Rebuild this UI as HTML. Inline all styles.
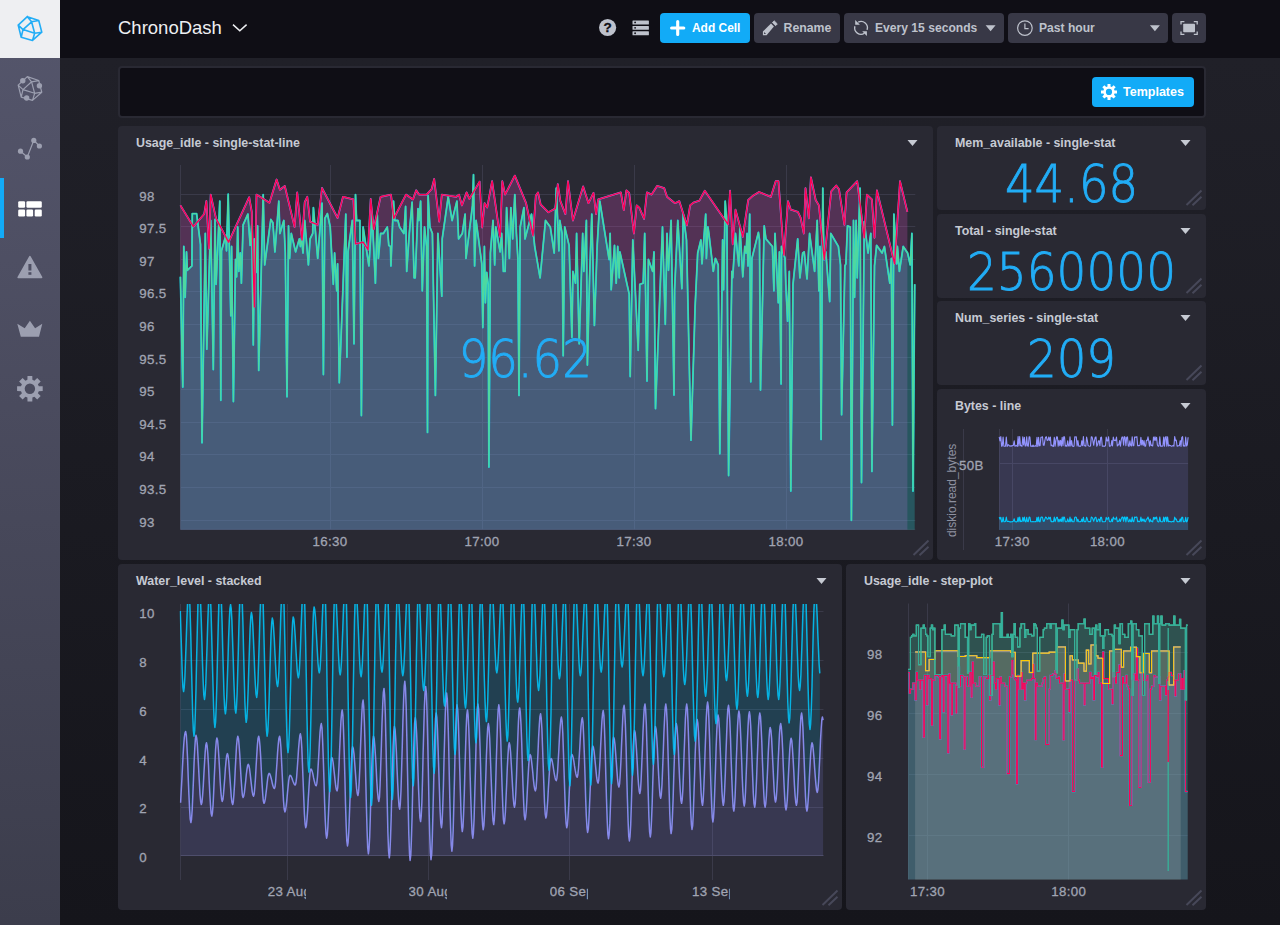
<!DOCTYPE html>
<html lang="en"><head><meta charset="utf-8"><title>ChronoDash</title>
<style>
*{box-sizing:border-box;margin:0;padding:0}
html,body{width:1280px;height:925px;overflow:hidden;background:#1c1c21;font-family:"Liberation Sans",Arial,sans-serif;}
body{position:relative}
.sidebar{position:absolute;left:0;top:0;width:60px;height:925px;background:linear-gradient(to bottom,#55566c 0,#3c3d4c 100%)}
.logo{position:absolute;left:0;top:0;width:60px;height:58px;background:#eeeff2}
.active{position:absolute;left:0;top:178px;width:4px;height:60px;background:#12abf7}
.header{position:absolute;left:60px;top:0;width:1220px;height:58px;background:#0f0e15}
.page{position:absolute;left:60px;top:58px;width:1220px;height:867px;background:linear-gradient(to bottom,#202028 0%,#15151b 100%)}
.title{position:absolute;left:118px;top:14px;height:28px;line-height:28px;font-size:18.5px;color:#eeeff2;white-space:nowrap}
.btn{position:absolute;top:13px;height:30px;border-radius:4px;background:#383846;color:#bec2cc;font-weight:bold;font-size:12.3px;line-height:30px;white-space:nowrap}
.btn.primary{background:#12abf7;color:#fff}
.btn span{position:absolute;top:0}
.tbar{position:absolute;left:118px;top:66px;width:1088px;height:52px;border:2px solid #292933;border-radius:4px;background:#0f0e15}
.cell{position:absolute;background:#292933;border-radius:4px}
.ct{position:absolute;font-weight:bold;font-size:12.4px;color:#c6cad3;white-space:nowrap;line-height:16px}
svg{position:absolute;left:0;top:0}
.big{font-size:52.5px;fill:#22adf6}
.ax{font-size:13.3px;letter-spacing:.35px;fill:#a0a4b2;stroke:#a0a4b2;stroke-width:.3px}
.xl{position:absolute;overflow:hidden;white-space:nowrap;font-size:13.3px;letter-spacing:.35px;color:#a0a4b2;-webkit-text-stroke:.3px #a0a4b2;height:18px;line-height:18px}
</style></head><body>
<div class="sidebar"></div><div class="logo"></div><div class="active"></div>
<div class="header"></div><div class="page"></div>

<div class="title">ChronoDash</div>
<div class="btn primary" style="left:660px;width:90px"><span style="left:32px;font-size:11.95px">Add Cell</span></div>
<div class="btn" style="left:754px;width:86px"><span style="left:29.5px">Rename</span></div>
<div class="btn" style="left:844px;width:160px"><span style="left:31px;font-size:12.12px">Every 15 seconds</span></div>
<div class="btn" style="left:1008px;width:160px"><span style="left:31px;font-size:12.1px">Past hour</span></div>
<div class="btn" style="left:1172px;width:34px"></div>
<div class="tbar"></div>
<div class="btn primary" style="left:1092px;top:77px;width:102px"><span style="left:31px;font-size:12.5px">Templates</span></div>
<div class="cell" style="left:118px;top:126px;width:815px;height:434px"></div>
<div class="ct" style="left:136px;top:135px">Usage_idle - single-stat-line</div>
<div class="cell" style="left:937px;top:126px;width:269px;height:84px"></div>
<div class="ct" style="left:955px;top:135px">Mem_available - single-stat</div>
<div class="cell" style="left:937px;top:214px;width:269px;height:84px"></div>
<div class="ct" style="left:955px;top:223px">Total - single-stat</div>
<div class="cell" style="left:937px;top:301px;width:269px;height:84px"></div>
<div class="ct" style="left:955px;top:310px">Num_series - single-stat</div>
<div class="cell" style="left:937px;top:389px;width:269px;height:171px"></div>
<div class="ct" style="left:955px;top:398px">Bytes - line</div>
<div class="cell" style="left:118px;top:564px;width:724px;height:346px"></div>
<div class="ct" style="left:136px;top:573px">Water_level - stacked</div>
<div class="cell" style="left:846px;top:564px;width:360px;height:346px"></div>
<div class="ct" style="left:864px;top:573px">Usage_idle - step-plot</div>
<svg width="1280" height="925" viewBox="0 0 1280 925" font-family='"Liberation Sans", Arial, sans-serif'>
<path d="M907.5 140.0 h10 l-5 6z" fill="#c6cad3"/>
<path d="M913.5 555.0 L928.5 540.5 M919.5 555.2 L928.5 546.7" stroke="#474859" stroke-width="2" fill="none"/>
<path d="M1180.5 140.0 h10 l-5 6z" fill="#c6cad3"/>
<path d="M1186.5 205.0 L1201.5 190.5 M1192.5 205.2 L1201.5 196.7" stroke="#474859" stroke-width="2" fill="none"/>
<path d="M1180.5 228.0 h10 l-5 6z" fill="#c6cad3"/>
<path d="M1186.5 293.0 L1201.5 278.5 M1192.5 293.2 L1201.5 284.7" stroke="#474859" stroke-width="2" fill="none"/>
<path d="M1180.5 315.0 h10 l-5 6z" fill="#c6cad3"/>
<path d="M1186.5 380.0 L1201.5 365.5 M1192.5 380.2 L1201.5 371.7" stroke="#474859" stroke-width="2" fill="none"/>
<path d="M1180.5 403.0 h10 l-5 6z" fill="#c6cad3"/>
<path d="M1186.5 555.0 L1201.5 540.5 M1192.5 555.2 L1201.5 546.7" stroke="#474859" stroke-width="2" fill="none"/>
<path d="M816.5 578.0 h10 l-5 6z" fill="#c6cad3"/>
<path d="M822.5 905.0 L837.5 890.5 M828.5 905.2 L837.5 896.7" stroke="#474859" stroke-width="2" fill="none"/>
<path d="M1180.5 578.0 h10 l-5 6z" fill="#c6cad3"/>
<path d="M1186.5 905.0 L1201.5 890.5 M1192.5 905.2 L1201.5 896.7" stroke="#474859" stroke-width="2" fill="none"/>
<path d="M27.30 16.65 L38.76 20.54 M38.76 20.54 L41.78 32.20 M41.78 32.20 L32.50 40.40 M32.50 40.40 L21.20 37.20 M21.20 37.20 L18.20 25.10 M18.20 25.10 L27.30 16.65 M27.30 16.65 L31.60 21.80 M31.60 21.80 L38.76 20.54 M31.60 21.80 L23.00 29.60 M18.20 25.10 L23.00 29.60 M23.00 29.60 L34.65 33.30 M31.60 21.80 L34.65 33.30 M34.65 33.30 L41.78 32.20 M34.65 33.30 L32.50 40.40 M23.00 29.60 L21.20 37.20" stroke="#22adf6" stroke-width="1.6" fill="none" stroke-linecap="round" stroke-linejoin="round"/>
<path d="M27.30 76.65 L38.76 80.54 M38.76 80.54 L41.78 92.20 M41.78 92.20 L32.50 100.40 M32.50 100.40 L21.20 97.20 M21.20 97.20 L18.20 85.10 M18.20 85.10 L27.30 76.65 M27.30 76.65 L31.60 81.80 M31.60 81.80 L38.76 80.54 M31.60 81.80 L23.00 89.60 M18.20 85.10 L23.00 89.60 M23.00 89.60 L34.65 93.30 M31.60 81.80 L34.65 93.30 M34.65 93.30 L41.78 92.20 M34.65 93.30 L32.50 100.40 M23.00 89.60 L21.20 97.20" stroke="#9c9fb0" stroke-width="1.2" fill="none" stroke-linecap="round" stroke-linejoin="round"/><circle cx="22.76" cy="80.76" r="2.7" fill="#9c9fb0"/><circle cx="39.40" cy="85.70" r="2.7" fill="#9c9fb0"/><circle cx="26.65" cy="98.05" r="2.7" fill="#9c9fb0"/>
<path d="M20.5 151.2 L27.3 157.0 L33.8 140.4 L39.4 146.0" stroke="#9c9fb0" stroke-width="1.2" fill="none"/>
<circle cx="20.5" cy="151.2" r="2.6" fill="#9c9fb0"/>
<circle cx="27.3" cy="157.0" r="2.6" fill="#9c9fb0"/>
<circle cx="33.8" cy="140.4" r="2.6" fill="#9c9fb0"/>
<circle cx="39.4" cy="146.0" r="2.6" fill="#9c9fb0"/>
<rect x="18.2" y="201.2" width="6.9" height="6.5" rx="1.2" fill="#fff"/>
<rect x="26.4" y="201.2" width="15.4" height="6.5" rx="1.2" fill="#fff"/>
<rect x="18.2" y="209.6" width="6.9" height="6.8" rx="1.2" fill="#fff"/>
<rect x="26.4" y="209.6" width="6.7" height="6.8" rx="1.2" fill="#fff"/>
<rect x="34.7" y="209.6" width="7.1" height="6.8" rx="1.2" fill="#fff"/>
<path d="M29.9 256.6 L41.6 277.4 L18.2 277.4 Z" fill="#9c9fb0" stroke="#9c9fb0" stroke-width="1.6" stroke-linejoin="round"/>
<rect x="28.4" y="264" width="3" height="6.5" fill="#4e4f63"/><rect x="28.4" y="272.2" width="3" height="2.6" fill="#4e4f63"/>
<path d="M17.3 323.8 L24.7 328.3 L29.9 320.8 L35.1 328.3 L42.3 323.8 L39 336.8 L20.8 336.8 Z" fill="#9c9fb0"/>
<path d="M27.4 379.8 L27.5 375.9 L32.3 375.9 L32.4 379.8 L34.4 380.7 L37.2 377.9 L40.7 381.4 L37.9 384.2 L38.8 386.2 L42.7 386.3 L42.7 391.1 L38.8 391.2 L37.9 393.2 L40.7 396.0 L37.2 399.5 L34.4 396.7 L32.4 397.6 L32.3 401.5 L27.5 401.5 L27.4 397.6 L25.4 396.7 L22.6 399.5 L19.1 396.0 L21.9 393.2 L21.0 391.2 L17.1 391.1 L17.1 386.3 L21.0 386.2 L21.9 384.2 L19.1 381.4 L22.6 377.9 L25.4 380.7 Z" fill="#9c9fb0"/><circle cx="29.9" cy="388.7" r="5.2" fill="#4b4c5f"/>
<path d="M233 24.6 L239.8 30.8 L246.6 24.6" stroke="#eeeff2" stroke-width="1.5" fill="none"/>
<circle cx="607.6" cy="27.5" r="8.6" fill="#bec2cc"/>
<text x="607.7" y="32.3" text-anchor="middle" font-size="13.5" font-weight="bold" fill="#0f0e15" stroke="#0f0e15" stroke-width=".3">?</text>
<rect x="632.5" y="20.5" width="16.4" height="3.9" rx=".5" fill="#bec2cc"/><circle cx="635.1" cy="22.45" r=".9" fill="#0f0e15"/>
<rect x="632.5" y="25.9" width="16.4" height="3.9" rx=".5" fill="#bec2cc"/><circle cx="635.1" cy="27.85" r=".9" fill="#0f0e15"/>
<rect x="632.5" y="31.3" width="16.4" height="3.9" rx=".5" fill="#bec2cc"/><circle cx="635.1" cy="33.25" r=".9" fill="#0f0e15"/>
<path d="M671.6 28 H683.8 M677.7 21.6 V34.4" stroke="#fff" stroke-width="3.1" stroke-linecap="round"/>
<path d="M762.9 35.2 V31.5 L771 23.6 L773.9 26.4 L766.6 35.2 Z" fill="#bec2cc"/><path d="M772.4 22.5 L774.2 20.8 L777.3 23.9 L775.6 25.7 Z" fill="#bec2cc" stroke="#bec2cc" stroke-width=".8" stroke-linejoin="round"/><path d="M764.1 32 V33.9 H766 Z" fill="#383846"/>
<g fill="none" stroke="#bec2cc" stroke-width="1.35"><path d="M858.2 22.2 A6.35 6.35 0 0 1 867.07 29.9"/><path d="M854.9 26.3 A6.35 6.35 0 0 0 864.5 33.27"/></g>
<path d="M855.2 19.9 V24.7 H859.9 Z M866.9 36 V31.3 H862.2 Z" fill="#bec2cc"/>
<path d="M985.6 25.2 h10 l-5 6z M1149.9 25.2 h10 l-5 6z" fill="#bec2cc"/>
<circle cx="1024.9" cy="28.1" r="7.3" fill="none" stroke="#bec2cc" stroke-width="1.2"/><path d="M1024.9 23.6 V28.6 H1028.6" fill="none" stroke="#bec2cc" stroke-width="1.2"/>
<rect x="1183.2" y="23.8" width="11.8" height="8.4" rx=".8" fill="#bec2cc"/>
<path d="M1181 24.6 V21.6 H1184.4 M1193.8 21.6 H1197.2 V24.6 M1197.2 31.4 V34.4 H1193.8 M1184.4 34.4 H1181 V31.4" fill="none" stroke="#bec2cc" stroke-width="1.3"/>
<path d="M1107.5 86.4 L1107.5 83.9 L1110.5 83.9 L1110.5 86.4 L1111.8 86.9 L1113.6 85.2 L1115.7 87.3 L1114.0 89.1 L1114.5 90.4 L1117.0 90.4 L1117.0 93.4 L1114.5 93.4 L1114.0 94.7 L1115.7 96.5 L1113.6 98.6 L1111.8 96.9 L1110.5 97.4 L1110.5 99.9 L1107.5 99.9 L1107.5 97.4 L1106.2 96.9 L1104.4 98.6 L1102.3 96.5 L1104.0 94.7 L1103.5 93.4 L1101.0 93.4 L1101.0 90.4 L1103.5 90.4 L1104.0 89.1 L1102.3 87.3 L1104.4 85.2 L1106.2 86.9 Z" fill="#fff"/><circle cx="1109.0" cy="91.9" r="3.1" fill="#12abf7"/>
<path d="M180.5 520.5 H915.3 M180.5 487.5 H915.3 M180.5 454.5 H915.3 M180.5 422.5 H915.3 M180.5 389.5 H915.3 M180.5 357.5 H915.3 M180.5 324.5 H915.3 M180.5 291.5 H915.3 M180.5 259.5 H915.3 M180.5 226.5 H915.3 M180.5 194.5 H915.3 M330.5 165.0 V529.8 M482.5 165.0 V529.8 M634.5 165.0 V529.8 M786.5 165.0 V529.8 M180.5 165.0 V529.8 M180.5 529.3 H915.3" stroke="#3a3a49" stroke-width="1" fill="none"/>
<path d="M180.4 205.4 L193.4 226.6 L204.2 214.0 L206.4 201.0 L209.0 248.6 L210.7 194.6 L216.0 218.4 L228.6 242.2 L249.2 197.2 L251.8 212.0 L254.4 307.0 L256.5 194.6 L269.5 202.8 L276.6 179.5 L279.9 189.8 L284.8 186.0 L294.6 227.0 L297.2 192.4 L302.0 240.0 L304.7 202.2 L307.3 196.8 L310.1 221.6 L317.7 224.9 L322.0 188.0 L337.6 218.0 L343.0 196.8 L353.4 199.4 L355.5 243.9 L363.1 242.2 L368.0 249.7 L370.7 199.0 L373.6 229.2 L380.6 196.8 L391.0 194.6 L393.8 218.4 L406.0 194.6 L413.0 199.4 L416.2 190.3 L419.0 194.6 L426.6 194.6 L431.6 189.2 L434.2 179.0 L439.2 221.6 L441.8 194.6 L456.2 196.8 L459.0 194.6 L461.9 205.4 L466.6 192.4 L469.4 198.9 L479.6 181.6 L482.2 227.5 L484.6 203.2 L487.2 207.6 L492.1 181.2 L500.1 236.8 L502.3 181.2 L505.1 194.6 L514.8 175.6 L526.1 203.2 L533.0 235.7 L535.8 195.7 L538.0 192.4 L540.6 204.3 L548.4 212.3 L555.3 208.6 L557.8 184.2 L560.4 201.1 L565.4 214.1 L568.0 181.2 L572.9 220.5 L583.1 186.4 L588.5 203.2 L593.5 192.9 L596.1 214.1 L598.2 199.4 L620.9 192.4 L623.8 210.2 L626.4 190.3 L629.2 192.9 L633.9 233.5 L636.7 205.4 L639.3 207.6 L644.1 218.8 L646.9 192.4 L651.6 194.6 L657.1 185.9 L664.2 188.1 L667.0 196.8 L675.0 203.2 L679.3 201.1 L686.9 225.3 L690.1 205.4 L693.4 202.6 L699.4 200.6 L704.8 190.7 L728.0 224.4 L730.1 190.7 L732.7 244.3 L735.5 209.7 L742.8 236.8 L748.2 200.0 L753.0 195.7 L759.0 192.0 L770.9 196.8 L775.7 181.2 L778.5 181.2 L783.9 255.1 L788.0 201.1 L790.8 209.7 L797.9 211.9 L800.5 217.3 L803.8 233.5 L805.5 188.1 L808.8 218.4 L810.9 177.3 L815.7 200.0 L818.9 205.4 L824.3 259.5 L831.2 191.4 L836.2 185.5 L839.0 189.2 L844.4 224.9 L846.6 192.4 L857.2 181.2 L864.3 237.8 L866.9 194.6 L871.9 199.4 L874.5 237.8 L876.9 190.3 L894.6 263.8 L900.0 181.2 L907.4 211.9 L907.4 529.8 L180.4 529.8 Z" fill="#ff0054" fill-opacity=".15"/>
<path d="M180.4 276.8 L182.8 387.0 L183.8 246.5 L185.2 297.3 L186.5 251.9 L187.3 270.3 L191.9 265.9 L192.3 213.6 L196.6 213.6 L200.5 244.3 L202.0 442.7 L205.3 233.5 L206.8 349.2 L210.7 220.5 L213.3 369.5 L215.0 219.5 L216.1 284.3 L219.8 201.1 L220.8 400.3 L221.5 250.8 L225.8 235.7 L226.5 250.8 L228.2 194.2 L230.8 315.7 L231.6 246.5 L233.4 401.6 L235.5 259.5 L236.6 276.8 L237.7 227.0 L238.8 271.4 L240.3 253.0 L241.4 283.2 L243.1 224.9 L247.9 214.1 L250.2 245.4 L251.8 224.9 L253.3 344.9 L254.4 238.9 L256.1 272.4 L257.6 225.9 L258.7 370.4 L263.2 194.6 L264.7 264.9 L270.8 219.5 L272.9 222.7 L274.9 251.9 L278.8 201.1 L279.9 233.5 L283.8 220.5 L285.3 253.0 L287.0 396.7 L288.5 225.9 L289.6 258.4 L291.3 233.5 L295.6 251.9 L299.3 238.9 L300.4 246.5 L301.5 237.8 L303.0 253.0 L304.7 220.5 L308.4 264.9 L310.1 238.9 L312.7 233.5 L313.4 207.6 L317.7 258.4 L322.0 203.2 L323.4 374.5 L324.8 218.4 L327.4 213.6 L330.2 227.0 L333.3 284.3 L334.6 253.0 L336.7 290.8 L337.6 263.8 L339.3 382.7 L345.8 214.1 L346.9 357.2 L348.0 251.9 L352.3 220.5 L354.0 343.8 L355.5 194.6 L356.6 220.5 L359.9 220.5 L361.4 415.6 L363.1 227.0 L368.9 265.9 L372.1 214.1 L375.4 283.2 L377.3 215.1 L378.4 258.4 L380.6 233.5 L383.4 233.5 L387.3 227.0 L388.8 245.4 L390.5 246.5 L390.9 265.9 L393.5 201.1 L394.8 220.5 L397.9 220.5 L399.6 227.0 L403.9 233.5 L405.6 206.5 L406.7 271.4 L409.3 233.5 L412.1 202.2 L414.1 277.8 L415.2 277.8 L418.0 208.6 L419.0 220.5 L420.6 201.1 L422.3 290.8 L424.5 227.0 L426.6 246.5 L427.5 432.4 L428.1 195.7 L429.9 227.0 L432.4 233.5 L435.4 395.4 L437.9 233.5 L441.8 296.2 L442.2 238.9 L448.2 196.8 L452.1 220.5 L456.9 201.1 L458.6 238.9 L462.3 233.5 L465.1 214.1 L466.0 258.4 L472.5 205.4 L473.5 174.7 L474.6 265.9 L476.1 220.5 L481.8 263.8 L482.8 327.6 L484.4 246.5 L485.4 302.7 L486.7 272.4 L488.2 284.3 L488.9 467.0 L490.4 253.0 L493.0 220.5 L494.7 264.9 L495.8 227.0 L500.1 251.9 L501.6 233.5 L503.4 271.4 L505.1 271.4 L506.6 207.6 L509.4 258.4 L510.9 207.6 L512.7 238.9 L514.8 194.6 L516.4 233.5 L517.9 258.4 L519.0 395.4 L520.2 227.0 L523.9 207.6 L525.0 238.9 L531.5 214.1 L534.7 246.5 L540.1 277.8 L545.5 220.5 L550.3 227.0 L554.2 253.0 L556.3 188.1 L558.9 250.8 L559.8 220.5 L562.1 233.5 L563.2 355.7 L564.7 227.0 L569.1 245.4 L571.9 337.3 L572.9 271.4 L575.5 283.2 L576.6 233.5 L579.2 343.8 L582.7 233.5 L583.8 271.4 L586.4 220.5 L587.4 365.0 L589.6 276.8 L591.8 214.1 L594.4 325.4 L597.2 245.4 L599.8 201.1 L609.1 259.5 L610.1 233.5 L611.2 289.7 L614.5 245.4 L616.2 283.2 L617.7 246.5 L619.2 277.8 L619.9 251.9 L629.2 294.1 L630.2 376.5 L632.8 240.0 L638.2 350.3 L639.8 284.3 L643.2 283.2 L644.7 233.5 L647.0 381.0 L648.4 259.5 L652.7 271.4 L654.0 251.9 L655.5 408.6 L662.5 227.0 L665.3 324.3 L667.0 233.5 L668.5 270.3 L671.1 220.5 L674.0 395.0 L674.6 289.7 L677.8 220.5 L681.9 288.6 L683.2 214.1 L686.5 240.0 L691.0 440.2 L695.1 307.0 L697.7 253.0 L700.9 240.0 L702.0 263.8 L705.7 214.1 L706.4 258.4 L707.9 227.0 L708.9 233.5 L713.3 271.4 L715.4 258.4 L718.2 264.9 L719.8 453.7 L722.6 240.0 L723.6 289.7 L725.2 201.1 L726.9 224.9 L728.6 475.5 L731.9 271.4 L732.7 277.8 L735.5 233.5 L738.8 265.9 L739.9 227.0 L742.8 276.8 L744.8 246.5 L746.1 253.0 L747.1 233.5 L748.0 265.9 L749.7 214.1 L750.8 381.8 L751.9 258.4 L758.4 232.4 L759.5 240.0 L760.5 390.0 L764.2 225.9 L765.9 238.9 L772.4 246.5 L773.9 290.8 L775.0 233.5 L778.3 302.7 L779.4 251.9 L781.1 383.9 L781.5 246.5 L785.0 258.4 L785.8 284.3 L787.6 321.1 L789.3 271.4 L790.8 491.0 L793.0 284.3 L797.7 238.9 L799.9 277.8 L802.7 253.0 L804.2 251.9 L807.0 278.9 L809.6 233.5 L814.6 271.4 L817.2 220.5 L818.9 290.8 L820.0 246.5 L821.1 439.4 L822.8 188.1 L823.9 259.5 L825.8 251.9 L829.7 301.6 L830.8 233.5 L838.4 246.5 L840.5 264.9 L841.6 414.7 L844.9 265.9 L845.9 263.8 L847.5 225.9 L850.3 227.0 L851.4 520.3 L853.5 220.5 L854.6 297.3 L856.1 220.5 L857.2 277.8 L860.0 188.1 L861.5 482.5 L864.3 221.6 L868.0 253.0 L870.8 233.5 L871.9 471.4 L874.5 265.9 L876.6 245.4 L882.1 253.0 L884.4 246.5 L889.8 283.2 L891.4 258.4 L892.4 425.0 L893.9 214.1 L896.8 263.8 L897.4 246.5 L899.4 271.4 L903.2 246.5 L907.6 253.0 L910.2 264.9 L911.9 233.5 L913.0 491.0 L914.7 284.3 L914.7 529.8 L180.4 529.8 Z" fill="#4ED8A0" fill-opacity=".15"/>
<path d="M180.4 205.4 L193.4 226.6 L204.2 214.0 L206.4 201.0 L209.0 248.6 L210.7 194.6 L216.0 218.4 L228.6 242.2 L249.2 197.2 L251.8 212.0 L254.4 307.0 L256.5 194.6 L269.5 202.8 L276.6 179.5 L279.9 189.8 L284.8 186.0 L294.6 227.0 L297.2 192.4 L302.0 240.0 L304.7 202.2 L307.3 196.8 L310.1 221.6 L317.7 224.9 L322.0 188.0 L337.6 218.0 L343.0 196.8 L353.4 199.4 L355.5 243.9 L363.1 242.2 L368.0 249.7 L370.7 199.0 L373.6 229.2 L380.6 196.8 L391.0 194.6 L393.8 218.4 L406.0 194.6 L413.0 199.4 L416.2 190.3 L419.0 194.6 L426.6 194.6 L431.6 189.2 L434.2 179.0 L439.2 221.6 L441.8 194.6 L456.2 196.8 L459.0 194.6 L461.9 205.4 L466.6 192.4 L469.4 198.9 L479.6 181.6 L482.2 227.5 L484.6 203.2 L487.2 207.6 L492.1 181.2 L500.1 236.8 L502.3 181.2 L505.1 194.6 L514.8 175.6 L526.1 203.2 L533.0 235.7 L535.8 195.7 L538.0 192.4 L540.6 204.3 L548.4 212.3 L555.3 208.6 L557.8 184.2 L560.4 201.1 L565.4 214.1 L568.0 181.2 L572.9 220.5 L583.1 186.4 L588.5 203.2 L593.5 192.9 L596.1 214.1 L598.2 199.4 L620.9 192.4 L623.8 210.2 L626.4 190.3 L629.2 192.9 L633.9 233.5 L636.7 205.4 L639.3 207.6 L644.1 218.8 L646.9 192.4 L651.6 194.6 L657.1 185.9 L664.2 188.1 L667.0 196.8 L675.0 203.2 L679.3 201.1 L686.9 225.3 L690.1 205.4 L693.4 202.6 L699.4 200.6 L704.8 190.7 L728.0 224.4 L730.1 190.7 L732.7 244.3 L735.5 209.7 L742.8 236.8 L748.2 200.0 L753.0 195.7 L759.0 192.0 L770.9 196.8 L775.7 181.2 L778.5 181.2 L783.9 255.1 L788.0 201.1 L790.8 209.7 L797.9 211.9 L800.5 217.3 L803.8 233.5 L805.5 188.1 L808.8 218.4 L810.9 177.3 L815.7 200.0 L818.9 205.4 L824.3 259.5 L831.2 191.4 L836.2 185.5 L839.0 189.2 L844.4 224.9 L846.6 192.4 L857.2 181.2 L864.3 237.8 L866.9 194.6 L871.9 199.4 L874.5 237.8 L876.9 190.3 L894.6 263.8 L900.0 181.2 L907.4 211.9 L907.4 529.8 L180.4 529.8 Z" fill="#9394FF" fill-opacity=".15"/>
<path d="M180.4 276.8 L182.8 387.0 L183.8 246.5 L185.2 297.3 L186.5 251.9 L187.3 270.3 L191.9 265.9 L192.3 213.6 L196.6 213.6 L200.5 244.3 L202.0 442.7 L205.3 233.5 L206.8 349.2 L210.7 220.5 L213.3 369.5 L215.0 219.5 L216.1 284.3 L219.8 201.1 L220.8 400.3 L221.5 250.8 L225.8 235.7 L226.5 250.8 L228.2 194.2 L230.8 315.7 L231.6 246.5 L233.4 401.6 L235.5 259.5 L236.6 276.8 L237.7 227.0 L238.8 271.4 L240.3 253.0 L241.4 283.2 L243.1 224.9 L247.9 214.1 L250.2 245.4 L251.8 224.9 L253.3 344.9 L254.4 238.9 L256.1 272.4 L257.6 225.9 L258.7 370.4 L263.2 194.6 L264.7 264.9 L270.8 219.5 L272.9 222.7 L274.9 251.9 L278.8 201.1 L279.9 233.5 L283.8 220.5 L285.3 253.0 L287.0 396.7 L288.5 225.9 L289.6 258.4 L291.3 233.5 L295.6 251.9 L299.3 238.9 L300.4 246.5 L301.5 237.8 L303.0 253.0 L304.7 220.5 L308.4 264.9 L310.1 238.9 L312.7 233.5 L313.4 207.6 L317.7 258.4 L322.0 203.2 L323.4 374.5 L324.8 218.4 L327.4 213.6 L330.2 227.0 L333.3 284.3 L334.6 253.0 L336.7 290.8 L337.6 263.8 L339.3 382.7 L345.8 214.1 L346.9 357.2 L348.0 251.9 L352.3 220.5 L354.0 343.8 L355.5 194.6 L356.6 220.5 L359.9 220.5 L361.4 415.6 L363.1 227.0 L368.9 265.9 L372.1 214.1 L375.4 283.2 L377.3 215.1 L378.4 258.4 L380.6 233.5 L383.4 233.5 L387.3 227.0 L388.8 245.4 L390.5 246.5 L390.9 265.9 L393.5 201.1 L394.8 220.5 L397.9 220.5 L399.6 227.0 L403.9 233.5 L405.6 206.5 L406.7 271.4 L409.3 233.5 L412.1 202.2 L414.1 277.8 L415.2 277.8 L418.0 208.6 L419.0 220.5 L420.6 201.1 L422.3 290.8 L424.5 227.0 L426.6 246.5 L427.5 432.4 L428.1 195.7 L429.9 227.0 L432.4 233.5 L435.4 395.4 L437.9 233.5 L441.8 296.2 L442.2 238.9 L448.2 196.8 L452.1 220.5 L456.9 201.1 L458.6 238.9 L462.3 233.5 L465.1 214.1 L466.0 258.4 L472.5 205.4 L473.5 174.7 L474.6 265.9 L476.1 220.5 L481.8 263.8 L482.8 327.6 L484.4 246.5 L485.4 302.7 L486.7 272.4 L488.2 284.3 L488.9 467.0 L490.4 253.0 L493.0 220.5 L494.7 264.9 L495.8 227.0 L500.1 251.9 L501.6 233.5 L503.4 271.4 L505.1 271.4 L506.6 207.6 L509.4 258.4 L510.9 207.6 L512.7 238.9 L514.8 194.6 L516.4 233.5 L517.9 258.4 L519.0 395.4 L520.2 227.0 L523.9 207.6 L525.0 238.9 L531.5 214.1 L534.7 246.5 L540.1 277.8 L545.5 220.5 L550.3 227.0 L554.2 253.0 L556.3 188.1 L558.9 250.8 L559.8 220.5 L562.1 233.5 L563.2 355.7 L564.7 227.0 L569.1 245.4 L571.9 337.3 L572.9 271.4 L575.5 283.2 L576.6 233.5 L579.2 343.8 L582.7 233.5 L583.8 271.4 L586.4 220.5 L587.4 365.0 L589.6 276.8 L591.8 214.1 L594.4 325.4 L597.2 245.4 L599.8 201.1 L609.1 259.5 L610.1 233.5 L611.2 289.7 L614.5 245.4 L616.2 283.2 L617.7 246.5 L619.2 277.8 L619.9 251.9 L629.2 294.1 L630.2 376.5 L632.8 240.0 L638.2 350.3 L639.8 284.3 L643.2 283.2 L644.7 233.5 L647.0 381.0 L648.4 259.5 L652.7 271.4 L654.0 251.9 L655.5 408.6 L662.5 227.0 L665.3 324.3 L667.0 233.5 L668.5 270.3 L671.1 220.5 L674.0 395.0 L674.6 289.7 L677.8 220.5 L681.9 288.6 L683.2 214.1 L686.5 240.0 L691.0 440.2 L695.1 307.0 L697.7 253.0 L700.9 240.0 L702.0 263.8 L705.7 214.1 L706.4 258.4 L707.9 227.0 L708.9 233.5 L713.3 271.4 L715.4 258.4 L718.2 264.9 L719.8 453.7 L722.6 240.0 L723.6 289.7 L725.2 201.1 L726.9 224.9 L728.6 475.5 L731.9 271.4 L732.7 277.8 L735.5 233.5 L738.8 265.9 L739.9 227.0 L742.8 276.8 L744.8 246.5 L746.1 253.0 L747.1 233.5 L748.0 265.9 L749.7 214.1 L750.8 381.8 L751.9 258.4 L758.4 232.4 L759.5 240.0 L760.5 390.0 L764.2 225.9 L765.9 238.9 L772.4 246.5 L773.9 290.8 L775.0 233.5 L778.3 302.7 L779.4 251.9 L781.1 383.9 L781.5 246.5 L785.0 258.4 L785.8 284.3 L787.6 321.1 L789.3 271.4 L790.8 491.0 L793.0 284.3 L797.7 238.9 L799.9 277.8 L802.7 253.0 L804.2 251.9 L807.0 278.9 L809.6 233.5 L814.6 271.4 L817.2 220.5 L818.9 290.8 L820.0 246.5 L821.1 439.4 L822.8 188.1 L823.9 259.5 L825.8 251.9 L829.7 301.6 L830.8 233.5 L838.4 246.5 L840.5 264.9 L841.6 414.7 L844.9 265.9 L845.9 263.8 L847.5 225.9 L850.3 227.0 L851.4 520.3 L853.5 220.5 L854.6 297.3 L856.1 220.5 L857.2 277.8 L860.0 188.1 L861.5 482.5 L864.3 221.6 L868.0 253.0 L870.8 233.5 L871.9 471.4 L874.5 265.9 L876.6 245.4 L882.1 253.0 L884.4 246.5 L889.8 283.2 L891.4 258.4 L892.4 425.0 L893.9 214.1 L896.8 263.8 L897.4 246.5 L899.4 271.4 L903.2 246.5 L907.6 253.0 L910.2 264.9 L911.9 233.5 L913.0 491.0 L914.7 284.3 L914.7 529.8 L180.4 529.8 Z" fill="#00C9FF" fill-opacity=".15"/>
<g fill="none" stroke-linejoin="round" stroke-width="1.4">
<path d="M180.4 276.8 L182.8 387.0 L183.8 246.5 L185.2 297.3 L186.5 251.9 L187.3 270.3 L191.9 265.9 L192.3 213.6 L196.6 213.6 L200.5 244.3 L202.0 442.7 L205.3 233.5 L206.8 349.2 L210.7 220.5 L213.3 369.5 L215.0 219.5 L216.1 284.3 L219.8 201.1 L220.8 400.3 L221.5 250.8 L225.8 235.7 L226.5 250.8 L228.2 194.2 L230.8 315.7 L231.6 246.5 L233.4 401.6 L235.5 259.5 L236.6 276.8 L237.7 227.0 L238.8 271.4 L240.3 253.0 L241.4 283.2 L243.1 224.9 L247.9 214.1 L250.2 245.4 L251.8 224.9 L253.3 344.9 L254.4 238.9 L256.1 272.4 L257.6 225.9 L258.7 370.4 L263.2 194.6 L264.7 264.9 L270.8 219.5 L272.9 222.7 L274.9 251.9 L278.8 201.1 L279.9 233.5 L283.8 220.5 L285.3 253.0 L287.0 396.7 L288.5 225.9 L289.6 258.4 L291.3 233.5 L295.6 251.9 L299.3 238.9 L300.4 246.5 L301.5 237.8 L303.0 253.0 L304.7 220.5 L308.4 264.9 L310.1 238.9 L312.7 233.5 L313.4 207.6 L317.7 258.4 L322.0 203.2 L323.4 374.5 L324.8 218.4 L327.4 213.6 L330.2 227.0 L333.3 284.3 L334.6 253.0 L336.7 290.8 L337.6 263.8 L339.3 382.7 L345.8 214.1 L346.9 357.2 L348.0 251.9 L352.3 220.5 L354.0 343.8 L355.5 194.6 L356.6 220.5 L359.9 220.5 L361.4 415.6 L363.1 227.0 L368.9 265.9 L372.1 214.1 L375.4 283.2 L377.3 215.1 L378.4 258.4 L380.6 233.5 L383.4 233.5 L387.3 227.0 L388.8 245.4 L390.5 246.5 L390.9 265.9 L393.5 201.1 L394.8 220.5 L397.9 220.5 L399.6 227.0 L403.9 233.5 L405.6 206.5 L406.7 271.4 L409.3 233.5 L412.1 202.2 L414.1 277.8 L415.2 277.8 L418.0 208.6 L419.0 220.5 L420.6 201.1 L422.3 290.8 L424.5 227.0 L426.6 246.5 L427.5 432.4 L428.1 195.7 L429.9 227.0 L432.4 233.5 L435.4 395.4 L437.9 233.5 L441.8 296.2 L442.2 238.9 L448.2 196.8 L452.1 220.5 L456.9 201.1 L458.6 238.9 L462.3 233.5 L465.1 214.1 L466.0 258.4 L472.5 205.4 L473.5 174.7 L474.6 265.9 L476.1 220.5 L481.8 263.8 L482.8 327.6 L484.4 246.5 L485.4 302.7 L486.7 272.4 L488.2 284.3 L488.9 467.0 L490.4 253.0 L493.0 220.5 L494.7 264.9 L495.8 227.0 L500.1 251.9 L501.6 233.5 L503.4 271.4 L505.1 271.4 L506.6 207.6 L509.4 258.4 L510.9 207.6 L512.7 238.9 L514.8 194.6 L516.4 233.5 L517.9 258.4 L519.0 395.4 L520.2 227.0 L523.9 207.6 L525.0 238.9 L531.5 214.1 L534.7 246.5 L540.1 277.8 L545.5 220.5 L550.3 227.0 L554.2 253.0 L556.3 188.1 L558.9 250.8 L559.8 220.5 L562.1 233.5 L563.2 355.7 L564.7 227.0 L569.1 245.4 L571.9 337.3 L572.9 271.4 L575.5 283.2 L576.6 233.5 L579.2 343.8 L582.7 233.5 L583.8 271.4 L586.4 220.5 L587.4 365.0 L589.6 276.8 L591.8 214.1 L594.4 325.4 L597.2 245.4 L599.8 201.1 L609.1 259.5 L610.1 233.5 L611.2 289.7 L614.5 245.4 L616.2 283.2 L617.7 246.5 L619.2 277.8 L619.9 251.9 L629.2 294.1 L630.2 376.5 L632.8 240.0 L638.2 350.3 L639.8 284.3 L643.2 283.2 L644.7 233.5 L647.0 381.0 L648.4 259.5 L652.7 271.4 L654.0 251.9 L655.5 408.6 L662.5 227.0 L665.3 324.3 L667.0 233.5 L668.5 270.3 L671.1 220.5 L674.0 395.0 L674.6 289.7 L677.8 220.5 L681.9 288.6 L683.2 214.1 L686.5 240.0 L691.0 440.2 L695.1 307.0 L697.7 253.0 L700.9 240.0 L702.0 263.8 L705.7 214.1 L706.4 258.4 L707.9 227.0 L708.9 233.5 L713.3 271.4 L715.4 258.4 L718.2 264.9 L719.8 453.7 L722.6 240.0 L723.6 289.7 L725.2 201.1 L726.9 224.9 L728.6 475.5 L731.9 271.4 L732.7 277.8 L735.5 233.5 L738.8 265.9 L739.9 227.0 L742.8 276.8 L744.8 246.5 L746.1 253.0 L747.1 233.5 L748.0 265.9 L749.7 214.1 L750.8 381.8 L751.9 258.4 L758.4 232.4 L759.5 240.0 L760.5 390.0 L764.2 225.9 L765.9 238.9 L772.4 246.5 L773.9 290.8 L775.0 233.5 L778.3 302.7 L779.4 251.9 L781.1 383.9 L781.5 246.5 L785.0 258.4 L785.8 284.3 L787.6 321.1 L789.3 271.4 L790.8 491.0 L793.0 284.3 L797.7 238.9 L799.9 277.8 L802.7 253.0 L804.2 251.9 L807.0 278.9 L809.6 233.5 L814.6 271.4 L817.2 220.5 L818.9 290.8 L820.0 246.5 L821.1 439.4 L822.8 188.1 L823.9 259.5 L825.8 251.9 L829.7 301.6 L830.8 233.5 L838.4 246.5 L840.5 264.9 L841.6 414.7 L844.9 265.9 L845.9 263.8 L847.5 225.9 L850.3 227.0 L851.4 520.3 L853.5 220.5 L854.6 297.3 L856.1 220.5 L857.2 277.8 L860.0 188.1 L861.5 482.5 L864.3 221.6 L868.0 253.0 L870.8 233.5 L871.9 471.4 L874.5 265.9 L876.6 245.4 L882.1 253.0 L884.4 246.5 L889.8 283.2 L891.4 258.4 L892.4 425.0 L893.9 214.1 L896.8 263.8 L897.4 246.5 L899.4 271.4 L903.2 246.5 L907.6 253.0 L910.2 264.9 L911.9 233.5 L913.0 491.0 L914.7 284.3" stroke="#00C9FF" stroke-width="1.8"/>
<path d="M180.4 205.4 L193.4 226.6 L204.2 214.0 L206.4 201.0 L209.0 248.6 L210.7 194.6 L216.0 218.4 L228.6 242.2 L249.2 197.2 L251.8 212.0 L254.4 307.0 L256.5 194.6 L269.5 202.8 L276.6 179.5 L279.9 189.8 L284.8 186.0 L294.6 227.0 L297.2 192.4 L302.0 240.0 L304.7 202.2 L307.3 196.8 L310.1 221.6 L317.7 224.9 L322.0 188.0 L337.6 218.0 L343.0 196.8 L353.4 199.4 L355.5 243.9 L363.1 242.2 L368.0 249.7 L370.7 199.0 L373.6 229.2 L380.6 196.8 L391.0 194.6 L393.8 218.4 L406.0 194.6 L413.0 199.4 L416.2 190.3 L419.0 194.6 L426.6 194.6 L431.6 189.2 L434.2 179.0 L439.2 221.6 L441.8 194.6 L456.2 196.8 L459.0 194.6 L461.9 205.4 L466.6 192.4 L469.4 198.9 L479.6 181.6 L482.2 227.5 L484.6 203.2 L487.2 207.6 L492.1 181.2 L500.1 236.8 L502.3 181.2 L505.1 194.6 L514.8 175.6 L526.1 203.2 L533.0 235.7 L535.8 195.7 L538.0 192.4 L540.6 204.3 L548.4 212.3 L555.3 208.6 L557.8 184.2 L560.4 201.1 L565.4 214.1 L568.0 181.2 L572.9 220.5 L583.1 186.4 L588.5 203.2 L593.5 192.9 L596.1 214.1 L598.2 199.4 L620.9 192.4 L623.8 210.2 L626.4 190.3 L629.2 192.9 L633.9 233.5 L636.7 205.4 L639.3 207.6 L644.1 218.8 L646.9 192.4 L651.6 194.6 L657.1 185.9 L664.2 188.1 L667.0 196.8 L675.0 203.2 L679.3 201.1 L686.9 225.3 L690.1 205.4 L693.4 202.6 L699.4 200.6 L704.8 190.7 L728.0 224.4 L730.1 190.7 L732.7 244.3 L735.5 209.7 L742.8 236.8 L748.2 200.0 L753.0 195.7 L759.0 192.0 L770.9 196.8 L775.7 181.2 L778.5 181.2 L783.9 255.1 L788.0 201.1 L790.8 209.7 L797.9 211.9 L800.5 217.3 L803.8 233.5 L805.5 188.1 L808.8 218.4 L810.9 177.3 L815.7 200.0 L818.9 205.4 L824.3 259.5 L831.2 191.4 L836.2 185.5 L839.0 189.2 L844.4 224.9 L846.6 192.4 L857.2 181.2 L864.3 237.8 L866.9 194.6 L871.9 199.4 L874.5 237.8 L876.9 190.3 L894.6 263.8 L900.0 181.2 L907.4 211.9" stroke="#9394FF" stroke-width="1.8"/>
<path d="M180.4 276.8 L182.8 387.0 L183.8 246.5 L185.2 297.3 L186.5 251.9 L187.3 270.3 L191.9 265.9 L192.3 213.6 L196.6 213.6 L200.5 244.3 L202.0 442.7 L205.3 233.5 L206.8 349.2 L210.7 220.5 L213.3 369.5 L215.0 219.5 L216.1 284.3 L219.8 201.1 L220.8 400.3 L221.5 250.8 L225.8 235.7 L226.5 250.8 L228.2 194.2 L230.8 315.7 L231.6 246.5 L233.4 401.6 L235.5 259.5 L236.6 276.8 L237.7 227.0 L238.8 271.4 L240.3 253.0 L241.4 283.2 L243.1 224.9 L247.9 214.1 L250.2 245.4 L251.8 224.9 L253.3 344.9 L254.4 238.9 L256.1 272.4 L257.6 225.9 L258.7 370.4 L263.2 194.6 L264.7 264.9 L270.8 219.5 L272.9 222.7 L274.9 251.9 L278.8 201.1 L279.9 233.5 L283.8 220.5 L285.3 253.0 L287.0 396.7 L288.5 225.9 L289.6 258.4 L291.3 233.5 L295.6 251.9 L299.3 238.9 L300.4 246.5 L301.5 237.8 L303.0 253.0 L304.7 220.5 L308.4 264.9 L310.1 238.9 L312.7 233.5 L313.4 207.6 L317.7 258.4 L322.0 203.2 L323.4 374.5 L324.8 218.4 L327.4 213.6 L330.2 227.0 L333.3 284.3 L334.6 253.0 L336.7 290.8 L337.6 263.8 L339.3 382.7 L345.8 214.1 L346.9 357.2 L348.0 251.9 L352.3 220.5 L354.0 343.8 L355.5 194.6 L356.6 220.5 L359.9 220.5 L361.4 415.6 L363.1 227.0 L368.9 265.9 L372.1 214.1 L375.4 283.2 L377.3 215.1 L378.4 258.4 L380.6 233.5 L383.4 233.5 L387.3 227.0 L388.8 245.4 L390.5 246.5 L390.9 265.9 L393.5 201.1 L394.8 220.5 L397.9 220.5 L399.6 227.0 L403.9 233.5 L405.6 206.5 L406.7 271.4 L409.3 233.5 L412.1 202.2 L414.1 277.8 L415.2 277.8 L418.0 208.6 L419.0 220.5 L420.6 201.1 L422.3 290.8 L424.5 227.0 L426.6 246.5 L427.5 432.4 L428.1 195.7 L429.9 227.0 L432.4 233.5 L435.4 395.4 L437.9 233.5 L441.8 296.2 L442.2 238.9 L448.2 196.8 L452.1 220.5 L456.9 201.1 L458.6 238.9 L462.3 233.5 L465.1 214.1 L466.0 258.4 L472.5 205.4 L473.5 174.7 L474.6 265.9 L476.1 220.5 L481.8 263.8 L482.8 327.6 L484.4 246.5 L485.4 302.7 L486.7 272.4 L488.2 284.3 L488.9 467.0 L490.4 253.0 L493.0 220.5 L494.7 264.9 L495.8 227.0 L500.1 251.9 L501.6 233.5 L503.4 271.4 L505.1 271.4 L506.6 207.6 L509.4 258.4 L510.9 207.6 L512.7 238.9 L514.8 194.6 L516.4 233.5 L517.9 258.4 L519.0 395.4 L520.2 227.0 L523.9 207.6 L525.0 238.9 L531.5 214.1 L534.7 246.5 L540.1 277.8 L545.5 220.5 L550.3 227.0 L554.2 253.0 L556.3 188.1 L558.9 250.8 L559.8 220.5 L562.1 233.5 L563.2 355.7 L564.7 227.0 L569.1 245.4 L571.9 337.3 L572.9 271.4 L575.5 283.2 L576.6 233.5 L579.2 343.8 L582.7 233.5 L583.8 271.4 L586.4 220.5 L587.4 365.0 L589.6 276.8 L591.8 214.1 L594.4 325.4 L597.2 245.4 L599.8 201.1 L609.1 259.5 L610.1 233.5 L611.2 289.7 L614.5 245.4 L616.2 283.2 L617.7 246.5 L619.2 277.8 L619.9 251.9 L629.2 294.1 L630.2 376.5 L632.8 240.0 L638.2 350.3 L639.8 284.3 L643.2 283.2 L644.7 233.5 L647.0 381.0 L648.4 259.5 L652.7 271.4 L654.0 251.9 L655.5 408.6 L662.5 227.0 L665.3 324.3 L667.0 233.5 L668.5 270.3 L671.1 220.5 L674.0 395.0 L674.6 289.7 L677.8 220.5 L681.9 288.6 L683.2 214.1 L686.5 240.0 L691.0 440.2 L695.1 307.0 L697.7 253.0 L700.9 240.0 L702.0 263.8 L705.7 214.1 L706.4 258.4 L707.9 227.0 L708.9 233.5 L713.3 271.4 L715.4 258.4 L718.2 264.9 L719.8 453.7 L722.6 240.0 L723.6 289.7 L725.2 201.1 L726.9 224.9 L728.6 475.5 L731.9 271.4 L732.7 277.8 L735.5 233.5 L738.8 265.9 L739.9 227.0 L742.8 276.8 L744.8 246.5 L746.1 253.0 L747.1 233.5 L748.0 265.9 L749.7 214.1 L750.8 381.8 L751.9 258.4 L758.4 232.4 L759.5 240.0 L760.5 390.0 L764.2 225.9 L765.9 238.9 L772.4 246.5 L773.9 290.8 L775.0 233.5 L778.3 302.7 L779.4 251.9 L781.1 383.9 L781.5 246.5 L785.0 258.4 L785.8 284.3 L787.6 321.1 L789.3 271.4 L790.8 491.0 L793.0 284.3 L797.7 238.9 L799.9 277.8 L802.7 253.0 L804.2 251.9 L807.0 278.9 L809.6 233.5 L814.6 271.4 L817.2 220.5 L818.9 290.8 L820.0 246.5 L821.1 439.4 L822.8 188.1 L823.9 259.5 L825.8 251.9 L829.7 301.6 L830.8 233.5 L838.4 246.5 L840.5 264.9 L841.6 414.7 L844.9 265.9 L845.9 263.8 L847.5 225.9 L850.3 227.0 L851.4 520.3 L853.5 220.5 L854.6 297.3 L856.1 220.5 L857.2 277.8 L860.0 188.1 L861.5 482.5 L864.3 221.6 L868.0 253.0 L870.8 233.5 L871.9 471.4 L874.5 265.9 L876.6 245.4 L882.1 253.0 L884.4 246.5 L889.8 283.2 L891.4 258.4 L892.4 425.0 L893.9 214.1 L896.8 263.8 L897.4 246.5 L899.4 271.4 L903.2 246.5 L907.6 253.0 L910.2 264.9 L911.9 233.5 L913.0 491.0 L914.7 284.3" stroke="#4ED8A0"/>
<path d="M180.4 205.4 L193.4 226.6 L204.2 214.0 L206.4 201.0 L209.0 248.6 L210.7 194.6 L216.0 218.4 L228.6 242.2 L249.2 197.2 L251.8 212.0 L254.4 307.0 L256.5 194.6 L269.5 202.8 L276.6 179.5 L279.9 189.8 L284.8 186.0 L294.6 227.0 L297.2 192.4 L302.0 240.0 L304.7 202.2 L307.3 196.8 L310.1 221.6 L317.7 224.9 L322.0 188.0 L337.6 218.0 L343.0 196.8 L353.4 199.4 L355.5 243.9 L363.1 242.2 L368.0 249.7 L370.7 199.0 L373.6 229.2 L380.6 196.8 L391.0 194.6 L393.8 218.4 L406.0 194.6 L413.0 199.4 L416.2 190.3 L419.0 194.6 L426.6 194.6 L431.6 189.2 L434.2 179.0 L439.2 221.6 L441.8 194.6 L456.2 196.8 L459.0 194.6 L461.9 205.4 L466.6 192.4 L469.4 198.9 L479.6 181.6 L482.2 227.5 L484.6 203.2 L487.2 207.6 L492.1 181.2 L500.1 236.8 L502.3 181.2 L505.1 194.6 L514.8 175.6 L526.1 203.2 L533.0 235.7 L535.8 195.7 L538.0 192.4 L540.6 204.3 L548.4 212.3 L555.3 208.6 L557.8 184.2 L560.4 201.1 L565.4 214.1 L568.0 181.2 L572.9 220.5 L583.1 186.4 L588.5 203.2 L593.5 192.9 L596.1 214.1 L598.2 199.4 L620.9 192.4 L623.8 210.2 L626.4 190.3 L629.2 192.9 L633.9 233.5 L636.7 205.4 L639.3 207.6 L644.1 218.8 L646.9 192.4 L651.6 194.6 L657.1 185.9 L664.2 188.1 L667.0 196.8 L675.0 203.2 L679.3 201.1 L686.9 225.3 L690.1 205.4 L693.4 202.6 L699.4 200.6 L704.8 190.7 L728.0 224.4 L730.1 190.7 L732.7 244.3 L735.5 209.7 L742.8 236.8 L748.2 200.0 L753.0 195.7 L759.0 192.0 L770.9 196.8 L775.7 181.2 L778.5 181.2 L783.9 255.1 L788.0 201.1 L790.8 209.7 L797.9 211.9 L800.5 217.3 L803.8 233.5 L805.5 188.1 L808.8 218.4 L810.9 177.3 L815.7 200.0 L818.9 205.4 L824.3 259.5 L831.2 191.4 L836.2 185.5 L839.0 189.2 L844.4 224.9 L846.6 192.4 L857.2 181.2 L864.3 237.8 L866.9 194.6 L871.9 199.4 L874.5 237.8 L876.9 190.3 L894.6 263.8 L900.0 181.2 L907.4 211.9" stroke="#ff0054"/>
</g>
<text class="ax" x="139.3" y="527.0">93</text>
<text class="ax" x="139.3" y="494.0">93.5</text>
<text class="ax" x="139.3" y="461.0">94</text>
<text class="ax" x="139.3" y="429.0">94.5</text>
<text class="ax" x="139.3" y="396.0">95</text>
<text class="ax" x="139.3" y="364.0">95.5</text>
<text class="ax" x="139.3" y="331.0">96</text>
<text class="ax" x="139.3" y="298.0">96.5</text>
<text class="ax" x="139.3" y="266.0">97</text>
<text class="ax" x="139.3" y="233.0">97.5</text>
<text class="ax" x="139.3" y="201.0">98</text>
<text class="ax" x="330.0" y="546.3" text-anchor="middle">16:30</text>
<text class="ax" x="482.0" y="546.3" text-anchor="middle">17:00</text>
<text class="ax" x="634.0" y="546.3" text-anchor="middle">17:30</text>
<text class="ax" x="786.0" y="546.3" text-anchor="middle">18:00</text>
<text x="525.2" y="376.5" text-anchor="middle" font-family="DejaVu Sans, Liberation Sans, sans-serif" font-weight="200" font-size="51.4" textLength="133.0" lengthAdjust="spacingAndGlyphs" fill="#22adf6" stroke="#22adf6" stroke-width=".9">96.62</text>
<text x="1071.5" y="202.0" text-anchor="middle" font-family="DejaVu Sans, Liberation Sans, sans-serif" font-weight="200" font-size="51.4" textLength="133.0" lengthAdjust="spacingAndGlyphs" fill="#22adf6" stroke="#22adf6" stroke-width=".9">44.68</text>
<text x="1071.5" y="290.0" text-anchor="middle" font-family="DejaVu Sans, Liberation Sans, sans-serif" font-weight="200" font-size="51.4" textLength="209.0" lengthAdjust="spacingAndGlyphs" fill="#22adf6" stroke="#22adf6" stroke-width=".9">2560000</text>
<text x="1071.5" y="377.0" text-anchor="middle" font-family="DejaVu Sans, Liberation Sans, sans-serif" font-weight="200" font-size="51.4" textLength="89.0" lengthAdjust="spacingAndGlyphs" fill="#22adf6" stroke="#22adf6" stroke-width=".9">209</text>
<path d="M999.2 463.5 H1188.1 M1012.5 429.0 V529.9 M1107.5 429.0 V529.9 M999.5 429.0 V529.9" stroke="#3a3a49" stroke-width="1" fill="none"/>
<path d="M963.5 429 V550" stroke="#3a3a49" stroke-width="1"/>
<path d="M999.2 517.1 L1000.0 519.1 L1000.8 517.2 L1001.6 521.9 L1002.3 521.8 L1003.1 517.2 L1003.9 521.7 L1004.7 521.8 L1005.5 521.5 L1006.3 517.1 L1007.1 521.5 L1007.9 521.4 L1008.6 521.2 L1009.4 521.8 L1010.2 521.9 L1011.0 521.9 L1011.8 521.7 L1012.6 521.6 L1013.4 521.1 L1014.2 518.8 L1014.9 521.7 L1015.7 521.7 L1016.5 521.9 L1017.3 521.6 L1018.1 517.3 L1018.9 521.8 L1019.7 517.1 L1020.5 521.6 L1021.2 521.2 L1022.0 521.6 L1022.8 517.3 L1023.6 521.2 L1024.4 517.0 L1025.2 521.6 L1026.0 521.9 L1026.7 517.3 L1027.5 521.5 L1028.3 521.6 L1029.1 517.0 L1029.9 517.2 L1030.7 521.6 L1031.5 521.7 L1032.3 521.8 L1033.0 521.4 L1033.8 521.7 L1034.6 521.8 L1035.4 521.6 L1036.2 521.6 L1037.0 517.2 L1037.8 521.7 L1038.6 517.1 L1039.3 521.7 L1040.1 521.8 L1040.9 517.3 L1041.7 517.1 L1042.5 517.3 L1043.3 521.1 L1044.1 521.3 L1044.9 518.9 L1045.6 517.1 L1046.4 517.4 L1047.2 519.2 L1048.0 519.1 L1048.8 517.1 L1049.6 518.9 L1050.4 517.3 L1051.1 521.6 L1051.9 521.4 L1052.7 521.8 L1053.5 521.7 L1054.3 517.1 L1055.1 521.7 L1055.9 519.1 L1056.7 517.3 L1057.4 517.4 L1058.2 521.8 L1059.0 519.2 L1059.8 521.7 L1060.6 519.1 L1061.4 521.5 L1062.2 517.1 L1063.0 521.9 L1063.7 517.0 L1064.5 517.3 L1065.3 521.6 L1066.1 521.7 L1066.9 521.8 L1067.7 518.9 L1068.5 521.6 L1069.3 521.6 L1070.0 517.1 L1070.8 521.8 L1071.6 519.0 L1072.4 521.7 L1073.2 521.7 L1074.0 521.8 L1074.8 517.2 L1075.5 517.1 L1076.3 517.2 L1077.1 521.7 L1077.9 519.2 L1078.7 521.6 L1079.5 521.7 L1080.3 521.6 L1081.1 521.5 L1081.8 519.0 L1082.6 521.6 L1083.4 517.2 L1084.2 521.7 L1085.0 521.6 L1085.8 521.6 L1086.6 517.2 L1087.4 519.2 L1088.1 521.6 L1088.9 521.6 L1089.7 521.5 L1090.5 521.8 L1091.3 517.0 L1092.1 517.4 L1092.9 518.8 L1093.7 521.3 L1094.4 519.1 L1095.2 517.3 L1096.0 517.3 L1096.8 521.7 L1097.6 521.4 L1098.4 519.0 L1099.2 519.2 L1099.9 521.8 L1100.7 517.2 L1101.5 517.3 L1102.3 521.6 L1103.1 521.8 L1103.9 521.7 L1104.7 521.8 L1105.5 521.5 L1106.2 517.4 L1107.0 519.2 L1107.8 518.9 L1108.6 517.3 L1109.4 521.5 L1110.2 521.8 L1111.0 521.7 L1111.8 519.0 L1112.5 521.6 L1113.3 517.1 L1114.1 518.8 L1114.9 519.0 L1115.7 519.2 L1116.5 517.1 L1117.3 521.6 L1118.0 521.4 L1118.8 521.2 L1119.6 518.9 L1120.4 521.5 L1121.2 519.1 L1122.0 517.1 L1122.8 517.1 L1123.6 521.3 L1124.3 517.1 L1125.1 517.1 L1125.9 521.9 L1126.7 517.1 L1127.5 517.3 L1128.3 521.7 L1129.1 521.7 L1129.9 519.1 L1130.6 521.4 L1131.4 521.7 L1132.2 517.1 L1133.0 521.5 L1133.8 521.7 L1134.6 517.1 L1135.4 517.4 L1136.2 517.1 L1136.9 517.1 L1137.7 521.8 L1138.5 521.1 L1139.3 521.8 L1140.1 521.1 L1140.9 517.1 L1141.7 521.4 L1142.4 519.0 L1143.2 521.1 L1144.0 519.0 L1144.8 521.6 L1145.6 521.7 L1146.4 519.0 L1147.2 518.9 L1148.0 517.0 L1148.7 519.1 L1149.5 521.9 L1150.3 519.1 L1151.1 521.5 L1151.9 521.1 L1152.7 521.9 L1153.5 517.4 L1154.3 519.2 L1155.0 517.2 L1155.8 518.8 L1156.6 517.0 L1157.4 521.2 L1158.2 521.9 L1159.0 521.7 L1159.8 517.1 L1160.6 521.5 L1161.3 521.8 L1162.1 521.7 L1162.9 521.7 L1163.7 517.1 L1164.5 521.6 L1165.3 517.4 L1166.1 517.1 L1166.8 521.6 L1167.6 517.1 L1168.4 521.8 L1169.2 521.3 L1170.0 521.7 L1170.8 521.6 L1171.6 521.9 L1172.4 521.6 L1173.1 521.1 L1173.9 521.8 L1174.7 517.1 L1175.5 519.2 L1176.3 519.0 L1177.1 521.7 L1177.9 521.6 L1178.7 521.8 L1179.4 521.7 L1180.2 518.8 L1181.0 521.8 L1181.8 517.4 L1182.6 517.2 L1183.4 521.6 L1184.2 521.7 L1185.0 521.5 L1185.7 517.3 L1186.5 521.9 L1187.3 521.2 L1188.1 517.2 L1188.1 529.9 L999.2 529.9 Z" fill="#00C9FF" fill-opacity=".15"/>
<path d="M999.2 436.8 L1000.0 441.0 L1000.8 436.6 L1001.6 446.1 L1002.3 445.9 L1003.1 437.0 L1003.9 446.2 L1004.7 446.3 L1005.5 446.2 L1006.3 437.1 L1007.1 446.4 L1007.9 444.9 L1008.6 444.8 L1009.4 446.0 L1010.2 445.7 L1011.0 446.4 L1011.8 445.6 L1012.6 445.8 L1013.4 445.2 L1014.2 440.8 L1014.9 446.3 L1015.7 445.7 L1016.5 445.6 L1017.3 446.4 L1018.1 436.6 L1018.9 445.9 L1019.7 436.6 L1020.5 445.7 L1021.2 445.5 L1022.0 446.3 L1022.8 436.7 L1023.6 445.0 L1024.4 437.4 L1025.2 446.0 L1026.0 445.9 L1026.7 436.7 L1027.5 445.7 L1028.3 446.2 L1029.1 436.7 L1029.9 437.0 L1030.7 446.2 L1031.5 446.0 L1032.3 446.4 L1033.0 445.1 L1033.8 446.4 L1034.6 446.1 L1035.4 445.7 L1036.2 446.3 L1037.0 437.3 L1037.8 446.4 L1038.6 437.2 L1039.3 445.8 L1040.1 445.7 L1040.9 437.4 L1041.7 437.3 L1042.5 436.8 L1043.3 445.1 L1044.1 445.3 L1044.9 440.2 L1045.6 437.2 L1046.4 436.8 L1047.2 440.4 L1048.0 440.3 L1048.8 437.0 L1049.6 440.4 L1050.4 437.1 L1051.1 445.8 L1051.9 445.0 L1052.7 446.3 L1053.5 446.4 L1054.3 437.4 L1055.1 446.3 L1055.9 440.3 L1056.7 436.7 L1057.4 437.0 L1058.2 446.1 L1059.0 440.4 L1059.8 445.7 L1060.6 440.3 L1061.4 446.1 L1062.2 437.4 L1063.0 445.7 L1063.7 436.8 L1064.5 436.9 L1065.3 446.1 L1066.1 445.6 L1066.9 446.3 L1067.7 440.9 L1068.5 446.0 L1069.3 446.0 L1070.0 436.8 L1070.8 445.9 L1071.6 440.6 L1072.4 446.1 L1073.2 446.4 L1074.0 446.3 L1074.8 436.7 L1075.5 437.0 L1076.3 436.9 L1077.1 446.0 L1077.9 440.5 L1078.7 446.1 L1079.5 446.0 L1080.3 446.4 L1081.1 445.7 L1081.8 440.7 L1082.6 445.6 L1083.4 436.6 L1084.2 445.8 L1085.0 445.8 L1085.8 446.2 L1086.6 437.1 L1087.4 440.9 L1088.1 445.6 L1088.9 446.0 L1089.7 446.2 L1090.5 445.9 L1091.3 436.7 L1092.1 437.0 L1092.9 440.6 L1093.7 445.3 L1094.4 440.8 L1095.2 437.3 L1096.0 436.9 L1096.8 446.3 L1097.6 444.8 L1098.4 440.8 L1099.2 440.8 L1099.9 445.7 L1100.7 437.4 L1101.5 437.1 L1102.3 446.2 L1103.1 446.2 L1103.9 445.9 L1104.7 446.4 L1105.5 445.7 L1106.2 437.1 L1107.0 440.9 L1107.8 440.9 L1108.6 436.7 L1109.4 446.1 L1110.2 446.1 L1111.0 445.6 L1111.8 440.5 L1112.5 445.9 L1113.3 437.0 L1114.1 440.5 L1114.9 440.4 L1115.7 440.6 L1116.5 437.0 L1117.3 446.0 L1118.0 444.9 L1118.8 444.9 L1119.6 440.5 L1120.4 446.1 L1121.2 440.2 L1122.0 437.1 L1122.8 437.0 L1123.6 445.1 L1124.3 436.6 L1125.1 437.1 L1125.9 445.7 L1126.7 437.3 L1127.5 436.9 L1128.3 445.9 L1129.1 446.2 L1129.9 440.9 L1130.6 445.2 L1131.4 446.0 L1132.2 436.8 L1133.0 445.7 L1133.8 445.8 L1134.6 437.1 L1135.4 437.0 L1136.2 437.3 L1136.9 436.7 L1137.7 445.7 L1138.5 445.4 L1139.3 445.7 L1140.1 444.9 L1140.9 437.3 L1141.7 445.0 L1142.4 440.2 L1143.2 445.5 L1144.0 440.5 L1144.8 446.2 L1145.6 446.2 L1146.4 440.3 L1147.2 440.5 L1148.0 436.9 L1148.7 440.6 L1149.5 446.1 L1150.3 440.7 L1151.1 445.6 L1151.9 445.2 L1152.7 446.0 L1153.5 437.1 L1154.3 440.3 L1155.0 436.7 L1155.8 440.4 L1156.6 437.2 L1157.4 445.0 L1158.2 446.3 L1159.0 445.7 L1159.8 436.8 L1160.6 446.2 L1161.3 446.1 L1162.1 446.1 L1162.9 446.0 L1163.7 437.0 L1164.5 446.3 L1165.3 437.3 L1166.1 436.7 L1166.8 446.2 L1167.6 436.9 L1168.4 446.0 L1169.2 445.0 L1170.0 445.8 L1170.8 445.6 L1171.6 446.3 L1172.4 445.9 L1173.1 445.3 L1173.9 446.1 L1174.7 436.6 L1175.5 440.7 L1176.3 440.2 L1177.1 446.2 L1177.9 445.9 L1178.7 445.8 L1179.4 445.6 L1180.2 440.6 L1181.0 446.4 L1181.8 437.3 L1182.6 436.6 L1183.4 445.9 L1184.2 445.7 L1185.0 446.2 L1185.7 437.1 L1186.5 446.0 L1187.3 445.0 L1188.1 437.3 L1188.1 529.9 L999.2 529.9 Z" fill="#9394FF" fill-opacity=".15"/>
<path d="M999.2 436.8 L1000.0 441.0 L1000.8 436.6 L1001.6 446.1 L1002.3 445.9 L1003.1 437.0 L1003.9 446.2 L1004.7 446.3 L1005.5 446.2 L1006.3 437.1 L1007.1 446.4 L1007.9 444.9 L1008.6 444.8 L1009.4 446.0 L1010.2 445.7 L1011.0 446.4 L1011.8 445.6 L1012.6 445.8 L1013.4 445.2 L1014.2 440.8 L1014.9 446.3 L1015.7 445.7 L1016.5 445.6 L1017.3 446.4 L1018.1 436.6 L1018.9 445.9 L1019.7 436.6 L1020.5 445.7 L1021.2 445.5 L1022.0 446.3 L1022.8 436.7 L1023.6 445.0 L1024.4 437.4 L1025.2 446.0 L1026.0 445.9 L1026.7 436.7 L1027.5 445.7 L1028.3 446.2 L1029.1 436.7 L1029.9 437.0 L1030.7 446.2 L1031.5 446.0 L1032.3 446.4 L1033.0 445.1 L1033.8 446.4 L1034.6 446.1 L1035.4 445.7 L1036.2 446.3 L1037.0 437.3 L1037.8 446.4 L1038.6 437.2 L1039.3 445.8 L1040.1 445.7 L1040.9 437.4 L1041.7 437.3 L1042.5 436.8 L1043.3 445.1 L1044.1 445.3 L1044.9 440.2 L1045.6 437.2 L1046.4 436.8 L1047.2 440.4 L1048.0 440.3 L1048.8 437.0 L1049.6 440.4 L1050.4 437.1 L1051.1 445.8 L1051.9 445.0 L1052.7 446.3 L1053.5 446.4 L1054.3 437.4 L1055.1 446.3 L1055.9 440.3 L1056.7 436.7 L1057.4 437.0 L1058.2 446.1 L1059.0 440.4 L1059.8 445.7 L1060.6 440.3 L1061.4 446.1 L1062.2 437.4 L1063.0 445.7 L1063.7 436.8 L1064.5 436.9 L1065.3 446.1 L1066.1 445.6 L1066.9 446.3 L1067.7 440.9 L1068.5 446.0 L1069.3 446.0 L1070.0 436.8 L1070.8 445.9 L1071.6 440.6 L1072.4 446.1 L1073.2 446.4 L1074.0 446.3 L1074.8 436.7 L1075.5 437.0 L1076.3 436.9 L1077.1 446.0 L1077.9 440.5 L1078.7 446.1 L1079.5 446.0 L1080.3 446.4 L1081.1 445.7 L1081.8 440.7 L1082.6 445.6 L1083.4 436.6 L1084.2 445.8 L1085.0 445.8 L1085.8 446.2 L1086.6 437.1 L1087.4 440.9 L1088.1 445.6 L1088.9 446.0 L1089.7 446.2 L1090.5 445.9 L1091.3 436.7 L1092.1 437.0 L1092.9 440.6 L1093.7 445.3 L1094.4 440.8 L1095.2 437.3 L1096.0 436.9 L1096.8 446.3 L1097.6 444.8 L1098.4 440.8 L1099.2 440.8 L1099.9 445.7 L1100.7 437.4 L1101.5 437.1 L1102.3 446.2 L1103.1 446.2 L1103.9 445.9 L1104.7 446.4 L1105.5 445.7 L1106.2 437.1 L1107.0 440.9 L1107.8 440.9 L1108.6 436.7 L1109.4 446.1 L1110.2 446.1 L1111.0 445.6 L1111.8 440.5 L1112.5 445.9 L1113.3 437.0 L1114.1 440.5 L1114.9 440.4 L1115.7 440.6 L1116.5 437.0 L1117.3 446.0 L1118.0 444.9 L1118.8 444.9 L1119.6 440.5 L1120.4 446.1 L1121.2 440.2 L1122.0 437.1 L1122.8 437.0 L1123.6 445.1 L1124.3 436.6 L1125.1 437.1 L1125.9 445.7 L1126.7 437.3 L1127.5 436.9 L1128.3 445.9 L1129.1 446.2 L1129.9 440.9 L1130.6 445.2 L1131.4 446.0 L1132.2 436.8 L1133.0 445.7 L1133.8 445.8 L1134.6 437.1 L1135.4 437.0 L1136.2 437.3 L1136.9 436.7 L1137.7 445.7 L1138.5 445.4 L1139.3 445.7 L1140.1 444.9 L1140.9 437.3 L1141.7 445.0 L1142.4 440.2 L1143.2 445.5 L1144.0 440.5 L1144.8 446.2 L1145.6 446.2 L1146.4 440.3 L1147.2 440.5 L1148.0 436.9 L1148.7 440.6 L1149.5 446.1 L1150.3 440.7 L1151.1 445.6 L1151.9 445.2 L1152.7 446.0 L1153.5 437.1 L1154.3 440.3 L1155.0 436.7 L1155.8 440.4 L1156.6 437.2 L1157.4 445.0 L1158.2 446.3 L1159.0 445.7 L1159.8 436.8 L1160.6 446.2 L1161.3 446.1 L1162.1 446.1 L1162.9 446.0 L1163.7 437.0 L1164.5 446.3 L1165.3 437.3 L1166.1 436.7 L1166.8 446.2 L1167.6 436.9 L1168.4 446.0 L1169.2 445.0 L1170.0 445.8 L1170.8 445.6 L1171.6 446.3 L1172.4 445.9 L1173.1 445.3 L1173.9 446.1 L1174.7 436.6 L1175.5 440.7 L1176.3 440.2 L1177.1 446.2 L1177.9 445.9 L1178.7 445.8 L1179.4 445.6 L1180.2 440.6 L1181.0 446.4 L1181.8 437.3 L1182.6 436.6 L1183.4 445.9 L1184.2 445.7 L1185.0 446.2 L1185.7 437.1 L1186.5 446.0 L1187.3 445.0 L1188.1 437.3" fill="none" stroke="#9394FF" stroke-width="1.1" stroke-linejoin="round"/>
<path d="M999.2 517.1 L1000.0 519.1 L1000.8 517.2 L1001.6 521.9 L1002.3 521.8 L1003.1 517.2 L1003.9 521.7 L1004.7 521.8 L1005.5 521.5 L1006.3 517.1 L1007.1 521.5 L1007.9 521.4 L1008.6 521.2 L1009.4 521.8 L1010.2 521.9 L1011.0 521.9 L1011.8 521.7 L1012.6 521.6 L1013.4 521.1 L1014.2 518.8 L1014.9 521.7 L1015.7 521.7 L1016.5 521.9 L1017.3 521.6 L1018.1 517.3 L1018.9 521.8 L1019.7 517.1 L1020.5 521.6 L1021.2 521.2 L1022.0 521.6 L1022.8 517.3 L1023.6 521.2 L1024.4 517.0 L1025.2 521.6 L1026.0 521.9 L1026.7 517.3 L1027.5 521.5 L1028.3 521.6 L1029.1 517.0 L1029.9 517.2 L1030.7 521.6 L1031.5 521.7 L1032.3 521.8 L1033.0 521.4 L1033.8 521.7 L1034.6 521.8 L1035.4 521.6 L1036.2 521.6 L1037.0 517.2 L1037.8 521.7 L1038.6 517.1 L1039.3 521.7 L1040.1 521.8 L1040.9 517.3 L1041.7 517.1 L1042.5 517.3 L1043.3 521.1 L1044.1 521.3 L1044.9 518.9 L1045.6 517.1 L1046.4 517.4 L1047.2 519.2 L1048.0 519.1 L1048.8 517.1 L1049.6 518.9 L1050.4 517.3 L1051.1 521.6 L1051.9 521.4 L1052.7 521.8 L1053.5 521.7 L1054.3 517.1 L1055.1 521.7 L1055.9 519.1 L1056.7 517.3 L1057.4 517.4 L1058.2 521.8 L1059.0 519.2 L1059.8 521.7 L1060.6 519.1 L1061.4 521.5 L1062.2 517.1 L1063.0 521.9 L1063.7 517.0 L1064.5 517.3 L1065.3 521.6 L1066.1 521.7 L1066.9 521.8 L1067.7 518.9 L1068.5 521.6 L1069.3 521.6 L1070.0 517.1 L1070.8 521.8 L1071.6 519.0 L1072.4 521.7 L1073.2 521.7 L1074.0 521.8 L1074.8 517.2 L1075.5 517.1 L1076.3 517.2 L1077.1 521.7 L1077.9 519.2 L1078.7 521.6 L1079.5 521.7 L1080.3 521.6 L1081.1 521.5 L1081.8 519.0 L1082.6 521.6 L1083.4 517.2 L1084.2 521.7 L1085.0 521.6 L1085.8 521.6 L1086.6 517.2 L1087.4 519.2 L1088.1 521.6 L1088.9 521.6 L1089.7 521.5 L1090.5 521.8 L1091.3 517.0 L1092.1 517.4 L1092.9 518.8 L1093.7 521.3 L1094.4 519.1 L1095.2 517.3 L1096.0 517.3 L1096.8 521.7 L1097.6 521.4 L1098.4 519.0 L1099.2 519.2 L1099.9 521.8 L1100.7 517.2 L1101.5 517.3 L1102.3 521.6 L1103.1 521.8 L1103.9 521.7 L1104.7 521.8 L1105.5 521.5 L1106.2 517.4 L1107.0 519.2 L1107.8 518.9 L1108.6 517.3 L1109.4 521.5 L1110.2 521.8 L1111.0 521.7 L1111.8 519.0 L1112.5 521.6 L1113.3 517.1 L1114.1 518.8 L1114.9 519.0 L1115.7 519.2 L1116.5 517.1 L1117.3 521.6 L1118.0 521.4 L1118.8 521.2 L1119.6 518.9 L1120.4 521.5 L1121.2 519.1 L1122.0 517.1 L1122.8 517.1 L1123.6 521.3 L1124.3 517.1 L1125.1 517.1 L1125.9 521.9 L1126.7 517.1 L1127.5 517.3 L1128.3 521.7 L1129.1 521.7 L1129.9 519.1 L1130.6 521.4 L1131.4 521.7 L1132.2 517.1 L1133.0 521.5 L1133.8 521.7 L1134.6 517.1 L1135.4 517.4 L1136.2 517.1 L1136.9 517.1 L1137.7 521.8 L1138.5 521.1 L1139.3 521.8 L1140.1 521.1 L1140.9 517.1 L1141.7 521.4 L1142.4 519.0 L1143.2 521.1 L1144.0 519.0 L1144.8 521.6 L1145.6 521.7 L1146.4 519.0 L1147.2 518.9 L1148.0 517.0 L1148.7 519.1 L1149.5 521.9 L1150.3 519.1 L1151.1 521.5 L1151.9 521.1 L1152.7 521.9 L1153.5 517.4 L1154.3 519.2 L1155.0 517.2 L1155.8 518.8 L1156.6 517.0 L1157.4 521.2 L1158.2 521.9 L1159.0 521.7 L1159.8 517.1 L1160.6 521.5 L1161.3 521.8 L1162.1 521.7 L1162.9 521.7 L1163.7 517.1 L1164.5 521.6 L1165.3 517.4 L1166.1 517.1 L1166.8 521.6 L1167.6 517.1 L1168.4 521.8 L1169.2 521.3 L1170.0 521.7 L1170.8 521.6 L1171.6 521.9 L1172.4 521.6 L1173.1 521.1 L1173.9 521.8 L1174.7 517.1 L1175.5 519.2 L1176.3 519.0 L1177.1 521.7 L1177.9 521.6 L1178.7 521.8 L1179.4 521.7 L1180.2 518.8 L1181.0 521.8 L1181.8 517.4 L1182.6 517.2 L1183.4 521.6 L1184.2 521.7 L1185.0 521.5 L1185.7 517.3 L1186.5 521.9 L1187.3 521.2 L1188.1 517.2" fill="none" stroke="#00C9FF" stroke-width="1.1" stroke-linejoin="round"/>
<text class="ax" x="958.9" y="469.8">50B</text>
<text class="ax" x="1012.2" y="546.3" text-anchor="middle">17:30</text><text class="ax" x="1107.4" y="546.3" text-anchor="middle">18:00</text>
<text x="0" y="0" transform="translate(956.3 490.4) rotate(-90)" text-anchor="middle" font-size="12" fill="#8e91a1">diskio.read_bytes</text>
<path d="M180.5 855.5 H823.5 M180.5 807.5 H823.5 M180.5 758.5 H823.5 M180.5 709.5 H823.5 M180.5 660.5 H823.5 M180.5 611.5 H823.5 M287.5 604.0 V880.0 M428.5 604.0 V880.0 M569.5 604.0 V880.0 M712.5 604.0 V880.0 M180.5 604.0 V880.0" stroke="#3a3a49" stroke-width="1" fill="none"/>
<path d="M180.5 855.5 H823.5" stroke="#46465a" stroke-width="1"/>
<clipPath id="wc"><rect x="179.5" y="604.0" width="645.0" height="276.0"/></clipPath>
<g clip-path="url(#wc)">
<path d="M180.3 611.1 L181.0 633.4 L181.7 655.7 L182.3 674.5 L182.9 687.2 L183.6 691.6 L184.2 687.7 L184.9 676.7 L185.5 660.2 L186.2 640.7 L186.8 621.2 L187.5 604.7 L188.1 593.7 L188.8 589.8 L189.5 595.4 L190.1 611.3 L190.8 635.0 L191.4 663.0 L192.1 691.1 L192.7 714.8 L193.4 730.7 L194.0 736.2 L194.7 730.4 L195.3 713.7 L196.0 688.8 L196.6 659.4 L197.3 630.0 L197.9 605.0 L198.6 588.4 L199.2 582.5 L199.9 587.0 L200.5 599.6 L201.2 618.6 L201.9 641.0 L202.5 663.3 L203.2 682.3 L203.8 694.9 L204.5 699.4 L205.1 695.2 L205.8 683.4 L206.4 665.6 L207.1 644.6 L207.7 623.7 L208.4 605.9 L209.0 594.0 L209.7 589.8 L210.3 595.1 L211.0 610.0 L211.6 632.3 L212.3 658.6 L213.0 685.0 L213.6 707.3 L214.3 722.2 L214.9 727.5 L215.6 721.9 L216.2 706.2 L216.9 682.7 L217.5 655.0 L218.2 627.3 L218.8 603.7 L219.5 588.0 L220.1 582.5 L220.8 587.5 L221.4 601.7 L222.1 623.0 L222.7 648.2 L223.4 673.3 L224.0 694.6 L224.7 708.8 L225.4 713.8 L226.0 709.6 L226.7 697.8 L227.3 680.1 L228.0 659.1 L228.6 638.2 L229.3 620.5 L229.9 608.6 L230.6 604.5 L231.2 608.6 L231.9 620.4 L232.5 638.0 L233.2 658.8 L233.8 679.5 L234.5 697.2 L235.1 708.9 L235.8 713.1 L236.4 708.1 L237.1 693.9 L237.7 672.8 L238.4 647.8 L239.0 622.8 L239.7 601.6 L240.3 587.5 L241.0 582.5 L241.7 587.8 L242.3 603.0 L243.0 625.7 L243.6 652.4 L244.3 679.2 L244.9 701.9 L245.6 717.0 L246.2 722.3 L246.9 718.2 L247.5 706.3 L248.2 688.4 L248.8 667.4 L249.5 646.4 L250.1 628.6 L250.8 616.7 L251.4 612.5 L252.1 615.8 L252.8 625.0 L253.4 638.7 L254.1 655.0 L254.7 671.2 L255.4 685.0 L256.0 694.2 L256.7 697.4 L257.3 693.1 L258.0 680.6 L258.6 662.0 L259.3 640.0 L259.9 618.0 L260.6 599.4 L261.2 586.9 L261.9 582.5 L262.5 588.4 L263.2 605.0 L263.8 630.0 L264.5 659.4 L265.2 688.8 L265.8 713.7 L266.5 730.4 L267.1 736.2 L267.8 731.7 L268.4 718.9 L269.1 699.8 L269.7 677.2 L270.4 654.6 L271.0 635.4 L271.7 622.6 L272.3 618.1 L273.0 620.7 L273.6 628.1 L274.3 639.2 L274.9 652.3 L275.6 665.4 L276.2 676.5 L276.9 683.9 L277.6 686.5 L278.2 682.5 L278.9 671.2 L279.5 654.4 L280.2 634.5 L280.8 614.6 L281.5 597.7 L282.1 586.5 L282.8 582.5 L283.4 589.0 L284.1 607.4 L284.7 635.0 L285.4 667.6 L286.0 700.1 L286.7 727.7 L287.3 746.1 L288.0 752.6 L288.6 747.4 L289.3 732.7 L289.9 710.7 L290.6 684.8 L291.2 658.8 L291.9 636.8 L292.6 622.1 L293.2 616.9 L293.9 619.2 L294.5 625.8 L295.2 635.7 L295.8 647.3 L296.5 658.9 L297.1 668.8 L297.8 675.4 L298.4 677.7 L299.1 674.1 L299.7 663.7 L300.4 648.3 L301.0 630.1 L301.7 611.9 L302.3 596.5 L303.0 586.1 L303.6 582.5 L304.3 589.7 L304.9 610.3 L305.6 641.0 L306.3 677.3 L306.9 713.6 L307.6 744.3 L308.2 764.9 L308.9 772.1 L309.5 765.8 L310.2 747.9 L310.8 721.1 L311.5 689.5 L312.1 657.9 L312.8 631.1 L313.4 613.2 L314.1 606.9 L314.7 609.4 L315.4 616.6 L316.0 627.3 L316.7 639.9 L317.4 652.5 L318.0 663.2 L318.7 670.3 L319.3 672.8 L320.0 669.4 L320.6 659.6 L321.3 644.9 L321.9 627.7 L322.6 610.4 L323.2 595.7 L323.9 586.0 L324.5 582.5 L325.2 590.5 L325.8 613.1 L326.5 647.1 L327.1 687.1 L327.8 727.1 L328.4 761.0 L329.1 783.7 L329.8 791.6 L330.4 783.9 L331.1 762.1 L331.7 729.3 L332.4 690.7 L333.0 652.1 L333.7 619.4 L334.3 597.5 L335.0 589.8 L335.6 593.1 L336.3 602.3 L336.9 616.0 L337.6 632.3 L338.2 648.5 L338.9 662.3 L339.5 671.5 L340.2 674.8 L340.8 671.2 L341.5 661.2 L342.1 646.3 L342.8 628.6 L343.4 611.0 L344.1 596.0 L344.8 586.0 L345.4 582.5 L346.1 590.7 L346.7 614.0 L347.4 648.9 L348.0 690.0 L348.7 731.1 L349.3 766.0 L350.0 789.3 L350.6 797.5 L351.3 789.6 L351.9 767.1 L352.6 733.4 L353.2 693.7 L353.9 653.9 L354.5 620.2 L355.2 597.7 L355.8 589.8 L356.5 593.1 L357.1 602.6 L357.8 616.7 L358.5 633.3 L359.1 649.9 L359.8 664.0 L360.4 673.4 L361.1 676.7 L361.7 673.1 L362.4 662.9 L363.0 647.6 L363.7 629.6 L364.3 611.6 L365.0 596.3 L365.6 586.1 L366.3 582.5 L366.9 591.0 L367.6 615.1 L368.2 651.3 L368.9 693.9 L369.6 736.5 L370.2 772.7 L370.9 796.8 L371.5 805.3 L372.2 797.1 L372.8 773.7 L373.5 738.8 L374.1 697.6 L374.8 656.3 L375.4 621.4 L376.1 598.0 L376.7 589.8 L377.4 593.0 L378.0 601.9 L378.7 615.2 L379.3 631.0 L380.0 646.7 L380.6 660.0 L381.3 668.9 L382.0 672.1 L382.6 668.7 L383.3 659.0 L383.9 644.4 L384.6 627.3 L385.2 610.2 L385.9 595.6 L386.5 585.9 L387.2 582.5 L387.8 590.8 L388.5 614.3 L389.1 649.5 L389.8 691.0 L390.4 732.5 L391.1 767.7 L391.7 791.2 L392.4 799.4 L393.0 791.5 L393.7 768.7 L394.3 734.7 L395.0 694.6 L395.6 654.5 L396.3 620.5 L396.9 597.8 L397.6 589.8 L398.3 593.1 L398.9 602.4 L399.6 616.4 L400.2 632.8 L400.9 649.2 L401.5 663.1 L402.2 672.5 L402.8 675.7 L403.5 672.2 L404.1 662.1 L404.8 647.0 L405.4 629.1 L406.1 611.3 L406.7 596.2 L407.4 586.1 L408.0 582.5 L408.7 590.3 L409.3 612.3 L410.0 645.3 L410.7 684.1 L411.3 723.0 L412.0 756.0 L412.6 778.0 L413.3 785.8 L413.9 778.3 L414.6 757.1 L415.2 725.3 L415.9 687.8 L416.5 650.3 L417.2 618.5 L417.8 597.3 L418.5 589.8 L419.1 593.7 L419.8 604.6 L420.4 620.9 L421.1 640.1 L421.8 659.3 L422.4 675.6 L423.1 686.5 L423.7 690.4 L424.4 686.3 L425.0 674.6 L425.7 657.1 L426.3 636.4 L427.0 615.8 L427.6 598.3 L428.3 586.6 L428.9 582.5 L429.6 589.8 L430.2 610.5 L430.9 641.4 L431.5 677.9 L432.2 714.4 L432.8 745.4 L433.5 766.1 L434.2 773.3 L434.8 766.3 L435.5 746.5 L436.1 716.7 L436.8 681.6 L437.4 646.5 L438.1 616.7 L438.7 596.8 L439.4 589.8 L440.0 594.3 L440.7 606.8 L441.3 625.7 L442.0 647.9 L442.6 670.1 L443.3 689.0 L443.9 701.6 L444.6 706.0 L445.2 701.3 L445.9 687.9 L446.6 667.9 L447.2 644.3 L447.9 620.6 L448.5 600.6 L449.2 587.2 L449.8 582.5 L450.5 589.1 L451.1 607.7 L451.8 635.6 L452.4 668.5 L453.1 701.4 L453.7 729.3 L454.4 748.0 L455.0 754.5 L455.7 748.3 L456.3 730.4 L457.0 703.7 L457.6 672.2 L458.3 640.7 L458.9 614.0 L459.6 596.1 L460.2 589.8 L460.9 594.3 L461.5 607.1 L462.2 626.3 L462.9 648.9 L463.5 671.5 L464.2 690.6 L464.8 703.4 L465.5 707.9 L466.1 703.2 L466.8 689.6 L467.4 669.2 L468.1 645.2 L468.7 621.2 L469.4 600.9 L470.0 587.3 L470.7 582.5 L471.3 588.6 L472.0 606.0 L472.6 632.0 L473.3 662.7 L474.0 693.3 L474.6 719.4 L475.3 736.7 L475.9 742.8 L476.6 737.0 L477.2 720.4 L477.9 695.6 L478.5 666.3 L479.2 637.1 L479.8 612.2 L480.5 595.7 L481.1 589.8 L481.8 594.9 L482.4 609.1 L483.1 630.5 L483.7 655.7 L484.4 680.9 L485.1 702.3 L485.7 716.6 L486.4 721.6 L487.0 716.3 L487.7 701.2 L488.3 678.7 L489.0 652.1 L489.6 625.4 L490.3 602.9 L490.9 587.8 L491.6 582.5 L492.2 586.0 L492.9 595.7 L493.5 610.4 L494.2 627.7 L494.8 644.9 L495.5 659.6 L496.1 669.4 L496.8 672.8 L497.4 669.6 L498.1 660.7 L498.7 647.2 L499.4 631.3 L500.0 615.4 L500.7 602.0 L501.3 593.0 L502.0 589.8 L502.7 595.6 L503.3 612.0 L504.0 636.5 L504.6 665.5 L505.3 694.4 L505.9 719.0 L506.6 735.4 L507.2 741.1 L507.9 735.1 L508.5 717.9 L509.2 692.2 L509.8 661.8 L510.5 631.5 L511.1 605.7 L511.8 588.6 L512.4 582.5 L513.1 587.1 L513.8 600.0 L514.4 619.4 L515.1 642.3 L515.7 665.2 L516.4 684.6 L517.0 697.5 L517.7 702.1 L518.3 697.8 L519.0 685.6 L519.6 667.4 L520.3 646.0 L520.9 624.5 L521.6 606.3 L522.2 594.1 L522.9 589.8 L523.5 596.3 L524.2 614.8 L524.8 642.5 L525.5 675.1 L526.2 707.8 L526.8 735.4 L527.5 753.9 L528.1 760.4 L528.8 753.6 L529.4 734.3 L530.1 705.5 L530.7 671.5 L531.4 637.4 L532.0 608.6 L532.7 589.3 L533.3 582.5 L534.0 586.6 L534.6 598.3 L535.3 615.8 L535.9 636.4 L536.6 657.1 L537.2 674.6 L537.9 686.3 L538.6 690.4 L539.2 686.5 L539.9 675.6 L540.5 659.3 L541.2 640.1 L541.8 620.9 L542.5 604.6 L543.1 593.7 L543.8 589.8 L544.4 596.7 L545.1 616.2 L545.7 645.5 L546.4 680.0 L547.0 714.5 L547.7 743.7 L548.3 763.3 L549.0 770.2 L549.6 763.0 L550.3 742.7 L551.0 712.2 L551.6 676.3 L552.2 640.4 L552.9 610.0 L553.6 589.7 L554.2 582.5 L554.9 586.2 L555.5 596.6 L556.2 612.2 L556.8 630.6 L557.5 649.0 L558.1 664.6 L558.8 675.0 L559.4 678.7 L560.1 675.3 L560.7 665.6 L561.4 651.2 L562.0 634.2 L562.7 617.3 L563.3 602.8 L564.0 593.2 L564.6 589.8 L565.3 597.3 L566.0 618.5 L566.6 650.3 L567.3 687.8 L567.9 725.3 L568.6 757.1 L569.2 778.3 L569.9 785.8 L570.5 778.0 L571.2 756.0 L571.8 723.0 L572.5 684.1 L573.1 645.3 L573.8 612.3 L574.4 590.3 L575.1 582.5 L575.7 586.1 L576.4 596.2 L577.0 611.3 L577.7 629.1 L578.4 647.0 L579.0 662.1 L579.7 672.2 L580.3 675.7 L581.0 672.5 L581.6 663.1 L582.3 649.2 L582.9 632.8 L583.6 616.4 L584.2 602.4 L584.9 593.1 L585.5 589.8 L586.2 597.3 L586.8 618.4 L587.5 650.1 L588.1 687.4 L588.8 724.8 L589.5 756.5 L590.1 777.6 L590.8 785.0 L591.4 777.3 L592.1 755.4 L592.7 722.5 L593.4 683.8 L594.0 645.0 L594.7 612.2 L595.3 590.2 L596.0 582.5 L596.6 585.9 L597.3 595.6 L597.9 610.2 L598.6 627.3 L599.2 644.4 L599.9 659.0 L600.5 668.7 L601.2 672.1 L601.8 668.9 L602.5 660.0 L603.1 646.7 L603.8 631.0 L604.4 615.2 L605.1 601.9 L605.8 593.0 L606.4 589.8 L607.1 597.2 L607.7 618.2 L608.4 649.7 L609.0 686.8 L609.7 723.9 L610.3 755.4 L611.0 776.4 L611.6 783.8 L612.3 776.2 L612.9 754.3 L613.6 721.7 L614.2 683.2 L614.9 644.7 L615.5 612.0 L616.2 590.2 L616.8 582.5 L617.5 585.7 L618.1 594.9 L618.8 608.6 L619.5 624.7 L620.1 640.9 L620.8 654.6 L621.4 663.7 L622.1 666.9 L622.7 664.0 L623.4 655.7 L624.0 643.1 L624.7 628.4 L625.3 613.6 L626.0 601.1 L626.6 592.8 L627.3 589.8 L627.9 596.9 L628.6 617.0 L629.2 647.1 L629.9 682.6 L630.6 718.0 L631.2 748.1 L631.9 768.2 L632.5 775.3 L633.2 767.9 L633.8 747.1 L634.5 715.8 L635.1 678.9 L635.8 642.0 L636.4 610.7 L637.1 589.9 L637.7 582.5 L638.4 586.1 L639.0 596.2 L639.7 611.3 L640.3 629.1 L641.0 647.0 L641.6 662.1 L642.3 672.2 L643.0 675.7 L643.6 672.5 L644.3 663.1 L644.9 649.2 L645.6 632.8 L646.2 616.4 L646.9 602.4 L647.5 593.1 L648.2 589.8 L648.8 596.5 L649.5 615.4 L650.1 643.7 L650.8 677.1 L651.4 710.5 L652.1 738.8 L652.7 757.7 L653.4 764.3 L654.0 757.4 L654.7 737.7 L655.4 708.2 L656.0 673.4 L656.6 638.6 L657.3 609.1 L658.0 589.4 L658.6 582.5 L659.3 586.1 L659.9 596.3 L660.6 611.6 L661.2 629.6 L661.9 647.6 L662.5 662.9 L663.2 673.1 L663.8 676.7 L664.5 673.4 L665.1 664.0 L665.8 649.9 L666.4 633.3 L667.1 616.7 L667.7 602.6 L668.4 593.1 L669.0 589.8 L669.7 596.1 L670.3 614.0 L671.0 640.7 L671.7 672.2 L672.3 703.7 L673.0 730.4 L673.6 748.3 L674.3 754.5 L674.9 748.0 L675.6 729.3 L676.2 701.4 L676.9 668.5 L677.5 635.6 L678.2 607.7 L678.8 589.1 L679.5 582.5 L680.1 586.4 L680.8 597.5 L681.4 614.0 L682.1 633.5 L682.8 653.0 L683.4 669.6 L684.1 680.6 L684.7 684.5 L685.4 680.9 L686.0 670.6 L686.7 655.3 L687.3 637.2 L688.0 619.1 L688.6 603.7 L689.3 593.4 L689.9 589.8 L690.6 595.6 L691.2 612.0 L691.9 636.5 L692.5 665.5 L693.2 694.4 L693.9 719.0 L694.5 735.4 L695.2 741.1 L695.8 735.1 L696.5 717.9 L697.1 692.2 L697.8 661.8 L698.4 631.5 L699.1 605.7 L699.7 588.6 L700.4 582.5 L701.0 586.8 L701.7 599.2 L702.3 617.6 L703.0 639.4 L703.6 661.1 L704.3 679.6 L704.9 691.9 L705.6 696.2 L706.2 692.2 L706.9 680.6 L707.6 663.4 L708.2 643.0 L708.9 622.7 L709.5 605.4 L710.2 593.9 L710.8 589.8 L711.5 594.9 L712.1 609.4 L712.8 631.1 L713.4 656.7 L714.1 682.3 L714.7 704.0 L715.4 718.5 L716.0 723.6 L716.7 718.2 L717.3 702.9 L718.0 680.0 L718.6 653.0 L719.3 626.1 L719.9 603.2 L720.6 587.9 L721.2 582.5 L721.9 586.3 L722.5 596.9 L723.2 612.8 L723.9 631.6 L724.5 650.3 L725.2 666.2 L725.8 676.9 L726.5 680.6 L727.1 677.2 L727.8 667.3 L728.4 652.6 L729.1 635.2 L729.7 617.9 L730.4 603.1 L731.0 593.3 L731.7 589.8 L732.3 594.4 L733.0 607.3 L733.6 626.7 L734.3 649.5 L735.0 672.3 L735.6 691.7 L736.3 704.6 L736.9 709.2 L737.6 704.3 L738.2 690.6 L738.9 670.1 L739.5 645.8 L740.2 621.6 L740.8 601.1 L741.5 587.3 L742.1 582.5 L742.8 586.8 L743.4 599.2 L744.1 617.6 L744.7 639.4 L745.4 661.1 L746.0 679.6 L746.7 691.9 L747.4 696.2 L748.0 692.2 L748.7 680.6 L749.3 663.4 L750.0 643.0 L750.6 622.7 L751.3 605.4 L751.9 593.9 L752.6 589.8 L753.2 593.9 L753.9 605.6 L754.5 623.1 L755.2 643.6 L755.8 664.2 L756.5 681.7 L757.1 693.3 L757.8 697.4 L758.4 693.1 L759.1 680.6 L759.8 662.0 L760.4 640.0 L761.0 618.0 L761.7 599.4 L762.4 586.9 L763.0 582.5 L763.7 587.0 L764.3 599.6 L765.0 618.6 L765.6 641.0 L766.3 663.3 L766.9 682.3 L767.6 694.9 L768.2 699.4 L768.9 695.2 L769.5 683.4 L770.2 665.6 L770.8 644.6 L771.5 623.7 L772.1 605.9 L772.8 594.0 L773.4 589.8 L774.1 594.0 L774.8 605.9 L775.4 623.7 L776.1 644.6 L776.7 665.6 L777.4 683.4 L778.0 695.2 L778.7 699.4 L779.3 694.9 L780.0 682.3 L780.6 663.3 L781.3 641.0 L781.9 618.6 L782.6 599.6 L783.2 587.0 L783.9 582.5 L784.5 587.9 L785.2 603.1 L785.8 625.8 L786.5 652.7 L787.2 679.5 L787.8 702.3 L788.5 717.5 L789.1 722.8 L789.8 717.8 L790.4 703.3 L791.1 681.8 L791.7 656.3 L792.4 630.9 L793.0 609.3 L793.7 594.9 L794.3 589.8 L795.0 593.7 L795.6 604.6 L796.3 620.9 L796.9 640.1 L797.6 659.3 L798.2 675.6 L798.9 686.5 L799.6 690.4 L800.2 686.3 L800.9 674.6 L801.5 657.1 L802.2 636.4 L802.8 615.8 L803.5 598.3 L804.1 586.6 L804.8 582.5 L805.4 588.1 L806.1 604.0 L806.7 627.9 L807.4 656.0 L808.0 684.1 L808.7 707.9 L809.3 723.8 L810.0 729.4 L810.6 724.1 L811.3 709.0 L812.0 686.3 L812.6 659.6 L813.2 632.9 L813.9 610.3 L814.6 595.2 L815.2 589.8 L815.9 593.1 L816.5 602.6 L817.2 616.7 L817.8 633.3 L818.5 649.9 L819.1 664.0 L819.8 673.4 L819.9 754.7 L819.2 769.1 L818.6 781.3 L817.9 789.5 L817.3 792.4 L816.6 790.5 L816.0 785.1 L815.3 777.1 L814.6 767.6 L814.0 758.1 L813.3 750.1 L812.7 744.7 L812.0 742.8 L811.4 745.4 L810.7 752.8 L810.1 763.9 L809.4 777.0 L808.8 790.1 L808.1 801.1 L807.5 808.5 L806.9 811.1 L806.2 807.4 L805.5 796.8 L804.9 780.9 L804.2 762.1 L803.5 743.3 L802.9 727.4 L802.2 716.8 L801.6 713.1 L800.9 716.6 L800.3 726.6 L799.6 741.5 L799.0 759.2 L798.3 776.8 L797.7 791.8 L797.1 801.8 L796.4 805.3 L795.8 802.7 L795.1 795.5 L794.4 784.6 L793.8 771.7 L793.1 758.9 L792.4 748.0 L791.8 740.7 L791.1 738.2 L790.5 740.9 L789.8 748.7 L789.2 760.3 L788.5 774.1 L787.9 787.8 L787.3 799.4 L786.6 807.2 L786.0 809.9 L785.3 806.6 L784.7 797.3 L784.0 783.3 L783.3 766.7 L782.7 750.2 L782.0 736.2 L781.3 726.8 L780.7 723.6 L780.0 726.5 L779.4 735.1 L778.8 747.8 L778.1 762.8 L777.5 777.9 L776.8 790.6 L776.2 799.1 L775.5 802.1 L774.9 799.3 L774.2 791.2 L773.6 779.1 L772.9 764.8 L772.2 750.5 L771.6 738.4 L770.9 730.3 L770.2 727.5 L769.6 730.5 L769.0 739.1 L768.3 752.1 L767.7 767.3 L767.0 782.6 L766.4 795.6 L765.7 804.2 L765.1 807.2 L764.4 803.7 L763.8 793.5 L763.1 778.2 L762.4 760.2 L761.8 742.1 L761.1 726.9 L760.5 716.6 L759.8 713.1 L759.2 716.6 L758.5 726.9 L757.9 742.1 L757.2 760.2 L756.6 778.2 L755.9 793.5 L755.3 803.7 L754.7 807.2 L754.0 803.6 L753.3 793.3 L752.7 777.8 L752.0 759.5 L751.3 741.3 L750.7 725.8 L750.0 715.5 L749.4 711.8 L748.7 715.4 L748.1 725.6 L747.4 740.9 L746.8 758.9 L746.1 777.0 L745.5 792.2 L744.9 802.4 L744.2 806.0 L743.6 802.4 L742.9 792.1 L742.2 776.7 L741.6 758.6 L740.9 740.4 L740.2 725.0 L739.6 714.7 L738.9 711.1 L738.3 714.9 L737.6 725.8 L737.0 742.0 L736.3 761.1 L735.7 780.3 L735.1 796.5 L734.4 807.3 L733.8 811.1 L733.1 807.1 L732.5 795.6 L731.8 778.5 L731.1 758.2 L730.5 737.9 L729.8 720.8 L729.1 709.3 L728.5 705.3 L727.8 709.1 L727.2 719.9 L726.6 736.1 L725.9 755.3 L725.3 774.4 L724.6 790.6 L724.0 801.5 L723.3 805.3 L722.7 801.9 L722.0 792.1 L721.4 777.4 L720.7 760.2 L720.0 742.9 L719.4 728.2 L718.7 718.4 L718.0 715.0 L717.4 719.1 L716.8 730.7 L716.1 748.0 L715.5 768.4 L714.8 788.9 L714.2 806.2 L713.5 817.8 L712.9 821.9 L712.2 817.3 L711.6 804.3 L710.9 784.9 L710.2 762.0 L709.6 739.1 L708.9 719.6 L708.3 706.6 L707.6 702.1 L707.0 706.0 L706.3 717.2 L705.7 733.9 L705.0 753.7 L704.4 773.4 L703.7 790.2 L703.1 801.4 L702.5 805.3 L701.8 802.0 L701.1 792.7 L700.5 778.9 L699.8 762.5 L699.1 746.1 L698.5 732.2 L697.8 722.9 L697.2 719.6 L696.5 723.8 L695.9 735.7 L695.2 753.5 L694.6 774.5 L693.9 795.6 L693.3 813.4 L692.7 825.3 L692.0 829.4 L691.4 824.7 L690.7 811.1 L690.0 790.7 L689.4 766.7 L688.7 742.7 L688.0 722.4 L687.4 708.8 L686.7 704.0 L686.1 707.8 L685.4 718.6 L684.8 734.7 L684.1 753.7 L683.5 772.7 L682.9 788.8 L682.2 799.6 L681.6 803.3 L680.9 800.3 L680.3 791.7 L679.6 778.7 L678.9 763.4 L678.3 748.2 L677.6 735.2 L676.9 726.6 L676.3 723.6 L675.6 727.7 L675.0 739.7 L674.4 757.5 L673.7 778.6 L673.1 799.6 L672.4 817.5 L671.8 829.4 L671.1 833.6 L670.5 828.7 L669.8 814.6 L669.2 793.6 L668.5 768.8 L667.8 744.0 L667.2 723.0 L666.5 709.0 L665.8 704.0 L665.2 707.6 L664.6 717.8 L663.9 733.1 L663.3 751.1 L662.6 769.1 L662.0 784.4 L661.3 794.6 L660.7 798.2 L660.0 795.5 L659.4 787.7 L658.7 776.1 L658.0 762.3 L657.4 748.6 L656.7 737.0 L656.1 729.2 L655.4 726.5 L654.8 730.7 L654.1 742.7 L653.5 760.6 L652.8 781.7 L652.2 802.9 L651.5 820.8 L650.9 832.8 L650.3 837.0 L649.6 832.0 L648.9 817.5 L648.3 796.0 L647.6 770.5 L646.9 745.1 L646.3 723.5 L645.6 709.1 L645.0 704.0 L644.3 707.4 L643.7 717.1 L643.0 731.7 L642.4 748.8 L641.7 765.9 L641.1 780.5 L640.5 790.2 L639.8 793.6 L639.2 791.2 L638.5 784.3 L637.8 774.1 L637.2 762.0 L636.5 749.9 L635.8 739.6 L635.2 732.8 L634.5 730.4 L633.9 734.6 L633.2 746.6 L632.6 764.5 L631.9 785.6 L631.3 806.8 L630.7 824.7 L630.0 836.7 L629.4 840.9 L628.7 835.8 L628.1 821.0 L627.4 799.0 L626.7 773.1 L626.1 747.1 L625.4 725.1 L624.7 710.4 L624.1 705.3 L623.4 708.4 L622.8 717.2 L622.2 730.5 L621.5 746.1 L620.9 761.8 L620.2 775.0 L619.6 783.9 L618.9 787.0 L618.3 785.1 L617.6 779.7 L617.0 771.6 L616.3 762.1 L615.6 752.6 L615.0 744.5 L614.3 739.1 L613.6 737.2 L613.0 741.1 L612.4 752.1 L611.7 768.5 L611.1 788.0 L610.4 807.4 L609.8 823.9 L609.1 834.9 L608.5 838.7 L607.8 833.8 L607.2 820.0 L606.5 799.2 L605.8 774.7 L605.2 750.2 L604.5 729.4 L603.9 715.5 L603.2 710.6 L602.6 713.4 L601.9 721.2 L601.3 733.0 L600.6 746.9 L600.0 760.7 L599.3 772.5 L598.7 780.3 L598.1 783.1 L597.4 781.7 L596.7 777.7 L596.1 771.6 L595.4 764.5 L594.7 757.4 L594.1 751.4 L593.4 747.4 L592.8 746.0 L592.1 749.3 L591.5 758.6 L590.8 772.7 L590.2 789.2 L589.5 805.7 L588.9 819.7 L588.3 829.1 L587.6 832.4 L587.0 828.0 L586.3 815.6 L585.6 797.0 L585.0 775.0 L584.3 753.1 L583.6 734.5 L583.0 722.1 L582.3 717.7 L581.7 720.0 L581.0 726.4 L580.4 736.1 L579.8 747.5 L579.1 758.9 L578.5 768.5 L577.8 775.0 L577.2 777.2 L576.5 776.4 L575.9 773.9 L575.2 770.2 L574.5 765.9 L573.9 761.5 L573.2 757.9 L572.5 755.4 L571.9 754.5 L571.2 757.3 L570.6 765.3 L570.0 777.1 L569.3 791.1 L568.7 805.1 L568.0 817.0 L567.4 825.0 L566.7 827.7 L566.1 823.5 L565.4 811.5 L564.8 793.5 L564.1 772.4 L563.4 751.2 L562.8 733.2 L562.1 721.2 L561.4 717.0 L560.8 719.4 L560.2 726.3 L559.5 736.6 L558.9 748.8 L558.2 761.0 L557.6 771.3 L556.9 778.2 L556.3 780.6 L555.6 779.8 L555.0 777.4 L554.3 773.8 L553.6 769.5 L553.0 765.3 L552.3 761.7 L551.7 759.3 L551.0 758.4 L550.4 760.7 L549.7 767.2 L549.1 776.8 L548.4 788.2 L547.8 799.6 L547.1 809.3 L546.5 815.7 L545.9 818.0 L545.2 814.0 L544.5 802.7 L543.9 785.8 L543.2 765.9 L542.5 746.0 L541.9 729.0 L541.2 717.8 L540.6 713.8 L539.9 716.7 L539.3 725.1 L538.6 737.6 L538.0 752.3 L537.3 767.1 L536.7 779.6 L536.1 788.0 L535.4 790.9 L534.8 789.5 L534.1 785.6 L533.4 779.7 L532.8 772.7 L532.1 765.8 L531.4 759.9 L530.8 755.9 L530.1 754.5 L529.5 757.0 L528.8 764.1 L528.2 774.6 L527.5 787.1 L526.9 799.6 L526.3 810.1 L525.6 817.2 L525.0 819.7 L524.3 815.4 L523.7 803.3 L523.0 785.2 L522.3 763.8 L521.7 742.4 L521.0 724.3 L520.3 712.2 L519.7 707.9 L519.0 711.7 L518.4 722.5 L517.8 738.6 L517.1 757.6 L516.5 776.6 L515.8 792.7 L515.2 803.5 L514.5 807.2 L513.9 804.8 L513.2 797.8 L512.6 787.4 L511.9 775.0 L511.2 762.7 L510.6 752.3 L509.9 745.3 L509.2 742.8 L508.6 745.9 L508.0 754.7 L507.3 767.8 L506.7 783.3 L506.0 798.8 L505.4 812.0 L504.7 820.8 L504.1 823.8 L503.4 819.3 L502.8 806.4 L502.1 787.1 L501.4 764.3 L500.8 741.5 L500.1 722.2 L499.5 709.3 L498.8 704.8 L498.2 709.3 L497.5 722.3 L496.9 741.7 L496.2 764.7 L495.6 787.6 L494.9 807.0 L494.3 820.0 L493.7 824.6 L493.0 820.7 L492.3 809.8 L491.7 793.4 L491.0 774.1 L490.3 754.7 L489.7 738.3 L489.0 727.4 L488.4 723.6 L487.7 727.6 L487.1 739.1 L486.4 756.3 L485.8 776.6 L485.1 796.9 L484.5 814.1 L483.9 825.7 L483.2 829.7 L482.6 824.9 L481.9 811.3 L481.2 790.9 L480.6 766.9 L479.9 742.8 L479.2 722.4 L478.6 708.8 L477.9 704.0 L477.3 709.1 L476.6 723.7 L476.0 745.5 L475.4 771.1 L474.7 796.8 L474.1 818.6 L473.4 833.1 L472.8 838.2 L472.1 833.3 L471.5 819.4 L470.8 798.6 L470.1 774.1 L469.5 749.5 L468.8 728.7 L468.1 714.8 L467.5 709.9 L466.8 714.5 L466.2 727.7 L465.6 747.5 L464.9 770.8 L464.3 794.1 L463.6 813.8 L463.0 827.0 L462.3 831.6 L461.7 826.8 L461.0 813.1 L460.4 792.5 L459.7 768.2 L459.0 743.9 L458.4 723.3 L457.7 709.6 L457.0 704.8 L456.4 710.3 L455.8 726.2 L455.1 750.0 L454.5 778.0 L453.8 806.0 L453.2 829.7 L452.5 845.6 L451.9 851.2 L451.2 845.1 L450.6 828.0 L449.9 802.4 L449.2 772.1 L448.6 741.9 L447.9 716.2 L447.3 699.1 L446.6 693.1 L446.0 698.2 L445.3 712.8 L444.7 734.6 L444.0 760.4 L443.4 786.2 L442.7 808.0 L442.1 822.6 L441.5 827.7 L440.8 823.4 L440.1 810.9 L439.5 792.3 L438.8 770.4 L438.1 748.5 L437.5 729.9 L436.8 717.4 L436.2 713.1 L435.5 718.6 L434.9 734.5 L434.2 758.3 L433.6 786.4 L432.9 814.4 L432.3 838.2 L431.7 854.1 L431.0 859.7 L430.4 853.1 L429.7 834.3 L429.0 806.2 L428.4 773.1 L427.7 739.9 L427.0 711.8 L426.4 693.1 L425.7 686.5 L425.1 691.6 L424.4 706.3 L423.8 728.2 L423.1 754.1 L422.5 779.9 L421.9 801.8 L421.2 816.5 L420.6 821.6 L419.9 817.7 L419.3 806.4 L418.6 789.6 L417.9 769.7 L417.3 749.8 L416.6 732.9 L415.9 721.7 L415.3 717.7 L414.6 723.1 L414.0 738.6 L413.4 761.8 L412.7 789.1 L412.1 816.4 L411.4 839.5 L410.8 855.0 L410.1 860.4 L409.5 853.6 L408.8 834.2 L408.2 805.2 L407.5 770.9 L406.8 736.6 L406.2 707.6 L405.5 688.2 L404.8 681.3 L404.2 686.2 L403.6 700.1 L402.9 720.8 L402.3 745.3 L401.6 769.7 L401.0 790.5 L400.3 804.3 L399.7 809.2 L399.0 806.0 L398.4 797.1 L397.7 783.7 L397.0 767.8 L396.4 752.0 L395.7 738.6 L395.1 729.6 L394.4 726.5 L393.8 731.5 L393.1 745.7 L392.5 767.0 L391.8 792.1 L391.2 817.2 L390.5 838.5 L389.9 852.8 L389.3 857.8 L388.6 851.3 L387.9 833.0 L387.3 805.5 L386.6 773.1 L385.9 740.7 L385.3 713.2 L384.6 694.9 L384.0 688.4 L383.3 692.7 L382.7 705.0 L382.0 723.3 L381.4 744.9 L380.7 766.5 L380.1 784.8 L379.5 797.1 L378.8 801.4 L378.2 798.9 L377.5 791.8 L376.8 781.3 L376.2 768.8 L375.5 756.3 L374.8 745.8 L374.2 738.7 L373.5 736.2 L372.9 740.7 L372.2 753.5 L371.6 772.5 L370.9 795.0 L370.3 817.5 L369.7 836.6 L369.0 849.4 L368.4 853.8 L367.7 848.0 L367.1 831.3 L366.4 806.4 L365.7 777.0 L365.1 747.6 L364.4 722.6 L363.7 706.0 L363.1 700.1 L362.4 703.8 L361.8 714.1 L361.2 729.6 L360.5 747.8 L359.9 766.1 L359.2 781.6 L358.6 791.9 L357.9 795.5 L357.3 793.7 L356.6 788.4 L356.0 780.5 L355.3 771.1 L354.6 761.8 L354.0 753.9 L353.3 748.6 L352.6 746.7 L352.0 750.5 L351.4 761.3 L350.7 777.4 L350.1 796.4 L349.4 815.4 L348.8 831.5 L348.1 842.3 L347.5 846.0 L346.8 840.9 L346.2 826.1 L345.5 804.0 L344.9 778.0 L344.2 751.9 L343.5 729.8 L342.9 715.1 L342.2 709.9 L341.6 713.0 L340.9 721.8 L340.3 734.9 L339.6 750.4 L339.0 765.9 L338.3 779.0 L337.7 787.8 L337.1 790.9 L336.4 789.6 L335.7 786.0 L335.1 780.6 L334.4 774.2 L333.7 767.8 L333.1 762.4 L332.4 758.7 L331.8 757.5 L331.1 760.5 L330.5 769.3 L329.8 782.4 L329.2 797.8 L328.5 813.3 L327.9 826.4 L327.3 835.2 L326.6 838.2 L326.0 833.9 L325.3 821.4 L324.6 802.8 L324.0 780.9 L323.3 758.9 L322.6 740.3 L322.0 727.9 L321.3 723.6 L320.7 725.9 L320.0 732.7 L319.4 742.8 L318.8 754.7 L318.1 766.6 L317.5 776.7 L316.8 783.4 L316.2 785.8 L315.5 785.1 L314.9 783.3 L314.2 780.6 L313.5 777.4 L312.9 774.1 L312.2 771.4 L311.5 769.6 L310.9 768.9 L310.2 771.2 L309.6 777.5 L309.0 787.1 L308.3 798.3 L307.7 809.6 L307.0 819.1 L306.4 825.5 L305.7 827.7 L305.1 824.2 L304.4 814.0 L303.8 798.7 L303.1 780.8 L302.4 762.8 L301.8 747.6 L301.1 737.4 L300.4 733.8 L299.8 735.8 L299.2 741.3 L298.5 749.6 L297.9 759.4 L297.2 769.2 L296.6 777.5 L295.9 783.1 L295.3 785.0 L294.6 784.7 L294.0 783.6 L293.3 782.0 L292.6 780.2 L292.0 778.3 L291.3 776.7 L290.7 775.7 L290.0 775.3 L289.4 776.7 L288.7 780.6 L288.1 786.6 L287.4 793.6 L286.8 800.6 L286.1 806.5 L285.5 810.5 L284.9 811.9 L284.2 809.0 L283.5 800.8 L282.9 788.5 L282.2 774.1 L281.5 759.6 L280.9 747.3 L280.2 739.1 L279.6 736.2 L278.9 738.2 L278.3 743.9 L277.6 752.4 L277.0 762.3 L276.3 772.3 L275.7 780.8 L275.1 786.5 L274.4 788.5 L273.8 787.9 L273.1 786.2 L272.4 783.8 L271.8 780.9 L271.1 778.0 L270.4 775.5 L269.8 773.9 L269.1 773.3 L268.5 774.5 L267.8 777.7 L267.2 782.6 L266.6 788.3 L265.9 794.1 L265.3 798.9 L264.6 802.2 L264.0 803.3 L263.3 800.8 L262.7 793.5 L262.0 782.6 L261.3 769.8 L260.7 757.0 L260.0 746.1 L259.3 738.8 L258.7 736.2 L258.0 738.5 L257.4 745.0 L256.8 754.8 L256.1 766.3 L255.5 777.7 L254.8 787.5 L254.2 794.0 L253.5 796.3 L252.9 795.0 L252.2 791.6 L251.6 786.4 L250.9 780.3 L250.2 774.2 L249.6 769.0 L248.9 765.5 L248.2 764.3 L247.6 765.6 L247.0 769.2 L246.3 774.5 L245.7 780.9 L245.0 787.2 L244.4 792.6 L243.7 796.2 L243.1 797.5 L242.4 795.2 L241.8 788.5 L241.1 778.6 L240.4 766.9 L239.8 755.1 L239.1 745.2 L238.5 738.6 L237.8 736.2 L237.2 738.8 L236.5 746.2 L235.9 757.3 L235.2 770.4 L234.6 783.5 L233.9 794.6 L233.3 802.0 L232.7 804.6 L232.0 802.6 L231.3 797.1 L230.7 788.8 L230.0 779.1 L229.3 769.3 L228.7 761.0 L228.0 755.5 L227.4 753.6 L226.7 755.4 L226.1 760.6 L225.4 768.3 L224.8 777.5 L224.1 786.6 L223.5 794.4 L222.9 799.6 L222.2 801.4 L221.6 799.0 L220.9 792.1 L220.2 781.8 L219.6 769.7 L218.9 757.5 L218.2 747.2 L217.6 740.4 L216.9 737.9 L216.3 740.9 L215.6 749.4 L215.0 762.0 L214.3 777.0 L213.7 791.9 L213.1 804.6 L212.4 813.1 L211.8 816.0 L211.1 813.2 L210.5 805.3 L209.8 793.4 L209.1 779.4 L208.5 765.4 L207.8 753.5 L207.1 745.6 L206.5 742.8 L205.8 745.2 L205.2 751.9 L204.6 761.9 L203.9 773.7 L203.3 785.5 L202.6 795.5 L202.0 802.2 L201.3 804.6 L200.7 801.9 L200.0 794.4 L199.4 783.2 L198.7 769.9 L198.0 756.7 L197.4 745.4 L196.7 737.9 L196.0 735.3 L195.4 738.6 L194.8 748.1 L194.1 762.2 L193.5 778.9 L192.8 795.7 L192.2 809.8 L191.5 819.3 L190.9 822.6 L190.2 819.1 L189.6 809.3 L188.9 794.4 L188.2 777.0 L187.6 759.5 L186.9 744.7 L186.3 734.8 L185.6 731.4 L185.0 733.0 L184.3 737.7 L183.7 745.3 L183.1 755.1 L182.5 766.6 L181.9 778.9 L181.2 791.3 L180.6 802.7 Z" fill="#00C9FF" fill-opacity=".15"/>
<path d="M180.6 802.7 L181.2 791.3 L181.9 778.9 L182.5 766.6 L183.1 755.1 L183.7 745.3 L184.3 737.7 L185.0 733.0 L185.6 731.4 L186.3 734.8 L186.9 744.7 L187.6 759.5 L188.2 777.0 L188.9 794.4 L189.6 809.3 L190.2 819.1 L190.9 822.6 L191.5 819.3 L192.2 809.8 L192.8 795.7 L193.5 778.9 L194.1 762.2 L194.8 748.1 L195.4 738.6 L196.0 735.3 L196.7 737.9 L197.4 745.4 L198.0 756.7 L198.7 769.9 L199.4 783.2 L200.0 794.4 L200.7 801.9 L201.3 804.6 L202.0 802.2 L202.6 795.5 L203.3 785.5 L203.9 773.7 L204.6 761.9 L205.2 751.9 L205.8 745.2 L206.5 742.8 L207.1 745.6 L207.8 753.5 L208.5 765.4 L209.1 779.4 L209.8 793.4 L210.5 805.3 L211.1 813.2 L211.8 816.0 L212.4 813.1 L213.1 804.6 L213.7 791.9 L214.3 777.0 L215.0 762.0 L215.6 749.4 L216.3 740.9 L216.9 737.9 L217.6 740.4 L218.2 747.2 L218.9 757.5 L219.6 769.7 L220.2 781.8 L220.9 792.1 L221.6 799.0 L222.2 801.4 L222.9 799.6 L223.5 794.4 L224.1 786.6 L224.8 777.5 L225.4 768.3 L226.1 760.6 L226.7 755.4 L227.4 753.6 L228.0 755.5 L228.7 761.0 L229.3 769.3 L230.0 779.1 L230.7 788.8 L231.3 797.1 L232.0 802.6 L232.7 804.6 L233.3 802.0 L233.9 794.6 L234.6 783.5 L235.2 770.4 L235.9 757.3 L236.5 746.2 L237.2 738.8 L237.8 736.2 L238.5 738.6 L239.1 745.2 L239.8 755.1 L240.4 766.9 L241.1 778.6 L241.8 788.5 L242.4 795.2 L243.1 797.5 L243.7 796.2 L244.4 792.6 L245.0 787.2 L245.7 780.9 L246.3 774.5 L247.0 769.2 L247.6 765.6 L248.2 764.3 L248.9 765.5 L249.6 769.0 L250.2 774.2 L250.9 780.3 L251.6 786.4 L252.2 791.6 L252.9 795.0 L253.5 796.3 L254.2 794.0 L254.8 787.5 L255.5 777.7 L256.1 766.3 L256.8 754.8 L257.4 745.0 L258.0 738.5 L258.7 736.2 L259.3 738.8 L260.0 746.1 L260.7 757.0 L261.3 769.8 L262.0 782.6 L262.7 793.5 L263.3 800.8 L264.0 803.3 L264.6 802.2 L265.3 798.9 L265.9 794.1 L266.6 788.3 L267.2 782.6 L267.8 777.7 L268.5 774.5 L269.1 773.3 L269.8 773.9 L270.4 775.5 L271.1 778.0 L271.8 780.9 L272.4 783.8 L273.1 786.2 L273.8 787.9 L274.4 788.5 L275.1 786.5 L275.7 780.8 L276.3 772.3 L277.0 762.3 L277.6 752.4 L278.3 743.9 L278.9 738.2 L279.6 736.2 L280.2 739.1 L280.9 747.3 L281.5 759.6 L282.2 774.1 L282.9 788.5 L283.5 800.8 L284.2 809.0 L284.9 811.9 L285.5 810.5 L286.1 806.5 L286.8 800.6 L287.4 793.6 L288.1 786.6 L288.7 780.6 L289.4 776.7 L290.0 775.3 L290.7 775.7 L291.3 776.7 L292.0 778.3 L292.6 780.2 L293.3 782.0 L294.0 783.6 L294.6 784.7 L295.3 785.0 L295.9 783.1 L296.6 777.5 L297.2 769.2 L297.9 759.4 L298.5 749.6 L299.2 741.3 L299.8 735.8 L300.4 733.8 L301.1 737.4 L301.8 747.6 L302.4 762.8 L303.1 780.8 L303.8 798.7 L304.4 814.0 L305.1 824.2 L305.7 827.7 L306.4 825.5 L307.0 819.1 L307.7 809.6 L308.3 798.3 L309.0 787.1 L309.6 777.5 L310.2 771.2 L310.9 768.9 L311.5 769.6 L312.2 771.4 L312.9 774.1 L313.5 777.4 L314.2 780.6 L314.9 783.3 L315.5 785.1 L316.2 785.8 L316.8 783.4 L317.5 776.7 L318.1 766.6 L318.8 754.7 L319.4 742.8 L320.0 732.7 L320.7 725.9 L321.3 723.6 L322.0 727.9 L322.6 740.3 L323.3 758.9 L324.0 780.9 L324.6 802.8 L325.3 821.4 L326.0 833.9 L326.6 838.2 L327.3 835.2 L327.9 826.4 L328.5 813.3 L329.2 797.8 L329.8 782.4 L330.5 769.3 L331.1 760.5 L331.8 757.5 L332.4 758.7 L333.1 762.4 L333.7 767.8 L334.4 774.2 L335.1 780.6 L335.7 786.0 L336.4 789.6 L337.1 790.9 L337.7 787.8 L338.3 779.0 L339.0 765.9 L339.6 750.4 L340.3 734.9 L340.9 721.8 L341.6 713.0 L342.2 709.9 L342.9 715.1 L343.5 729.8 L344.2 751.9 L344.9 778.0 L345.5 804.0 L346.2 826.1 L346.8 840.9 L347.5 846.0 L348.1 842.3 L348.8 831.5 L349.4 815.4 L350.1 796.4 L350.7 777.4 L351.4 761.3 L352.0 750.5 L352.6 746.7 L353.3 748.6 L354.0 753.9 L354.6 761.8 L355.3 771.1 L356.0 780.5 L356.6 788.4 L357.3 793.7 L357.9 795.5 L358.6 791.9 L359.2 781.6 L359.9 766.1 L360.5 747.8 L361.2 729.6 L361.8 714.1 L362.4 703.8 L363.1 700.1 L363.7 706.0 L364.4 722.6 L365.1 747.6 L365.7 777.0 L366.4 806.4 L367.1 831.3 L367.7 848.0 L368.4 853.8 L369.0 849.4 L369.7 836.6 L370.3 817.5 L370.9 795.0 L371.6 772.5 L372.2 753.5 L372.9 740.7 L373.5 736.2 L374.2 738.7 L374.8 745.8 L375.5 756.3 L376.2 768.8 L376.8 781.3 L377.5 791.8 L378.2 798.9 L378.8 801.4 L379.5 797.1 L380.1 784.8 L380.7 766.5 L381.4 744.9 L382.0 723.3 L382.7 705.0 L383.3 692.7 L384.0 688.4 L384.6 694.9 L385.3 713.2 L385.9 740.7 L386.6 773.1 L387.3 805.5 L387.9 833.0 L388.6 851.3 L389.3 857.8 L389.9 852.8 L390.5 838.5 L391.2 817.2 L391.8 792.1 L392.5 767.0 L393.1 745.7 L393.8 731.5 L394.4 726.5 L395.1 729.6 L395.7 738.6 L396.4 752.0 L397.0 767.8 L397.7 783.7 L398.4 797.1 L399.0 806.0 L399.7 809.2 L400.3 804.3 L401.0 790.5 L401.6 769.7 L402.3 745.3 L402.9 720.8 L403.6 700.1 L404.2 686.2 L404.8 681.3 L405.5 688.2 L406.2 707.6 L406.8 736.6 L407.5 770.9 L408.2 805.2 L408.8 834.2 L409.5 853.6 L410.1 860.4 L410.8 855.0 L411.4 839.5 L412.1 816.4 L412.7 789.1 L413.4 761.8 L414.0 738.6 L414.6 723.1 L415.3 717.7 L415.9 721.7 L416.6 732.9 L417.3 749.8 L417.9 769.7 L418.6 789.6 L419.3 806.4 L419.9 817.7 L420.6 821.6 L421.2 816.5 L421.9 801.8 L422.5 779.9 L423.1 754.1 L423.8 728.2 L424.4 706.3 L425.1 691.6 L425.7 686.5 L426.4 693.1 L427.0 711.8 L427.7 739.9 L428.4 773.1 L429.0 806.2 L429.7 834.3 L430.4 853.1 L431.0 859.7 L431.7 854.1 L432.3 838.2 L432.9 814.4 L433.6 786.4 L434.2 758.3 L434.9 734.5 L435.5 718.6 L436.2 713.1 L436.8 717.4 L437.5 729.9 L438.1 748.5 L438.8 770.4 L439.5 792.3 L440.1 810.9 L440.8 823.4 L441.5 827.7 L442.1 822.6 L442.7 808.0 L443.4 786.2 L444.0 760.4 L444.7 734.6 L445.3 712.8 L446.0 698.2 L446.6 693.1 L447.3 699.1 L447.9 716.2 L448.6 741.9 L449.2 772.1 L449.9 802.4 L450.6 828.0 L451.2 845.1 L451.9 851.2 L452.5 845.6 L453.2 829.7 L453.8 806.0 L454.5 778.0 L455.1 750.0 L455.8 726.2 L456.4 710.3 L457.0 704.8 L457.7 709.6 L458.4 723.3 L459.0 743.9 L459.7 768.2 L460.4 792.5 L461.0 813.1 L461.7 826.8 L462.3 831.6 L463.0 827.0 L463.6 813.8 L464.3 794.1 L464.9 770.8 L465.6 747.5 L466.2 727.7 L466.8 714.5 L467.5 709.9 L468.1 714.8 L468.8 728.7 L469.5 749.5 L470.1 774.1 L470.8 798.6 L471.5 819.4 L472.1 833.3 L472.8 838.2 L473.4 833.1 L474.1 818.6 L474.7 796.8 L475.4 771.1 L476.0 745.5 L476.6 723.7 L477.3 709.1 L477.9 704.0 L478.6 708.8 L479.2 722.4 L479.9 742.8 L480.6 766.9 L481.2 790.9 L481.9 811.3 L482.6 824.9 L483.2 829.7 L483.9 825.7 L484.5 814.1 L485.1 796.9 L485.8 776.6 L486.4 756.3 L487.1 739.1 L487.7 727.6 L488.4 723.6 L489.0 727.4 L489.7 738.3 L490.3 754.7 L491.0 774.1 L491.7 793.4 L492.3 809.8 L493.0 820.7 L493.7 824.6 L494.3 820.0 L494.9 807.0 L495.6 787.6 L496.2 764.7 L496.9 741.7 L497.5 722.3 L498.2 709.3 L498.8 704.8 L499.5 709.3 L500.1 722.2 L500.8 741.5 L501.4 764.3 L502.1 787.1 L502.8 806.4 L503.4 819.3 L504.1 823.8 L504.7 820.8 L505.4 812.0 L506.0 798.8 L506.7 783.3 L507.3 767.8 L508.0 754.7 L508.6 745.9 L509.2 742.8 L509.9 745.3 L510.6 752.3 L511.2 762.7 L511.9 775.0 L512.6 787.4 L513.2 797.8 L513.9 804.8 L514.5 807.2 L515.2 803.5 L515.8 792.7 L516.5 776.6 L517.1 757.6 L517.8 738.6 L518.4 722.5 L519.0 711.7 L519.7 707.9 L520.3 712.2 L521.0 724.3 L521.7 742.4 L522.3 763.8 L523.0 785.2 L523.7 803.3 L524.3 815.4 L525.0 819.7 L525.6 817.2 L526.3 810.1 L526.9 799.6 L527.5 787.1 L528.2 774.6 L528.8 764.1 L529.5 757.0 L530.1 754.5 L530.8 755.9 L531.4 759.9 L532.1 765.8 L532.8 772.7 L533.4 779.7 L534.1 785.6 L534.8 789.5 L535.4 790.9 L536.1 788.0 L536.7 779.6 L537.3 767.1 L538.0 752.3 L538.6 737.6 L539.3 725.1 L539.9 716.7 L540.6 713.8 L541.2 717.8 L541.9 729.0 L542.5 746.0 L543.2 765.9 L543.9 785.8 L544.5 802.7 L545.2 814.0 L545.9 818.0 L546.5 815.7 L547.1 809.3 L547.8 799.6 L548.4 788.2 L549.1 776.8 L549.7 767.2 L550.4 760.7 L551.0 758.4 L551.7 759.3 L552.3 761.7 L553.0 765.3 L553.6 769.5 L554.3 773.8 L555.0 777.4 L555.6 779.8 L556.3 780.6 L556.9 778.2 L557.6 771.3 L558.2 761.0 L558.9 748.8 L559.5 736.6 L560.2 726.3 L560.8 719.4 L561.4 717.0 L562.1 721.2 L562.8 733.2 L563.4 751.2 L564.1 772.4 L564.8 793.5 L565.4 811.5 L566.1 823.5 L566.7 827.7 L567.4 825.0 L568.0 817.0 L568.7 805.1 L569.3 791.1 L570.0 777.1 L570.6 765.3 L571.2 757.3 L571.9 754.5 L572.5 755.4 L573.2 757.9 L573.9 761.5 L574.5 765.9 L575.2 770.2 L575.9 773.9 L576.5 776.4 L577.2 777.2 L577.8 775.0 L578.5 768.5 L579.1 758.9 L579.8 747.5 L580.4 736.1 L581.0 726.4 L581.7 720.0 L582.3 717.7 L583.0 722.1 L583.6 734.5 L584.3 753.1 L585.0 775.0 L585.6 797.0 L586.3 815.6 L587.0 828.0 L587.6 832.4 L588.3 829.1 L588.9 819.7 L589.5 805.7 L590.2 789.2 L590.8 772.7 L591.5 758.6 L592.1 749.3 L592.8 746.0 L593.4 747.4 L594.1 751.4 L594.7 757.4 L595.4 764.5 L596.1 771.6 L596.7 777.7 L597.4 781.7 L598.1 783.1 L598.7 780.3 L599.3 772.5 L600.0 760.7 L600.6 746.9 L601.3 733.0 L601.9 721.2 L602.6 713.4 L603.2 710.6 L603.9 715.5 L604.5 729.4 L605.2 750.2 L605.8 774.7 L606.5 799.2 L607.2 820.0 L607.8 833.8 L608.5 838.7 L609.1 834.9 L609.8 823.9 L610.4 807.4 L611.1 788.0 L611.7 768.5 L612.4 752.1 L613.0 741.1 L613.6 737.2 L614.3 739.1 L615.0 744.5 L615.6 752.6 L616.3 762.1 L617.0 771.6 L617.6 779.7 L618.3 785.1 L618.9 787.0 L619.6 783.9 L620.2 775.0 L620.9 761.8 L621.5 746.1 L622.2 730.5 L622.8 717.2 L623.4 708.4 L624.1 705.3 L624.7 710.4 L625.4 725.1 L626.1 747.1 L626.7 773.1 L627.4 799.0 L628.1 821.0 L628.7 835.8 L629.4 840.9 L630.0 836.7 L630.7 824.7 L631.3 806.8 L631.9 785.6 L632.6 764.5 L633.2 746.6 L633.9 734.6 L634.5 730.4 L635.2 732.8 L635.8 739.6 L636.5 749.9 L637.2 762.0 L637.8 774.1 L638.5 784.3 L639.2 791.2 L639.8 793.6 L640.5 790.2 L641.1 780.5 L641.7 765.9 L642.4 748.8 L643.0 731.7 L643.7 717.1 L644.3 707.4 L645.0 704.0 L645.6 709.1 L646.3 723.5 L646.9 745.1 L647.6 770.5 L648.3 796.0 L648.9 817.5 L649.6 832.0 L650.3 837.0 L650.9 832.8 L651.5 820.8 L652.2 802.9 L652.8 781.7 L653.5 760.6 L654.1 742.7 L654.8 730.7 L655.4 726.5 L656.1 729.2 L656.7 737.0 L657.4 748.6 L658.0 762.3 L658.7 776.1 L659.4 787.7 L660.0 795.5 L660.7 798.2 L661.3 794.6 L662.0 784.4 L662.6 769.1 L663.3 751.1 L663.9 733.1 L664.6 717.8 L665.2 707.6 L665.8 704.0 L666.5 709.0 L667.2 723.0 L667.8 744.0 L668.5 768.8 L669.2 793.6 L669.8 814.6 L670.5 828.7 L671.1 833.6 L671.8 829.4 L672.4 817.5 L673.1 799.6 L673.7 778.6 L674.4 757.5 L675.0 739.7 L675.6 727.7 L676.3 723.6 L676.9 726.6 L677.6 735.2 L678.3 748.2 L678.9 763.4 L679.6 778.7 L680.3 791.7 L680.9 800.3 L681.6 803.3 L682.2 799.6 L682.9 788.8 L683.5 772.7 L684.1 753.7 L684.8 734.7 L685.4 718.6 L686.1 707.8 L686.7 704.0 L687.4 708.8 L688.0 722.4 L688.7 742.7 L689.4 766.7 L690.0 790.7 L690.7 811.1 L691.4 824.7 L692.0 829.4 L692.7 825.3 L693.3 813.4 L693.9 795.6 L694.6 774.5 L695.2 753.5 L695.9 735.7 L696.5 723.8 L697.2 719.6 L697.8 722.9 L698.5 732.2 L699.1 746.1 L699.8 762.5 L700.5 778.9 L701.1 792.7 L701.8 802.0 L702.5 805.3 L703.1 801.4 L703.7 790.2 L704.4 773.4 L705.0 753.7 L705.7 733.9 L706.3 717.2 L707.0 706.0 L707.6 702.1 L708.3 706.6 L708.9 719.6 L709.6 739.1 L710.2 762.0 L710.9 784.9 L711.6 804.3 L712.2 817.3 L712.9 821.9 L713.5 817.8 L714.2 806.2 L714.8 788.9 L715.5 768.4 L716.1 748.0 L716.8 730.7 L717.4 719.1 L718.0 715.0 L718.7 718.4 L719.4 728.2 L720.0 742.9 L720.7 760.2 L721.4 777.4 L722.0 792.1 L722.7 801.9 L723.3 805.3 L724.0 801.5 L724.6 790.6 L725.3 774.4 L725.9 755.3 L726.6 736.1 L727.2 719.9 L727.8 709.1 L728.5 705.3 L729.1 709.3 L729.8 720.8 L730.5 737.9 L731.1 758.2 L731.8 778.5 L732.5 795.6 L733.1 807.1 L733.8 811.1 L734.4 807.3 L735.1 796.5 L735.7 780.3 L736.3 761.1 L737.0 742.0 L737.6 725.8 L738.3 714.9 L738.9 711.1 L739.6 714.7 L740.2 725.0 L740.9 740.4 L741.6 758.6 L742.2 776.7 L742.9 792.1 L743.6 802.4 L744.2 806.0 L744.9 802.4 L745.5 792.2 L746.1 777.0 L746.8 758.9 L747.4 740.9 L748.1 725.6 L748.7 715.4 L749.4 711.8 L750.0 715.5 L750.7 725.8 L751.3 741.3 L752.0 759.5 L752.7 777.8 L753.3 793.3 L754.0 803.6 L754.7 807.2 L755.3 803.7 L755.9 793.5 L756.6 778.2 L757.2 760.2 L757.9 742.1 L758.5 726.9 L759.2 716.6 L759.8 713.1 L760.5 716.6 L761.1 726.9 L761.8 742.1 L762.4 760.2 L763.1 778.2 L763.8 793.5 L764.4 803.7 L765.1 807.2 L765.7 804.2 L766.4 795.6 L767.0 782.6 L767.7 767.3 L768.3 752.1 L769.0 739.1 L769.6 730.5 L770.2 727.5 L770.9 730.3 L771.6 738.4 L772.2 750.5 L772.9 764.8 L773.6 779.1 L774.2 791.2 L774.9 799.3 L775.5 802.1 L776.2 799.1 L776.8 790.6 L777.5 777.9 L778.1 762.8 L778.8 747.8 L779.4 735.1 L780.0 726.5 L780.7 723.6 L781.3 726.8 L782.0 736.2 L782.7 750.2 L783.3 766.7 L784.0 783.3 L784.7 797.3 L785.3 806.6 L786.0 809.9 L786.6 807.2 L787.3 799.4 L787.9 787.8 L788.5 774.1 L789.2 760.3 L789.8 748.7 L790.5 740.9 L791.1 738.2 L791.8 740.7 L792.4 748.0 L793.1 758.9 L793.8 771.7 L794.4 784.6 L795.1 795.5 L795.8 802.7 L796.4 805.3 L797.1 801.8 L797.7 791.8 L798.3 776.8 L799.0 759.2 L799.6 741.5 L800.3 726.6 L800.9 716.6 L801.6 713.1 L802.2 716.8 L802.9 727.4 L803.5 743.3 L804.2 762.1 L804.9 780.9 L805.5 796.8 L806.2 807.4 L806.9 811.1 L807.5 808.5 L808.1 801.1 L808.8 790.1 L809.4 777.0 L810.1 763.9 L810.7 752.8 L811.4 745.4 L812.0 742.8 L812.7 744.7 L813.3 750.1 L814.0 758.1 L814.6 767.6 L815.3 777.1 L816.0 785.1 L816.6 790.5 L817.3 792.4 L817.9 789.5 L818.6 781.3 L819.2 769.1 L819.9 754.7 L820.5 740.2 L821.2 728.0 L821.8 719.8 L822.4 717.0 L823.1 720.2 L823.1 855.8 L180.6 855.8 Z" fill="#9394FF" fill-opacity=".15"/>
<path d="M180.6 802.7 L181.2 791.3 L181.9 778.9 L182.5 766.6 L183.1 755.1 L183.7 745.3 L184.3 737.7 L185.0 733.0 L185.6 731.4 L186.3 734.8 L186.9 744.7 L187.6 759.5 L188.2 777.0 L188.9 794.4 L189.6 809.3 L190.2 819.1 L190.9 822.6 L191.5 819.3 L192.2 809.8 L192.8 795.7 L193.5 778.9 L194.1 762.2 L194.8 748.1 L195.4 738.6 L196.0 735.3 L196.7 737.9 L197.4 745.4 L198.0 756.7 L198.7 769.9 L199.4 783.2 L200.0 794.4 L200.7 801.9 L201.3 804.6 L202.0 802.2 L202.6 795.5 L203.3 785.5 L203.9 773.7 L204.6 761.9 L205.2 751.9 L205.8 745.2 L206.5 742.8 L207.1 745.6 L207.8 753.5 L208.5 765.4 L209.1 779.4 L209.8 793.4 L210.5 805.3 L211.1 813.2 L211.8 816.0 L212.4 813.1 L213.1 804.6 L213.7 791.9 L214.3 777.0 L215.0 762.0 L215.6 749.4 L216.3 740.9 L216.9 737.9 L217.6 740.4 L218.2 747.2 L218.9 757.5 L219.6 769.7 L220.2 781.8 L220.9 792.1 L221.6 799.0 L222.2 801.4 L222.9 799.6 L223.5 794.4 L224.1 786.6 L224.8 777.5 L225.4 768.3 L226.1 760.6 L226.7 755.4 L227.4 753.6 L228.0 755.5 L228.7 761.0 L229.3 769.3 L230.0 779.1 L230.7 788.8 L231.3 797.1 L232.0 802.6 L232.7 804.6 L233.3 802.0 L233.9 794.6 L234.6 783.5 L235.2 770.4 L235.9 757.3 L236.5 746.2 L237.2 738.8 L237.8 736.2 L238.5 738.6 L239.1 745.2 L239.8 755.1 L240.4 766.9 L241.1 778.6 L241.8 788.5 L242.4 795.2 L243.1 797.5 L243.7 796.2 L244.4 792.6 L245.0 787.2 L245.7 780.9 L246.3 774.5 L247.0 769.2 L247.6 765.6 L248.2 764.3 L248.9 765.5 L249.6 769.0 L250.2 774.2 L250.9 780.3 L251.6 786.4 L252.2 791.6 L252.9 795.0 L253.5 796.3 L254.2 794.0 L254.8 787.5 L255.5 777.7 L256.1 766.3 L256.8 754.8 L257.4 745.0 L258.0 738.5 L258.7 736.2 L259.3 738.8 L260.0 746.1 L260.7 757.0 L261.3 769.8 L262.0 782.6 L262.7 793.5 L263.3 800.8 L264.0 803.3 L264.6 802.2 L265.3 798.9 L265.9 794.1 L266.6 788.3 L267.2 782.6 L267.8 777.7 L268.5 774.5 L269.1 773.3 L269.8 773.9 L270.4 775.5 L271.1 778.0 L271.8 780.9 L272.4 783.8 L273.1 786.2 L273.8 787.9 L274.4 788.5 L275.1 786.5 L275.7 780.8 L276.3 772.3 L277.0 762.3 L277.6 752.4 L278.3 743.9 L278.9 738.2 L279.6 736.2 L280.2 739.1 L280.9 747.3 L281.5 759.6 L282.2 774.1 L282.9 788.5 L283.5 800.8 L284.2 809.0 L284.9 811.9 L285.5 810.5 L286.1 806.5 L286.8 800.6 L287.4 793.6 L288.1 786.6 L288.7 780.6 L289.4 776.7 L290.0 775.3 L290.7 775.7 L291.3 776.7 L292.0 778.3 L292.6 780.2 L293.3 782.0 L294.0 783.6 L294.6 784.7 L295.3 785.0 L295.9 783.1 L296.6 777.5 L297.2 769.2 L297.9 759.4 L298.5 749.6 L299.2 741.3 L299.8 735.8 L300.4 733.8 L301.1 737.4 L301.8 747.6 L302.4 762.8 L303.1 780.8 L303.8 798.7 L304.4 814.0 L305.1 824.2 L305.7 827.7 L306.4 825.5 L307.0 819.1 L307.7 809.6 L308.3 798.3 L309.0 787.1 L309.6 777.5 L310.2 771.2 L310.9 768.9 L311.5 769.6 L312.2 771.4 L312.9 774.1 L313.5 777.4 L314.2 780.6 L314.9 783.3 L315.5 785.1 L316.2 785.8 L316.8 783.4 L317.5 776.7 L318.1 766.6 L318.8 754.7 L319.4 742.8 L320.0 732.7 L320.7 725.9 L321.3 723.6 L322.0 727.9 L322.6 740.3 L323.3 758.9 L324.0 780.9 L324.6 802.8 L325.3 821.4 L326.0 833.9 L326.6 838.2 L327.3 835.2 L327.9 826.4 L328.5 813.3 L329.2 797.8 L329.8 782.4 L330.5 769.3 L331.1 760.5 L331.8 757.5 L332.4 758.7 L333.1 762.4 L333.7 767.8 L334.4 774.2 L335.1 780.6 L335.7 786.0 L336.4 789.6 L337.1 790.9 L337.7 787.8 L338.3 779.0 L339.0 765.9 L339.6 750.4 L340.3 734.9 L340.9 721.8 L341.6 713.0 L342.2 709.9 L342.9 715.1 L343.5 729.8 L344.2 751.9 L344.9 778.0 L345.5 804.0 L346.2 826.1 L346.8 840.9 L347.5 846.0 L348.1 842.3 L348.8 831.5 L349.4 815.4 L350.1 796.4 L350.7 777.4 L351.4 761.3 L352.0 750.5 L352.6 746.7 L353.3 748.6 L354.0 753.9 L354.6 761.8 L355.3 771.1 L356.0 780.5 L356.6 788.4 L357.3 793.7 L357.9 795.5 L358.6 791.9 L359.2 781.6 L359.9 766.1 L360.5 747.8 L361.2 729.6 L361.8 714.1 L362.4 703.8 L363.1 700.1 L363.7 706.0 L364.4 722.6 L365.1 747.6 L365.7 777.0 L366.4 806.4 L367.1 831.3 L367.7 848.0 L368.4 853.8 L369.0 849.4 L369.7 836.6 L370.3 817.5 L370.9 795.0 L371.6 772.5 L372.2 753.5 L372.9 740.7 L373.5 736.2 L374.2 738.7 L374.8 745.8 L375.5 756.3 L376.2 768.8 L376.8 781.3 L377.5 791.8 L378.2 798.9 L378.8 801.4 L379.5 797.1 L380.1 784.8 L380.7 766.5 L381.4 744.9 L382.0 723.3 L382.7 705.0 L383.3 692.7 L384.0 688.4 L384.6 694.9 L385.3 713.2 L385.9 740.7 L386.6 773.1 L387.3 805.5 L387.9 833.0 L388.6 851.3 L389.3 857.8 L389.9 852.8 L390.5 838.5 L391.2 817.2 L391.8 792.1 L392.5 767.0 L393.1 745.7 L393.8 731.5 L394.4 726.5 L395.1 729.6 L395.7 738.6 L396.4 752.0 L397.0 767.8 L397.7 783.7 L398.4 797.1 L399.0 806.0 L399.7 809.2 L400.3 804.3 L401.0 790.5 L401.6 769.7 L402.3 745.3 L402.9 720.8 L403.6 700.1 L404.2 686.2 L404.8 681.3 L405.5 688.2 L406.2 707.6 L406.8 736.6 L407.5 770.9 L408.2 805.2 L408.8 834.2 L409.5 853.6 L410.1 860.4 L410.8 855.0 L411.4 839.5 L412.1 816.4 L412.7 789.1 L413.4 761.8 L414.0 738.6 L414.6 723.1 L415.3 717.7 L415.9 721.7 L416.6 732.9 L417.3 749.8 L417.9 769.7 L418.6 789.6 L419.3 806.4 L419.9 817.7 L420.6 821.6 L421.2 816.5 L421.9 801.8 L422.5 779.9 L423.1 754.1 L423.8 728.2 L424.4 706.3 L425.1 691.6 L425.7 686.5 L426.4 693.1 L427.0 711.8 L427.7 739.9 L428.4 773.1 L429.0 806.2 L429.7 834.3 L430.4 853.1 L431.0 859.7 L431.7 854.1 L432.3 838.2 L432.9 814.4 L433.6 786.4 L434.2 758.3 L434.9 734.5 L435.5 718.6 L436.2 713.1 L436.8 717.4 L437.5 729.9 L438.1 748.5 L438.8 770.4 L439.5 792.3 L440.1 810.9 L440.8 823.4 L441.5 827.7 L442.1 822.6 L442.7 808.0 L443.4 786.2 L444.0 760.4 L444.7 734.6 L445.3 712.8 L446.0 698.2 L446.6 693.1 L447.3 699.1 L447.9 716.2 L448.6 741.9 L449.2 772.1 L449.9 802.4 L450.6 828.0 L451.2 845.1 L451.9 851.2 L452.5 845.6 L453.2 829.7 L453.8 806.0 L454.5 778.0 L455.1 750.0 L455.8 726.2 L456.4 710.3 L457.0 704.8 L457.7 709.6 L458.4 723.3 L459.0 743.9 L459.7 768.2 L460.4 792.5 L461.0 813.1 L461.7 826.8 L462.3 831.6 L463.0 827.0 L463.6 813.8 L464.3 794.1 L464.9 770.8 L465.6 747.5 L466.2 727.7 L466.8 714.5 L467.5 709.9 L468.1 714.8 L468.8 728.7 L469.5 749.5 L470.1 774.1 L470.8 798.6 L471.5 819.4 L472.1 833.3 L472.8 838.2 L473.4 833.1 L474.1 818.6 L474.7 796.8 L475.4 771.1 L476.0 745.5 L476.6 723.7 L477.3 709.1 L477.9 704.0 L478.6 708.8 L479.2 722.4 L479.9 742.8 L480.6 766.9 L481.2 790.9 L481.9 811.3 L482.6 824.9 L483.2 829.7 L483.9 825.7 L484.5 814.1 L485.1 796.9 L485.8 776.6 L486.4 756.3 L487.1 739.1 L487.7 727.6 L488.4 723.6 L489.0 727.4 L489.7 738.3 L490.3 754.7 L491.0 774.1 L491.7 793.4 L492.3 809.8 L493.0 820.7 L493.7 824.6 L494.3 820.0 L494.9 807.0 L495.6 787.6 L496.2 764.7 L496.9 741.7 L497.5 722.3 L498.2 709.3 L498.8 704.8 L499.5 709.3 L500.1 722.2 L500.8 741.5 L501.4 764.3 L502.1 787.1 L502.8 806.4 L503.4 819.3 L504.1 823.8 L504.7 820.8 L505.4 812.0 L506.0 798.8 L506.7 783.3 L507.3 767.8 L508.0 754.7 L508.6 745.9 L509.2 742.8 L509.9 745.3 L510.6 752.3 L511.2 762.7 L511.9 775.0 L512.6 787.4 L513.2 797.8 L513.9 804.8 L514.5 807.2 L515.2 803.5 L515.8 792.7 L516.5 776.6 L517.1 757.6 L517.8 738.6 L518.4 722.5 L519.0 711.7 L519.7 707.9 L520.3 712.2 L521.0 724.3 L521.7 742.4 L522.3 763.8 L523.0 785.2 L523.7 803.3 L524.3 815.4 L525.0 819.7 L525.6 817.2 L526.3 810.1 L526.9 799.6 L527.5 787.1 L528.2 774.6 L528.8 764.1 L529.5 757.0 L530.1 754.5 L530.8 755.9 L531.4 759.9 L532.1 765.8 L532.8 772.7 L533.4 779.7 L534.1 785.6 L534.8 789.5 L535.4 790.9 L536.1 788.0 L536.7 779.6 L537.3 767.1 L538.0 752.3 L538.6 737.6 L539.3 725.1 L539.9 716.7 L540.6 713.8 L541.2 717.8 L541.9 729.0 L542.5 746.0 L543.2 765.9 L543.9 785.8 L544.5 802.7 L545.2 814.0 L545.9 818.0 L546.5 815.7 L547.1 809.3 L547.8 799.6 L548.4 788.2 L549.1 776.8 L549.7 767.2 L550.4 760.7 L551.0 758.4 L551.7 759.3 L552.3 761.7 L553.0 765.3 L553.6 769.5 L554.3 773.8 L555.0 777.4 L555.6 779.8 L556.3 780.6 L556.9 778.2 L557.6 771.3 L558.2 761.0 L558.9 748.8 L559.5 736.6 L560.2 726.3 L560.8 719.4 L561.4 717.0 L562.1 721.2 L562.8 733.2 L563.4 751.2 L564.1 772.4 L564.8 793.5 L565.4 811.5 L566.1 823.5 L566.7 827.7 L567.4 825.0 L568.0 817.0 L568.7 805.1 L569.3 791.1 L570.0 777.1 L570.6 765.3 L571.2 757.3 L571.9 754.5 L572.5 755.4 L573.2 757.9 L573.9 761.5 L574.5 765.9 L575.2 770.2 L575.9 773.9 L576.5 776.4 L577.2 777.2 L577.8 775.0 L578.5 768.5 L579.1 758.9 L579.8 747.5 L580.4 736.1 L581.0 726.4 L581.7 720.0 L582.3 717.7 L583.0 722.1 L583.6 734.5 L584.3 753.1 L585.0 775.0 L585.6 797.0 L586.3 815.6 L587.0 828.0 L587.6 832.4 L588.3 829.1 L588.9 819.7 L589.5 805.7 L590.2 789.2 L590.8 772.7 L591.5 758.6 L592.1 749.3 L592.8 746.0 L593.4 747.4 L594.1 751.4 L594.7 757.4 L595.4 764.5 L596.1 771.6 L596.7 777.7 L597.4 781.7 L598.1 783.1 L598.7 780.3 L599.3 772.5 L600.0 760.7 L600.6 746.9 L601.3 733.0 L601.9 721.2 L602.6 713.4 L603.2 710.6 L603.9 715.5 L604.5 729.4 L605.2 750.2 L605.8 774.7 L606.5 799.2 L607.2 820.0 L607.8 833.8 L608.5 838.7 L609.1 834.9 L609.8 823.9 L610.4 807.4 L611.1 788.0 L611.7 768.5 L612.4 752.1 L613.0 741.1 L613.6 737.2 L614.3 739.1 L615.0 744.5 L615.6 752.6 L616.3 762.1 L617.0 771.6 L617.6 779.7 L618.3 785.1 L618.9 787.0 L619.6 783.9 L620.2 775.0 L620.9 761.8 L621.5 746.1 L622.2 730.5 L622.8 717.2 L623.4 708.4 L624.1 705.3 L624.7 710.4 L625.4 725.1 L626.1 747.1 L626.7 773.1 L627.4 799.0 L628.1 821.0 L628.7 835.8 L629.4 840.9 L630.0 836.7 L630.7 824.7 L631.3 806.8 L631.9 785.6 L632.6 764.5 L633.2 746.6 L633.9 734.6 L634.5 730.4 L635.2 732.8 L635.8 739.6 L636.5 749.9 L637.2 762.0 L637.8 774.1 L638.5 784.3 L639.2 791.2 L639.8 793.6 L640.5 790.2 L641.1 780.5 L641.7 765.9 L642.4 748.8 L643.0 731.7 L643.7 717.1 L644.3 707.4 L645.0 704.0 L645.6 709.1 L646.3 723.5 L646.9 745.1 L647.6 770.5 L648.3 796.0 L648.9 817.5 L649.6 832.0 L650.3 837.0 L650.9 832.8 L651.5 820.8 L652.2 802.9 L652.8 781.7 L653.5 760.6 L654.1 742.7 L654.8 730.7 L655.4 726.5 L656.1 729.2 L656.7 737.0 L657.4 748.6 L658.0 762.3 L658.7 776.1 L659.4 787.7 L660.0 795.5 L660.7 798.2 L661.3 794.6 L662.0 784.4 L662.6 769.1 L663.3 751.1 L663.9 733.1 L664.6 717.8 L665.2 707.6 L665.8 704.0 L666.5 709.0 L667.2 723.0 L667.8 744.0 L668.5 768.8 L669.2 793.6 L669.8 814.6 L670.5 828.7 L671.1 833.6 L671.8 829.4 L672.4 817.5 L673.1 799.6 L673.7 778.6 L674.4 757.5 L675.0 739.7 L675.6 727.7 L676.3 723.6 L676.9 726.6 L677.6 735.2 L678.3 748.2 L678.9 763.4 L679.6 778.7 L680.3 791.7 L680.9 800.3 L681.6 803.3 L682.2 799.6 L682.9 788.8 L683.5 772.7 L684.1 753.7 L684.8 734.7 L685.4 718.6 L686.1 707.8 L686.7 704.0 L687.4 708.8 L688.0 722.4 L688.7 742.7 L689.4 766.7 L690.0 790.7 L690.7 811.1 L691.4 824.7 L692.0 829.4 L692.7 825.3 L693.3 813.4 L693.9 795.6 L694.6 774.5 L695.2 753.5 L695.9 735.7 L696.5 723.8 L697.2 719.6 L697.8 722.9 L698.5 732.2 L699.1 746.1 L699.8 762.5 L700.5 778.9 L701.1 792.7 L701.8 802.0 L702.5 805.3 L703.1 801.4 L703.7 790.2 L704.4 773.4 L705.0 753.7 L705.7 733.9 L706.3 717.2 L707.0 706.0 L707.6 702.1 L708.3 706.6 L708.9 719.6 L709.6 739.1 L710.2 762.0 L710.9 784.9 L711.6 804.3 L712.2 817.3 L712.9 821.9 L713.5 817.8 L714.2 806.2 L714.8 788.9 L715.5 768.4 L716.1 748.0 L716.8 730.7 L717.4 719.1 L718.0 715.0 L718.7 718.4 L719.4 728.2 L720.0 742.9 L720.7 760.2 L721.4 777.4 L722.0 792.1 L722.7 801.9 L723.3 805.3 L724.0 801.5 L724.6 790.6 L725.3 774.4 L725.9 755.3 L726.6 736.1 L727.2 719.9 L727.8 709.1 L728.5 705.3 L729.1 709.3 L729.8 720.8 L730.5 737.9 L731.1 758.2 L731.8 778.5 L732.5 795.6 L733.1 807.1 L733.8 811.1 L734.4 807.3 L735.1 796.5 L735.7 780.3 L736.3 761.1 L737.0 742.0 L737.6 725.8 L738.3 714.9 L738.9 711.1 L739.6 714.7 L740.2 725.0 L740.9 740.4 L741.6 758.6 L742.2 776.7 L742.9 792.1 L743.6 802.4 L744.2 806.0 L744.9 802.4 L745.5 792.2 L746.1 777.0 L746.8 758.9 L747.4 740.9 L748.1 725.6 L748.7 715.4 L749.4 711.8 L750.0 715.5 L750.7 725.8 L751.3 741.3 L752.0 759.5 L752.7 777.8 L753.3 793.3 L754.0 803.6 L754.7 807.2 L755.3 803.7 L755.9 793.5 L756.6 778.2 L757.2 760.2 L757.9 742.1 L758.5 726.9 L759.2 716.6 L759.8 713.1 L760.5 716.6 L761.1 726.9 L761.8 742.1 L762.4 760.2 L763.1 778.2 L763.8 793.5 L764.4 803.7 L765.1 807.2 L765.7 804.2 L766.4 795.6 L767.0 782.6 L767.7 767.3 L768.3 752.1 L769.0 739.1 L769.6 730.5 L770.2 727.5 L770.9 730.3 L771.6 738.4 L772.2 750.5 L772.9 764.8 L773.6 779.1 L774.2 791.2 L774.9 799.3 L775.5 802.1 L776.2 799.1 L776.8 790.6 L777.5 777.9 L778.1 762.8 L778.8 747.8 L779.4 735.1 L780.0 726.5 L780.7 723.6 L781.3 726.8 L782.0 736.2 L782.7 750.2 L783.3 766.7 L784.0 783.3 L784.7 797.3 L785.3 806.6 L786.0 809.9 L786.6 807.2 L787.3 799.4 L787.9 787.8 L788.5 774.1 L789.2 760.3 L789.8 748.7 L790.5 740.9 L791.1 738.2 L791.8 740.7 L792.4 748.0 L793.1 758.9 L793.8 771.7 L794.4 784.6 L795.1 795.5 L795.8 802.7 L796.4 805.3 L797.1 801.8 L797.7 791.8 L798.3 776.8 L799.0 759.2 L799.6 741.5 L800.3 726.6 L800.9 716.6 L801.6 713.1 L802.2 716.8 L802.9 727.4 L803.5 743.3 L804.2 762.1 L804.9 780.9 L805.5 796.8 L806.2 807.4 L806.9 811.1 L807.5 808.5 L808.1 801.1 L808.8 790.1 L809.4 777.0 L810.1 763.9 L810.7 752.8 L811.4 745.4 L812.0 742.8 L812.7 744.7 L813.3 750.1 L814.0 758.1 L814.6 767.6 L815.3 777.1 L816.0 785.1 L816.6 790.5 L817.3 792.4 L817.9 789.5 L818.6 781.3 L819.2 769.1 L819.9 754.7 L820.5 740.2 L821.2 728.0 L821.8 719.8 L822.4 717.0 L823.1 720.2" fill="none" stroke="#9394FF" stroke-width="1.5" stroke-opacity=".88" stroke-linejoin="round"/>
<path d="M180.3 611.1 L181.0 633.4 L181.7 655.7 L182.3 674.5 L182.9 687.2 L183.6 691.6 L184.2 687.7 L184.9 676.7 L185.5 660.2 L186.2 640.7 L186.8 621.2 L187.5 604.7 L188.1 593.7 L188.8 589.8 L189.5 595.4 L190.1 611.3 L190.8 635.0 L191.4 663.0 L192.1 691.1 L192.7 714.8 L193.4 730.7 L194.0 736.2 L194.7 730.4 L195.3 713.7 L196.0 688.8 L196.6 659.4 L197.3 630.0 L197.9 605.0 L198.6 588.4 L199.2 582.5 L199.9 587.0 L200.5 599.6 L201.2 618.6 L201.9 641.0 L202.5 663.3 L203.2 682.3 L203.8 694.9 L204.5 699.4 L205.1 695.2 L205.8 683.4 L206.4 665.6 L207.1 644.6 L207.7 623.7 L208.4 605.9 L209.0 594.0 L209.7 589.8 L210.3 595.1 L211.0 610.0 L211.6 632.3 L212.3 658.6 L213.0 685.0 L213.6 707.3 L214.3 722.2 L214.9 727.5 L215.6 721.9 L216.2 706.2 L216.9 682.7 L217.5 655.0 L218.2 627.3 L218.8 603.7 L219.5 588.0 L220.1 582.5 L220.8 587.5 L221.4 601.7 L222.1 623.0 L222.7 648.2 L223.4 673.3 L224.0 694.6 L224.7 708.8 L225.4 713.8 L226.0 709.6 L226.7 697.8 L227.3 680.1 L228.0 659.1 L228.6 638.2 L229.3 620.5 L229.9 608.6 L230.6 604.5 L231.2 608.6 L231.9 620.4 L232.5 638.0 L233.2 658.8 L233.8 679.5 L234.5 697.2 L235.1 708.9 L235.8 713.1 L236.4 708.1 L237.1 693.9 L237.7 672.8 L238.4 647.8 L239.0 622.8 L239.7 601.6 L240.3 587.5 L241.0 582.5 L241.7 587.8 L242.3 603.0 L243.0 625.7 L243.6 652.4 L244.3 679.2 L244.9 701.9 L245.6 717.0 L246.2 722.3 L246.9 718.2 L247.5 706.3 L248.2 688.4 L248.8 667.4 L249.5 646.4 L250.1 628.6 L250.8 616.7 L251.4 612.5 L252.1 615.8 L252.8 625.0 L253.4 638.7 L254.1 655.0 L254.7 671.2 L255.4 685.0 L256.0 694.2 L256.7 697.4 L257.3 693.1 L258.0 680.6 L258.6 662.0 L259.3 640.0 L259.9 618.0 L260.6 599.4 L261.2 586.9 L261.9 582.5 L262.5 588.4 L263.2 605.0 L263.8 630.0 L264.5 659.4 L265.2 688.8 L265.8 713.7 L266.5 730.4 L267.1 736.2 L267.8 731.7 L268.4 718.9 L269.1 699.8 L269.7 677.2 L270.4 654.6 L271.0 635.4 L271.7 622.6 L272.3 618.1 L273.0 620.7 L273.6 628.1 L274.3 639.2 L274.9 652.3 L275.6 665.4 L276.2 676.5 L276.9 683.9 L277.6 686.5 L278.2 682.5 L278.9 671.2 L279.5 654.4 L280.2 634.5 L280.8 614.6 L281.5 597.7 L282.1 586.5 L282.8 582.5 L283.4 589.0 L284.1 607.4 L284.7 635.0 L285.4 667.6 L286.0 700.1 L286.7 727.7 L287.3 746.1 L288.0 752.6 L288.6 747.4 L289.3 732.7 L289.9 710.7 L290.6 684.8 L291.2 658.8 L291.9 636.8 L292.6 622.1 L293.2 616.9 L293.9 619.2 L294.5 625.8 L295.2 635.7 L295.8 647.3 L296.5 658.9 L297.1 668.8 L297.8 675.4 L298.4 677.7 L299.1 674.1 L299.7 663.7 L300.4 648.3 L301.0 630.1 L301.7 611.9 L302.3 596.5 L303.0 586.1 L303.6 582.5 L304.3 589.7 L304.9 610.3 L305.6 641.0 L306.3 677.3 L306.9 713.6 L307.6 744.3 L308.2 764.9 L308.9 772.1 L309.5 765.8 L310.2 747.9 L310.8 721.1 L311.5 689.5 L312.1 657.9 L312.8 631.1 L313.4 613.2 L314.1 606.9 L314.7 609.4 L315.4 616.6 L316.0 627.3 L316.7 639.9 L317.4 652.5 L318.0 663.2 L318.7 670.3 L319.3 672.8 L320.0 669.4 L320.6 659.6 L321.3 644.9 L321.9 627.7 L322.6 610.4 L323.2 595.7 L323.9 586.0 L324.5 582.5 L325.2 590.5 L325.8 613.1 L326.5 647.1 L327.1 687.1 L327.8 727.1 L328.4 761.0 L329.1 783.7 L329.8 791.6 L330.4 783.9 L331.1 762.1 L331.7 729.3 L332.4 690.7 L333.0 652.1 L333.7 619.4 L334.3 597.5 L335.0 589.8 L335.6 593.1 L336.3 602.3 L336.9 616.0 L337.6 632.3 L338.2 648.5 L338.9 662.3 L339.5 671.5 L340.2 674.8 L340.8 671.2 L341.5 661.2 L342.1 646.3 L342.8 628.6 L343.4 611.0 L344.1 596.0 L344.8 586.0 L345.4 582.5 L346.1 590.7 L346.7 614.0 L347.4 648.9 L348.0 690.0 L348.7 731.1 L349.3 766.0 L350.0 789.3 L350.6 797.5 L351.3 789.6 L351.9 767.1 L352.6 733.4 L353.2 693.7 L353.9 653.9 L354.5 620.2 L355.2 597.7 L355.8 589.8 L356.5 593.1 L357.1 602.6 L357.8 616.7 L358.5 633.3 L359.1 649.9 L359.8 664.0 L360.4 673.4 L361.1 676.7 L361.7 673.1 L362.4 662.9 L363.0 647.6 L363.7 629.6 L364.3 611.6 L365.0 596.3 L365.6 586.1 L366.3 582.5 L366.9 591.0 L367.6 615.1 L368.2 651.3 L368.9 693.9 L369.6 736.5 L370.2 772.7 L370.9 796.8 L371.5 805.3 L372.2 797.1 L372.8 773.7 L373.5 738.8 L374.1 697.6 L374.8 656.3 L375.4 621.4 L376.1 598.0 L376.7 589.8 L377.4 593.0 L378.0 601.9 L378.7 615.2 L379.3 631.0 L380.0 646.7 L380.6 660.0 L381.3 668.9 L382.0 672.1 L382.6 668.7 L383.3 659.0 L383.9 644.4 L384.6 627.3 L385.2 610.2 L385.9 595.6 L386.5 585.9 L387.2 582.5 L387.8 590.8 L388.5 614.3 L389.1 649.5 L389.8 691.0 L390.4 732.5 L391.1 767.7 L391.7 791.2 L392.4 799.4 L393.0 791.5 L393.7 768.7 L394.3 734.7 L395.0 694.6 L395.6 654.5 L396.3 620.5 L396.9 597.8 L397.6 589.8 L398.3 593.1 L398.9 602.4 L399.6 616.4 L400.2 632.8 L400.9 649.2 L401.5 663.1 L402.2 672.5 L402.8 675.7 L403.5 672.2 L404.1 662.1 L404.8 647.0 L405.4 629.1 L406.1 611.3 L406.7 596.2 L407.4 586.1 L408.0 582.5 L408.7 590.3 L409.3 612.3 L410.0 645.3 L410.7 684.1 L411.3 723.0 L412.0 756.0 L412.6 778.0 L413.3 785.8 L413.9 778.3 L414.6 757.1 L415.2 725.3 L415.9 687.8 L416.5 650.3 L417.2 618.5 L417.8 597.3 L418.5 589.8 L419.1 593.7 L419.8 604.6 L420.4 620.9 L421.1 640.1 L421.8 659.3 L422.4 675.6 L423.1 686.5 L423.7 690.4 L424.4 686.3 L425.0 674.6 L425.7 657.1 L426.3 636.4 L427.0 615.8 L427.6 598.3 L428.3 586.6 L428.9 582.5 L429.6 589.8 L430.2 610.5 L430.9 641.4 L431.5 677.9 L432.2 714.4 L432.8 745.4 L433.5 766.1 L434.2 773.3 L434.8 766.3 L435.5 746.5 L436.1 716.7 L436.8 681.6 L437.4 646.5 L438.1 616.7 L438.7 596.8 L439.4 589.8 L440.0 594.3 L440.7 606.8 L441.3 625.7 L442.0 647.9 L442.6 670.1 L443.3 689.0 L443.9 701.6 L444.6 706.0 L445.2 701.3 L445.9 687.9 L446.6 667.9 L447.2 644.3 L447.9 620.6 L448.5 600.6 L449.2 587.2 L449.8 582.5 L450.5 589.1 L451.1 607.7 L451.8 635.6 L452.4 668.5 L453.1 701.4 L453.7 729.3 L454.4 748.0 L455.0 754.5 L455.7 748.3 L456.3 730.4 L457.0 703.7 L457.6 672.2 L458.3 640.7 L458.9 614.0 L459.6 596.1 L460.2 589.8 L460.9 594.3 L461.5 607.1 L462.2 626.3 L462.9 648.9 L463.5 671.5 L464.2 690.6 L464.8 703.4 L465.5 707.9 L466.1 703.2 L466.8 689.6 L467.4 669.2 L468.1 645.2 L468.7 621.2 L469.4 600.9 L470.0 587.3 L470.7 582.5 L471.3 588.6 L472.0 606.0 L472.6 632.0 L473.3 662.7 L474.0 693.3 L474.6 719.4 L475.3 736.7 L475.9 742.8 L476.6 737.0 L477.2 720.4 L477.9 695.6 L478.5 666.3 L479.2 637.1 L479.8 612.2 L480.5 595.7 L481.1 589.8 L481.8 594.9 L482.4 609.1 L483.1 630.5 L483.7 655.7 L484.4 680.9 L485.1 702.3 L485.7 716.6 L486.4 721.6 L487.0 716.3 L487.7 701.2 L488.3 678.7 L489.0 652.1 L489.6 625.4 L490.3 602.9 L490.9 587.8 L491.6 582.5 L492.2 586.0 L492.9 595.7 L493.5 610.4 L494.2 627.7 L494.8 644.9 L495.5 659.6 L496.1 669.4 L496.8 672.8 L497.4 669.6 L498.1 660.7 L498.7 647.2 L499.4 631.3 L500.0 615.4 L500.7 602.0 L501.3 593.0 L502.0 589.8 L502.7 595.6 L503.3 612.0 L504.0 636.5 L504.6 665.5 L505.3 694.4 L505.9 719.0 L506.6 735.4 L507.2 741.1 L507.9 735.1 L508.5 717.9 L509.2 692.2 L509.8 661.8 L510.5 631.5 L511.1 605.7 L511.8 588.6 L512.4 582.5 L513.1 587.1 L513.8 600.0 L514.4 619.4 L515.1 642.3 L515.7 665.2 L516.4 684.6 L517.0 697.5 L517.7 702.1 L518.3 697.8 L519.0 685.6 L519.6 667.4 L520.3 646.0 L520.9 624.5 L521.6 606.3 L522.2 594.1 L522.9 589.8 L523.5 596.3 L524.2 614.8 L524.8 642.5 L525.5 675.1 L526.2 707.8 L526.8 735.4 L527.5 753.9 L528.1 760.4 L528.8 753.6 L529.4 734.3 L530.1 705.5 L530.7 671.5 L531.4 637.4 L532.0 608.6 L532.7 589.3 L533.3 582.5 L534.0 586.6 L534.6 598.3 L535.3 615.8 L535.9 636.4 L536.6 657.1 L537.2 674.6 L537.9 686.3 L538.6 690.4 L539.2 686.5 L539.9 675.6 L540.5 659.3 L541.2 640.1 L541.8 620.9 L542.5 604.6 L543.1 593.7 L543.8 589.8 L544.4 596.7 L545.1 616.2 L545.7 645.5 L546.4 680.0 L547.0 714.5 L547.7 743.7 L548.3 763.3 L549.0 770.2 L549.6 763.0 L550.3 742.7 L551.0 712.2 L551.6 676.3 L552.2 640.4 L552.9 610.0 L553.6 589.7 L554.2 582.5 L554.9 586.2 L555.5 596.6 L556.2 612.2 L556.8 630.6 L557.5 649.0 L558.1 664.6 L558.8 675.0 L559.4 678.7 L560.1 675.3 L560.7 665.6 L561.4 651.2 L562.0 634.2 L562.7 617.3 L563.3 602.8 L564.0 593.2 L564.6 589.8 L565.3 597.3 L566.0 618.5 L566.6 650.3 L567.3 687.8 L567.9 725.3 L568.6 757.1 L569.2 778.3 L569.9 785.8 L570.5 778.0 L571.2 756.0 L571.8 723.0 L572.5 684.1 L573.1 645.3 L573.8 612.3 L574.4 590.3 L575.1 582.5 L575.7 586.1 L576.4 596.2 L577.0 611.3 L577.7 629.1 L578.4 647.0 L579.0 662.1 L579.7 672.2 L580.3 675.7 L581.0 672.5 L581.6 663.1 L582.3 649.2 L582.9 632.8 L583.6 616.4 L584.2 602.4 L584.9 593.1 L585.5 589.8 L586.2 597.3 L586.8 618.4 L587.5 650.1 L588.1 687.4 L588.8 724.8 L589.5 756.5 L590.1 777.6 L590.8 785.0 L591.4 777.3 L592.1 755.4 L592.7 722.5 L593.4 683.8 L594.0 645.0 L594.7 612.2 L595.3 590.2 L596.0 582.5 L596.6 585.9 L597.3 595.6 L597.9 610.2 L598.6 627.3 L599.2 644.4 L599.9 659.0 L600.5 668.7 L601.2 672.1 L601.8 668.9 L602.5 660.0 L603.1 646.7 L603.8 631.0 L604.4 615.2 L605.1 601.9 L605.8 593.0 L606.4 589.8 L607.1 597.2 L607.7 618.2 L608.4 649.7 L609.0 686.8 L609.7 723.9 L610.3 755.4 L611.0 776.4 L611.6 783.8 L612.3 776.2 L612.9 754.3 L613.6 721.7 L614.2 683.2 L614.9 644.7 L615.5 612.0 L616.2 590.2 L616.8 582.5 L617.5 585.7 L618.1 594.9 L618.8 608.6 L619.5 624.7 L620.1 640.9 L620.8 654.6 L621.4 663.7 L622.1 666.9 L622.7 664.0 L623.4 655.7 L624.0 643.1 L624.7 628.4 L625.3 613.6 L626.0 601.1 L626.6 592.8 L627.3 589.8 L627.9 596.9 L628.6 617.0 L629.2 647.1 L629.9 682.6 L630.6 718.0 L631.2 748.1 L631.9 768.2 L632.5 775.3 L633.2 767.9 L633.8 747.1 L634.5 715.8 L635.1 678.9 L635.8 642.0 L636.4 610.7 L637.1 589.9 L637.7 582.5 L638.4 586.1 L639.0 596.2 L639.7 611.3 L640.3 629.1 L641.0 647.0 L641.6 662.1 L642.3 672.2 L643.0 675.7 L643.6 672.5 L644.3 663.1 L644.9 649.2 L645.6 632.8 L646.2 616.4 L646.9 602.4 L647.5 593.1 L648.2 589.8 L648.8 596.5 L649.5 615.4 L650.1 643.7 L650.8 677.1 L651.4 710.5 L652.1 738.8 L652.7 757.7 L653.4 764.3 L654.0 757.4 L654.7 737.7 L655.4 708.2 L656.0 673.4 L656.6 638.6 L657.3 609.1 L658.0 589.4 L658.6 582.5 L659.3 586.1 L659.9 596.3 L660.6 611.6 L661.2 629.6 L661.9 647.6 L662.5 662.9 L663.2 673.1 L663.8 676.7 L664.5 673.4 L665.1 664.0 L665.8 649.9 L666.4 633.3 L667.1 616.7 L667.7 602.6 L668.4 593.1 L669.0 589.8 L669.7 596.1 L670.3 614.0 L671.0 640.7 L671.7 672.2 L672.3 703.7 L673.0 730.4 L673.6 748.3 L674.3 754.5 L674.9 748.0 L675.6 729.3 L676.2 701.4 L676.9 668.5 L677.5 635.6 L678.2 607.7 L678.8 589.1 L679.5 582.5 L680.1 586.4 L680.8 597.5 L681.4 614.0 L682.1 633.5 L682.8 653.0 L683.4 669.6 L684.1 680.6 L684.7 684.5 L685.4 680.9 L686.0 670.6 L686.7 655.3 L687.3 637.2 L688.0 619.1 L688.6 603.7 L689.3 593.4 L689.9 589.8 L690.6 595.6 L691.2 612.0 L691.9 636.5 L692.5 665.5 L693.2 694.4 L693.9 719.0 L694.5 735.4 L695.2 741.1 L695.8 735.1 L696.5 717.9 L697.1 692.2 L697.8 661.8 L698.4 631.5 L699.1 605.7 L699.7 588.6 L700.4 582.5 L701.0 586.8 L701.7 599.2 L702.3 617.6 L703.0 639.4 L703.6 661.1 L704.3 679.6 L704.9 691.9 L705.6 696.2 L706.2 692.2 L706.9 680.6 L707.6 663.4 L708.2 643.0 L708.9 622.7 L709.5 605.4 L710.2 593.9 L710.8 589.8 L711.5 594.9 L712.1 609.4 L712.8 631.1 L713.4 656.7 L714.1 682.3 L714.7 704.0 L715.4 718.5 L716.0 723.6 L716.7 718.2 L717.3 702.9 L718.0 680.0 L718.6 653.0 L719.3 626.1 L719.9 603.2 L720.6 587.9 L721.2 582.5 L721.9 586.3 L722.5 596.9 L723.2 612.8 L723.9 631.6 L724.5 650.3 L725.2 666.2 L725.8 676.9 L726.5 680.6 L727.1 677.2 L727.8 667.3 L728.4 652.6 L729.1 635.2 L729.7 617.9 L730.4 603.1 L731.0 593.3 L731.7 589.8 L732.3 594.4 L733.0 607.3 L733.6 626.7 L734.3 649.5 L735.0 672.3 L735.6 691.7 L736.3 704.6 L736.9 709.2 L737.6 704.3 L738.2 690.6 L738.9 670.1 L739.5 645.8 L740.2 621.6 L740.8 601.1 L741.5 587.3 L742.1 582.5 L742.8 586.8 L743.4 599.2 L744.1 617.6 L744.7 639.4 L745.4 661.1 L746.0 679.6 L746.7 691.9 L747.4 696.2 L748.0 692.2 L748.7 680.6 L749.3 663.4 L750.0 643.0 L750.6 622.7 L751.3 605.4 L751.9 593.9 L752.6 589.8 L753.2 593.9 L753.9 605.6 L754.5 623.1 L755.2 643.6 L755.8 664.2 L756.5 681.7 L757.1 693.3 L757.8 697.4 L758.4 693.1 L759.1 680.6 L759.8 662.0 L760.4 640.0 L761.0 618.0 L761.7 599.4 L762.4 586.9 L763.0 582.5 L763.7 587.0 L764.3 599.6 L765.0 618.6 L765.6 641.0 L766.3 663.3 L766.9 682.3 L767.6 694.9 L768.2 699.4 L768.9 695.2 L769.5 683.4 L770.2 665.6 L770.8 644.6 L771.5 623.7 L772.1 605.9 L772.8 594.0 L773.4 589.8 L774.1 594.0 L774.8 605.9 L775.4 623.7 L776.1 644.6 L776.7 665.6 L777.4 683.4 L778.0 695.2 L778.7 699.4 L779.3 694.9 L780.0 682.3 L780.6 663.3 L781.3 641.0 L781.9 618.6 L782.6 599.6 L783.2 587.0 L783.9 582.5 L784.5 587.9 L785.2 603.1 L785.8 625.8 L786.5 652.7 L787.2 679.5 L787.8 702.3 L788.5 717.5 L789.1 722.8 L789.8 717.8 L790.4 703.3 L791.1 681.8 L791.7 656.3 L792.4 630.9 L793.0 609.3 L793.7 594.9 L794.3 589.8 L795.0 593.7 L795.6 604.6 L796.3 620.9 L796.9 640.1 L797.6 659.3 L798.2 675.6 L798.9 686.5 L799.6 690.4 L800.2 686.3 L800.9 674.6 L801.5 657.1 L802.2 636.4 L802.8 615.8 L803.5 598.3 L804.1 586.6 L804.8 582.5 L805.4 588.1 L806.1 604.0 L806.7 627.9 L807.4 656.0 L808.0 684.1 L808.7 707.9 L809.3 723.8 L810.0 729.4 L810.6 724.1 L811.3 709.0 L812.0 686.3 L812.6 659.6 L813.2 632.9 L813.9 610.3 L814.6 595.2 L815.2 589.8 L815.9 593.1 L816.5 602.6 L817.2 616.7 L817.8 633.3 L818.5 649.9 L819.1 664.0 L819.8 673.4" fill="none" stroke="#00C9FF" stroke-width="1.5" stroke-opacity=".85" stroke-linejoin="round"/>
</g>
<text class="ax" x="139.3" y="862.2">0</text>
<text class="ax" x="139.3" y="813.4">2</text>
<text class="ax" x="139.3" y="764.6">4</text>
<text class="ax" x="139.3" y="715.8">6</text>
<text class="ax" x="139.3" y="667.0">8</text>
<text class="ax" x="139.3" y="618.2">10</text>
<path d="M908.1 835.5 H1187.7 M908.1 774.5 H1187.7 M908.1 713.5 H1187.7 M908.1 652.5 H1187.7 M927.5 603.5 V879.5 M1068.5 603.5 V879.5 M908.5 603.5 V879.5" stroke="#3a3a49" stroke-width="1" fill="none"/>
<path d="M908.1 669.4 L909.3 669.4 L909.3 669.4 L910.4 669.4 L910.4 637.3 L911.6 637.3 L911.6 635.8 L912.8 635.8 L912.8 634.3 L913.9 634.3 L913.9 635.8 L915.1 635.8 L915.1 635.8 L916.3 635.8 L916.3 625.1 L917.4 625.1 L917.4 625.1 L918.6 625.1 L918.6 664.7 L919.8 664.7 L919.8 664.7 L920.9 664.7 L920.9 628.2 L922.1 628.2 L922.1 628.2 L923.2 628.2 L923.2 625.1 L924.4 625.1 L924.4 628.2 L925.6 628.2 L925.6 634.3 L926.7 634.3 L926.7 635.8 L927.9 635.8 L927.9 656.6 L929.1 656.6 L929.1 656.6 L930.2 656.6 L930.2 628.2 L931.4 628.2 L931.4 625.1 L932.6 625.1 L932.6 629.7 L933.7 629.7 L933.7 628.2 L934.9 628.2 L934.9 674.5 L936.1 674.5 L936.1 674.5 L937.2 674.5 L937.2 674.5 L938.4 674.5 L938.4 674.5 L939.6 674.5 L939.6 674.5 L940.7 674.5 L940.7 674.5 L941.9 674.5 L941.9 629.7 L943.0 629.7 L943.1 629.7 L944.2 629.7 L944.2 625.1 L945.4 625.1 L945.4 634.3 L946.5 634.3 L946.5 634.3 L947.7 634.3 L947.7 634.3 L948.9 634.3 L948.9 634.3 L950.0 634.3 L950.0 634.3 L951.2 634.3 L951.2 635.8 L952.4 635.8 L952.4 635.8 L953.5 635.8 L953.5 635.8 L954.7 635.8 L954.7 625.1 L955.9 625.1 L955.9 625.1 L957.0 625.1 L957.0 625.1 L958.2 625.1 L958.2 687.4 L959.4 687.4 L959.4 628.2 L960.5 628.2 L960.5 623.6 L961.7 623.6 L961.7 623.6 L962.9 623.6 L962.9 623.6 L964.0 623.6 L964.0 623.6 L965.2 623.6 L965.2 637.3 L966.4 637.3 L966.4 637.3 L967.5 637.3 L967.5 672.8 L968.7 672.8 L968.7 623.6 L969.8 623.6 L969.8 629.7 L971.0 629.7 L971.0 625.1 L972.2 625.1 L972.2 625.1 L973.3 625.1 L973.3 625.1 L974.5 625.1 L974.5 623.6 L975.7 623.6 L975.7 637.3 L976.8 637.3 L976.8 637.3 L978.0 637.3 L978.0 637.3 L979.2 637.3 L979.2 637.3 L980.3 637.3 L980.3 637.3 L981.5 637.3 L981.5 634.3 L982.7 634.3 L982.7 634.3 L983.8 634.3 L983.8 674.5 L985.0 674.5 L985.0 674.5 L986.2 674.5 L986.2 637.3 L987.3 637.3 L987.3 635.8 L988.5 635.8 L988.5 635.8 L989.6 635.8 L989.6 695.5 L990.8 695.5 L990.8 695.5 L992.0 695.5 L992.0 634.3 L993.1 634.3 L993.1 623.6 L994.3 623.6 L994.3 623.6 L995.5 623.6 L995.5 623.6 L996.6 623.6 L996.6 623.6 L997.8 623.6 L997.8 623.6 L999.0 623.6 L999.0 623.6 L1000.1 623.6 L1000.1 637.3 L1001.3 637.3 L1001.3 612.7 L1002.5 612.7 L1002.5 637.3 L1003.6 637.3 L1003.6 637.3 L1004.8 637.3 L1004.8 637.3 L1006.0 637.3 L1006.0 637.3 L1007.1 637.3 L1007.1 634.3 L1008.3 634.3 L1008.3 637.3 L1009.5 637.3 L1009.5 637.3 L1010.6 637.3 L1010.6 634.3 L1011.8 634.3 L1011.8 656.6 L1013.0 656.6 L1013.0 634.3 L1014.1 634.3 L1014.1 623.6 L1015.3 623.6 L1015.3 637.3 L1016.4 637.3 L1016.4 637.3 L1017.6 637.3 L1017.6 646.9 L1018.8 646.9 L1018.8 646.9 L1019.9 646.9 L1019.9 628.2 L1021.1 628.2 L1021.1 623.6 L1022.3 623.6 L1022.3 623.6 L1023.4 623.6 L1023.4 623.6 L1024.6 623.6 L1024.6 637.3 L1025.8 637.3 L1025.8 629.7 L1026.9 629.7 L1026.9 629.7 L1028.1 629.7 L1028.1 634.3 L1029.3 634.3 L1029.3 634.3 L1030.4 634.3 L1030.4 634.3 L1031.6 634.3 L1031.6 635.8 L1032.8 635.8 L1032.8 635.8 L1033.9 635.8 L1033.9 623.6 L1035.1 623.6 L1035.1 625.1 L1036.2 625.1 L1036.2 628.2 L1037.4 628.2 L1037.4 671.2 L1038.6 671.2 L1038.6 671.2 L1039.7 671.2 L1039.7 637.3 L1040.9 637.3 L1040.9 637.3 L1042.1 637.3 L1042.1 637.3 L1043.2 637.3 L1043.2 629.7 L1044.4 629.7 L1044.4 628.2 L1045.6 628.2 L1045.6 628.2 L1046.7 628.2 L1046.7 623.6 L1047.9 623.6 L1047.9 623.6 L1049.1 623.6 L1049.1 623.6 L1050.2 623.6 L1050.2 628.2 L1051.4 628.2 L1051.4 623.6 L1052.6 623.6 L1052.6 623.6 L1053.7 623.6 L1053.7 623.6 L1054.9 623.6 L1054.9 623.6 L1056.1 623.6 L1056.1 672.8 L1057.2 672.8 L1057.2 628.2 L1058.4 628.2 L1058.4 628.2 L1059.5 628.2 L1059.5 628.2 L1060.7 628.2 L1060.7 628.2 L1061.9 628.2 L1061.9 620.0 L1063.0 620.0 L1063.0 629.7 L1064.2 629.7 L1064.2 625.1 L1065.4 625.1 L1065.4 625.1 L1066.5 625.1 L1066.5 625.1 L1067.7 625.1 L1067.7 625.1 L1068.9 625.1 L1068.9 637.3 L1070.0 637.3 L1070.0 629.7 L1071.2 629.7 L1071.2 629.7 L1072.4 629.7 L1072.4 629.7 L1073.5 629.7 L1073.5 629.7 L1074.7 629.7 L1074.7 680.1 L1075.9 680.1 L1075.9 680.1 L1077.0 680.1 L1077.0 629.7 L1078.2 629.7 L1078.2 623.6 L1079.4 623.6 L1079.4 623.6 L1080.5 623.6 L1080.5 623.6 L1081.7 623.6 L1081.7 623.6 L1082.8 623.6 L1082.8 623.6 L1084.0 623.6 L1084.0 619.0 L1085.2 619.0 L1085.2 628.2 L1086.3 628.2 L1086.3 628.2 L1087.5 628.2 L1087.5 628.2 L1088.7 628.2 L1088.7 628.2 L1089.8 628.2 L1089.8 634.3 L1091.0 634.3 L1091.0 634.3 L1092.2 634.3 L1092.2 628.2 L1093.3 628.2 L1093.3 628.2 L1094.5 628.2 L1094.5 674.5 L1095.7 674.5 L1095.7 625.1 L1096.8 625.1 L1096.8 629.7 L1098.0 629.7 L1098.0 629.7 L1099.2 629.7 L1099.2 623.6 L1100.3 623.6 L1100.3 635.8 L1101.5 635.8 L1101.5 635.8 L1102.7 635.8 L1102.7 648.5 L1103.8 648.5 L1103.8 635.8 L1105.0 635.8 L1105.0 629.7 L1106.2 629.7 L1106.2 629.7 L1107.3 629.7 L1107.3 629.7 L1108.5 629.7 L1108.5 634.3 L1109.6 634.3 L1109.6 634.3 L1110.8 634.3 L1110.8 634.3 L1112.0 634.3 L1112.0 635.8 L1113.1 635.8 L1113.1 676.9 L1114.3 676.9 L1114.3 625.1 L1115.5 625.1 L1115.5 628.2 L1116.6 628.2 L1116.6 628.2 L1117.8 628.2 L1117.8 628.2 L1119.0 628.2 L1119.0 643.6 L1120.1 643.6 L1120.1 623.6 L1121.3 623.6 L1121.3 623.6 L1122.5 623.6 L1122.5 634.3 L1123.6 634.3 L1123.6 634.3 L1124.8 634.3 L1124.8 637.3 L1126.0 637.3 L1126.0 637.3 L1127.1 637.3 L1127.1 637.3 L1128.3 637.3 L1128.3 623.6 L1129.5 623.6 L1129.5 623.6 L1130.6 623.6 L1130.6 621.0 L1131.8 621.0 L1131.8 695.5 L1132.9 695.5 L1132.9 623.6 L1134.1 623.6 L1134.1 623.6 L1135.3 623.6 L1135.3 623.6 L1136.4 623.6 L1136.4 629.7 L1137.6 629.7 L1137.6 629.7 L1138.8 629.7 L1138.8 635.8 L1139.9 635.8 L1139.9 635.8 L1141.1 635.8 L1141.1 635.8 L1142.3 635.8 L1142.3 695.5 L1143.4 695.5 L1143.4 695.5 L1144.6 695.5 L1144.6 623.6 L1145.8 623.6 L1145.8 623.6 L1146.9 623.6 L1146.9 623.6 L1148.1 623.6 L1148.1 623.6 L1149.3 623.6 L1149.3 634.3 L1150.4 634.3 L1150.4 634.3 L1151.6 634.3 L1151.6 634.3 L1152.8 634.3 L1152.8 616.0 L1153.9 616.0 L1153.9 623.6 L1155.1 623.6 L1155.1 623.6 L1156.2 623.6 L1156.2 623.6 L1157.4 623.6 L1157.4 616.0 L1158.6 616.0 L1158.6 683.4 L1159.7 683.4 L1159.7 623.6 L1160.9 623.6 L1160.9 616.0 L1162.1 616.0 L1162.1 625.1 L1163.2 625.1 L1163.2 625.1 L1164.4 625.1 L1164.4 625.1 L1165.6 625.1 L1165.6 623.6 L1166.7 623.6 L1166.7 623.6 L1167.9 623.6 L1167.9 623.6 L1169.1 623.6 L1169.1 625.1 L1170.2 625.1 L1170.2 625.1 L1171.4 625.1 L1171.4 625.1 L1172.6 625.1 L1172.6 625.1 L1173.7 625.1 L1173.7 616.1 L1174.9 616.1 L1174.9 625.1 L1176.0 625.1 L1176.0 625.1 L1177.2 625.1 L1177.2 625.1 L1178.4 625.1 L1178.4 625.1 L1179.5 625.1 L1179.5 619.3 L1180.7 619.3 L1180.7 628.2 L1181.9 628.2 L1181.9 628.2 L1183.0 628.2 L1183.0 628.2 L1184.2 628.2 L1184.2 628.2 L1185.4 628.2 L1185.4 700.0 L1186.5 700.0 L1186.5 625.1 L1187.7 625.1 L1187.7 879.5 L908.1 879.5 Z" fill="#33aa99" fill-opacity=".15"/>
<path d="M915.1 651.9 L916.3 651.9 L916.3 651.9 L917.4 651.9 L917.4 651.9 L918.6 651.9 L918.6 651.9 L919.8 651.9 L919.8 651.9 L920.9 651.9 L920.9 651.9 L922.1 651.9 L922.1 651.9 L923.2 651.9 L923.2 651.9 L924.4 651.9 L924.4 651.9 L925.6 651.9 L925.6 670.7 L926.7 670.7 L926.7 670.7 L927.9 670.7 L927.9 670.7 L929.1 670.7 L929.1 659.4 L930.2 659.4 L930.2 659.4 L931.4 659.4 L931.4 659.4 L932.6 659.4 L932.6 659.4 L933.7 659.4 L933.7 659.4 L934.9 659.4 L934.9 650.8 L936.1 650.8 L936.1 650.8 L937.2 650.8 L937.2 650.8 L938.4 650.8 L938.4 650.8 L939.6 650.8 L939.6 650.8 L940.7 650.8 L940.7 650.8 L941.9 650.8 L941.9 650.8 L943.0 650.8 L943.1 650.8 L944.2 650.8 L944.2 650.8 L945.4 650.8 L945.4 650.8 L946.5 650.8 L946.5 650.8 L947.7 650.8 L947.7 650.8 L948.9 650.8 L948.9 650.8 L950.0 650.8 L950.0 650.8 L951.2 650.8 L951.2 650.8 L952.4 650.8 L952.4 650.8 L953.5 650.8 L953.5 650.8 L954.7 650.8 L954.7 650.8 L955.9 650.8 L955.9 650.8 L957.0 650.8 L957.0 650.8 L958.2 650.8 L958.2 656.4 L959.4 656.4 L959.4 656.4 L960.5 656.4 L960.5 656.4 L961.7 656.4 L961.7 656.4 L962.9 656.4 L962.9 656.4 L964.0 656.4 L964.0 656.4 L965.2 656.4 L965.2 655.7 L966.4 655.7 L966.4 655.7 L967.5 655.7 L967.5 655.7 L968.7 655.7 L968.7 655.7 L969.8 655.7 L969.8 655.7 L971.0 655.7 L971.0 655.7 L972.2 655.7 L972.2 655.7 L973.3 655.7 L973.3 655.7 L974.5 655.7 L974.5 655.7 L975.7 655.7 L975.7 655.7 L976.8 655.7 L976.8 657.6 L978.0 657.6 L978.0 657.6 L979.2 657.6 L979.2 657.6 L980.3 657.6 L980.3 657.6 L981.5 657.6 L981.5 657.6 L982.7 657.6 L982.7 657.6 L983.8 657.6 L983.8 657.6 L985.0 657.6 L985.0 657.6 L986.2 657.6 L986.2 657.6 L987.3 657.6 L987.3 657.6 L988.5 657.6 L988.5 657.6 L989.6 657.6 L989.6 650.8 L990.8 650.8 L990.8 650.8 L992.0 650.8 L992.0 650.8 L993.1 650.8 L993.1 650.8 L994.3 650.8 L994.3 650.8 L995.5 650.8 L995.5 650.8 L996.6 650.8 L996.6 650.8 L997.8 650.8 L997.8 650.8 L999.0 650.8 L999.0 650.8 L1000.1 650.8 L1000.1 650.8 L1001.3 650.8 L1001.3 650.8 L1002.5 650.8 L1002.5 650.8 L1003.6 650.8 L1003.6 650.8 L1004.8 650.8 L1004.8 650.8 L1006.0 650.8 L1006.0 650.8 L1007.1 650.8 L1007.1 650.8 L1008.3 650.8 L1008.3 650.8 L1009.5 650.8 L1009.5 650.8 L1010.6 650.8 L1010.6 652.3 L1011.8 652.3 L1011.8 652.3 L1013.0 652.3 L1013.0 652.3 L1014.1 652.3 L1014.1 652.3 L1015.3 652.3 L1015.3 676.3 L1016.4 676.3 L1016.4 676.3 L1017.6 676.3 L1017.6 676.3 L1018.8 676.3 L1018.8 676.3 L1019.9 676.3 L1019.9 676.3 L1021.1 676.3 L1021.1 660.6 L1022.3 660.6 L1022.3 660.6 L1023.4 660.6 L1023.4 660.6 L1024.6 660.6 L1024.6 660.6 L1025.8 660.6 L1025.8 660.6 L1026.9 660.6 L1026.9 660.6 L1028.1 660.6 L1028.1 660.6 L1029.3 660.6 L1029.3 672.5 L1030.4 672.5 L1030.4 672.5 L1031.6 672.5 L1031.6 672.5 L1032.8 672.5 L1032.8 653.1 L1033.9 653.1 L1033.9 653.1 L1035.1 653.1 L1035.1 653.1 L1036.2 653.1 L1036.2 653.1 L1037.4 653.1 L1037.4 653.1 L1038.6 653.1 L1038.6 653.1 L1039.7 653.1 L1039.7 653.1 L1040.9 653.1 L1040.9 653.1 L1042.1 653.1 L1042.1 653.1 L1043.2 653.1 L1043.2 653.1 L1044.4 653.1 L1044.4 653.1 L1045.6 653.1 L1045.6 653.1 L1046.7 653.1 L1046.7 653.1 L1047.9 653.1 L1047.9 653.1 L1049.1 653.1 L1049.1 652.1 L1050.2 652.1 L1050.2 652.1 L1051.4 652.1 L1051.4 652.1 L1052.6 652.1 L1052.6 652.1 L1053.7 652.1 L1053.7 652.1 L1054.9 652.1 L1054.9 652.1 L1056.1 652.1 L1056.1 652.1 L1057.2 652.1 L1057.2 646.9 L1058.4 646.9 L1058.4 646.9 L1059.5 646.9 L1059.5 646.9 L1060.7 646.9 L1060.7 646.9 L1061.9 646.9 L1061.9 646.9 L1063.0 646.9 L1063.0 646.9 L1064.2 646.9 L1064.2 646.9 L1065.4 646.9 L1065.4 680.9 L1066.5 680.9 L1066.5 680.9 L1067.7 680.9 L1067.7 680.9 L1068.9 680.9 L1068.9 680.9 L1070.0 680.9 L1070.0 655.8 L1071.2 655.8 L1071.2 655.8 L1072.4 655.8 L1072.4 659.9 L1073.5 659.9 L1073.5 659.9 L1074.7 659.9 L1074.7 659.9 L1075.9 659.9 L1075.9 659.9 L1077.0 659.9 L1077.0 659.9 L1078.2 659.9 L1078.2 663.1 L1079.4 663.1 L1079.4 663.1 L1080.5 663.1 L1080.5 663.1 L1081.7 663.1 L1081.7 663.1 L1082.8 663.1 L1082.8 663.1 L1084.0 663.1 L1084.0 671.2 L1085.2 671.2 L1085.2 671.2 L1086.3 671.2 L1086.3 650.1 L1087.5 650.1 L1087.5 650.1 L1088.7 650.1 L1088.7 663.9 L1089.8 663.9 L1089.8 663.9 L1091.0 663.9 L1091.0 644.9 L1092.2 644.9 L1092.2 644.9 L1093.3 644.9 L1093.3 644.9 L1094.5 644.9 L1094.5 644.9 L1095.7 644.9 L1095.7 655.8 L1096.8 655.8 L1096.8 655.8 L1098.0 655.8 L1098.0 658.2 L1099.2 658.2 L1099.2 658.2 L1100.3 658.2 L1100.3 658.2 L1101.5 658.2 L1101.5 658.2 L1102.7 658.2 L1102.7 683.4 L1103.8 683.4 L1103.8 683.4 L1105.0 683.4 L1105.0 683.4 L1106.2 683.4 L1106.2 683.4 L1107.3 683.4 L1107.3 683.4 L1108.5 683.4 L1108.5 683.4 L1109.6 683.4 L1109.6 650.9 L1110.8 650.9 L1110.8 650.9 L1112.0 650.9 L1112.0 650.9 L1113.1 650.9 L1113.1 650.9 L1114.3 650.9 L1114.3 649.3 L1115.5 649.3 L1115.5 649.3 L1116.6 649.3 L1116.6 649.3 L1117.8 649.3 L1117.8 649.3 L1119.0 649.3 L1119.0 649.3 L1120.1 649.3 L1120.1 649.3 L1121.3 649.3 L1121.3 667.2 L1122.5 667.2 L1122.5 667.2 L1123.6 667.2 L1123.6 650.9 L1124.8 650.9 L1124.8 650.9 L1126.0 650.9 L1126.0 650.9 L1127.1 650.9 L1127.1 650.9 L1128.3 650.9 L1128.3 650.9 L1129.5 650.9 L1129.5 650.9 L1130.6 650.9 L1130.6 647.2 L1131.8 647.2 L1131.8 647.2 L1132.9 647.2 L1132.9 647.2 L1134.1 647.2 L1134.1 647.2 L1135.3 647.2 L1135.3 647.2 L1136.4 647.2 L1136.4 656.6 L1137.6 656.6 L1137.6 656.6 L1138.8 656.6 L1138.8 656.6 L1139.9 656.6 L1139.9 672.8 L1141.1 672.8 L1141.1 672.8 L1142.3 672.8 L1142.3 672.8 L1143.4 672.8 L1143.4 653.4 L1144.6 653.4 L1144.6 653.4 L1145.8 653.4 L1145.8 653.4 L1146.9 653.4 L1146.9 653.4 L1148.1 653.4 L1148.1 653.4 L1149.3 653.4 L1149.3 672.8 L1150.4 672.8 L1150.4 672.8 L1151.6 672.8 L1151.6 650.9 L1152.8 650.9 L1152.8 650.9 L1153.9 650.9 L1153.9 650.9 L1155.1 650.9 L1155.1 650.9 L1156.2 650.9 L1156.2 650.9 L1157.4 650.9 L1157.4 650.9 L1158.6 650.9 L1158.6 650.9 L1159.7 650.9 L1159.7 650.9 L1160.9 650.9 L1160.9 650.9 L1162.1 650.9 L1162.1 650.9 L1163.2 650.9 L1163.2 650.9 L1164.4 650.9 L1164.4 650.9 L1165.6 650.9 L1165.6 650.9 L1166.7 650.9 L1166.7 650.9 L1167.9 650.9 L1167.9 650.9 L1169.1 650.9 L1169.1 685.0 L1170.2 685.0 L1170.2 685.0 L1171.4 685.0 L1171.4 685.0 L1172.6 685.0 L1172.6 685.0 L1173.7 685.0 L1173.7 646.9 L1174.9 646.9 L1174.9 646.9 L1176.0 646.9 L1176.0 646.9 L1177.2 646.9 L1177.2 646.9 L1178.4 646.9 L1178.4 646.9 L1179.5 646.9 L1179.5 646.9 L1180.7 646.9 L1180.7 879.5 L915.1 879.5 Z" fill="#ffcc00" fill-opacity=".15"/>
<path d="M908.1 672.4 L909.3 672.4 L909.3 693.1 L910.4 693.1 L910.4 689.2 L911.6 689.2 L911.6 689.2 L912.8 689.2 L912.8 683.1 L913.9 683.1 L913.9 683.1 L915.1 683.1 L915.1 700.0 L916.3 700.0 L916.3 672.4 L917.4 672.4 L917.4 680.1 L918.6 680.1 L918.6 680.1 L919.8 680.1 L919.8 689.2 L920.9 689.2 L920.9 680.1 L922.1 680.1 L922.1 680.1 L923.2 680.1 L923.2 737.3 L924.4 737.3 L924.4 675.5 L925.6 675.5 L925.6 675.5 L926.7 675.5 L926.7 705.0 L927.9 705.0 L927.9 675.5 L929.1 675.5 L929.1 678.6 L930.2 678.6 L930.2 678.6 L931.4 678.6 L931.4 725.2 L932.6 725.2 L932.6 680.1 L933.7 680.1 L933.7 680.1 L934.9 680.1 L934.9 675.5 L936.1 675.5 L936.1 675.5 L937.2 675.5 L937.2 675.5 L938.4 675.5 L938.4 677.0 L939.6 677.0 L939.6 739.0 L940.7 739.0 L940.7 677.0 L941.9 677.0 L941.9 675.5 L943.0 675.5 L943.1 712.0 L944.2 712.0 L944.2 675.5 L945.4 675.5 L945.4 675.5 L946.5 675.5 L946.5 675.5 L947.7 675.5 L947.7 753.0 L948.9 753.0 L948.9 674.0 L950.0 674.0 L950.0 683.1 L951.2 683.1 L951.2 715.0 L952.4 715.0 L952.4 683.1 L953.5 683.1 L953.5 683.1 L954.7 683.1 L954.7 683.1 L955.9 683.1 L955.9 713.2 L957.0 713.2 L957.0 686.2 L958.2 686.2 L958.2 666.9 L959.4 666.9 L959.4 686.2 L960.5 686.2 L960.5 675.5 L961.7 675.5 L961.7 675.5 L962.9 675.5 L962.9 677.0 L964.0 677.0 L964.0 749.3 L965.2 749.3 L965.2 677.0 L966.4 677.0 L966.4 677.0 L967.5 677.0 L967.5 686.2 L968.7 686.2 L968.7 686.2 L969.8 686.2 L969.8 672.4 L971.0 672.4 L971.0 697.2 L972.2 697.2 L972.2 662.1 L973.3 662.1 L973.3 683.1 L974.5 683.1 L974.5 683.1 L975.7 683.1 L975.7 686.2 L976.8 686.2 L976.8 686.2 L978.0 686.2 L978.0 686.2 L979.2 686.2 L979.2 677.0 L980.3 677.0 L980.3 677.0 L981.5 677.0 L981.5 767.2 L982.7 767.2 L982.7 767.2 L983.8 767.2 L983.8 677.0 L985.0 677.0 L985.0 677.0 L986.2 677.0 L986.2 678.6 L987.3 678.6 L987.3 678.6 L988.5 678.6 L988.5 675.5 L989.6 675.5 L989.6 700.0 L990.8 700.0 L990.8 675.5 L992.0 675.5 L992.0 675.5 L993.1 675.5 L993.1 662.1 L994.3 662.1 L994.3 683.1 L995.5 683.1 L995.5 689.2 L996.6 689.2 L996.6 678.6 L997.8 678.6 L997.8 678.6 L999.0 678.6 L999.0 705.0 L1000.1 705.0 L1000.1 677.0 L1001.3 677.0 L1001.3 683.1 L1002.5 683.1 L1002.5 683.1 L1003.6 683.1 L1003.6 683.1 L1004.8 683.1 L1004.8 686.2 L1006.0 686.2 L1006.0 686.2 L1007.1 686.2 L1007.1 773.6 L1008.3 773.6 L1008.3 773.6 L1009.5 773.6 L1009.5 677.0 L1010.6 677.0 L1010.6 677.0 L1011.8 677.0 L1011.8 660.6 L1013.0 660.6 L1013.0 674.0 L1014.1 674.0 L1014.1 678.6 L1015.3 678.6 L1015.3 680.1 L1016.4 680.1 L1016.4 783.7 L1017.6 783.7 L1017.6 675.5 L1018.8 675.5 L1018.8 689.2 L1019.9 689.2 L1019.9 689.2 L1021.1 689.2 L1021.1 672.4 L1022.3 672.4 L1022.3 689.2 L1023.4 689.2 L1023.4 683.1 L1024.6 683.1 L1024.6 700.0 L1025.8 700.0 L1025.8 683.1 L1026.9 683.1 L1026.9 680.1 L1028.1 680.1 L1028.1 680.1 L1029.3 680.1 L1029.3 680.1 L1030.4 680.1 L1030.4 680.1 L1031.6 680.1 L1031.6 678.6 L1032.8 678.6 L1032.8 664.3 L1033.9 664.3 L1033.9 678.6 L1035.1 678.6 L1035.1 739.6 L1036.2 739.6 L1036.2 683.1 L1037.4 683.1 L1037.4 686.2 L1038.6 686.2 L1038.6 686.2 L1039.7 686.2 L1039.7 686.2 L1040.9 686.2 L1040.9 686.2 L1042.1 686.2 L1042.1 683.1 L1043.2 683.1 L1043.2 678.6 L1044.4 678.6 L1044.4 677.0 L1045.6 677.0 L1045.6 744.4 L1046.7 744.4 L1046.7 744.4 L1047.9 744.4 L1047.9 744.4 L1049.1 744.4 L1049.1 689.2 L1050.2 689.2 L1050.2 675.5 L1051.4 675.5 L1051.4 675.5 L1052.6 675.5 L1052.6 674.0 L1053.7 674.0 L1053.7 674.0 L1054.9 674.0 L1054.9 670.7 L1056.1 670.7 L1056.1 678.6 L1057.2 678.6 L1057.2 678.6 L1058.4 678.6 L1058.4 677.0 L1059.5 677.0 L1059.5 683.1 L1060.7 683.1 L1060.7 683.1 L1061.9 683.1 L1061.9 683.1 L1063.0 683.1 L1063.0 739.9 L1064.2 739.9 L1064.2 674.0 L1065.4 674.0 L1065.4 689.2 L1066.5 689.2 L1066.5 689.2 L1067.7 689.2 L1067.7 689.2 L1068.9 689.2 L1068.9 711.8 L1070.0 711.8 L1070.0 680.1 L1071.2 680.1 L1071.2 680.1 L1072.4 680.1 L1072.4 791.5 L1073.5 791.5 L1073.5 791.5 L1074.7 791.5 L1074.7 680.1 L1075.9 680.1 L1075.9 680.1 L1077.0 680.1 L1077.0 668.8 L1078.2 668.8 L1078.2 680.1 L1079.4 680.1 L1079.4 683.1 L1080.5 683.1 L1080.5 683.1 L1081.7 683.1 L1081.7 683.1 L1082.8 683.1 L1082.8 683.1 L1084.0 683.1 L1084.0 705.0 L1085.2 705.0 L1085.2 683.1 L1086.3 683.1 L1086.3 683.1 L1087.5 683.1 L1087.5 683.1 L1088.7 683.1 L1088.7 683.1 L1089.8 683.1 L1089.8 672.4 L1091.0 672.4 L1091.0 678.6 L1092.2 678.6 L1092.2 677.0 L1093.3 677.0 L1093.3 700.0 L1094.5 700.0 L1094.5 675.5 L1095.7 675.5 L1095.7 675.5 L1096.8 675.5 L1096.8 677.0 L1098.0 677.0 L1098.0 672.4 L1099.2 672.4 L1099.2 683.1 L1100.3 683.1 L1100.3 683.1 L1101.5 683.1 L1101.5 767.2 L1102.7 767.2 L1102.7 651.9 L1103.8 651.9 L1103.8 678.6 L1105.0 678.6 L1105.0 678.6 L1106.2 678.6 L1106.2 678.6 L1107.3 678.6 L1107.3 678.6 L1108.5 678.6 L1108.5 689.2 L1109.6 689.2 L1109.6 689.2 L1110.8 689.2 L1110.8 689.2 L1112.0 689.2 L1112.0 704.0 L1113.1 704.0 L1113.1 672.4 L1114.3 672.4 L1114.3 677.0 L1115.5 677.0 L1115.5 683.1 L1116.6 683.1 L1116.6 672.4 L1117.8 672.4 L1117.8 672.4 L1119.0 672.4 L1119.0 665.0 L1120.1 665.0 L1120.1 755.6 L1121.3 755.6 L1121.3 755.6 L1122.5 755.6 L1122.5 677.0 L1123.6 677.0 L1123.6 683.1 L1124.8 683.1 L1124.8 683.1 L1126.0 683.1 L1126.0 675.5 L1127.1 675.5 L1127.1 686.2 L1128.3 686.2 L1128.3 689.2 L1129.5 689.2 L1129.5 805.4 L1130.6 805.4 L1130.6 805.4 L1131.8 805.4 L1131.8 680.1 L1132.9 680.1 L1132.9 674.0 L1134.1 674.0 L1134.1 674.0 L1135.3 674.0 L1135.3 680.1 L1136.4 680.1 L1136.4 648.2 L1137.6 648.2 L1137.6 680.1 L1138.8 680.1 L1138.8 787.4 L1139.9 787.4 L1139.9 787.4 L1141.1 787.4 L1141.1 672.4 L1142.3 672.4 L1142.3 672.4 L1143.4 672.4 L1143.4 680.1 L1144.6 680.1 L1144.6 680.1 L1145.8 680.1 L1145.8 680.1 L1146.9 680.1 L1146.9 675.5 L1148.1 675.5 L1148.1 782.2 L1149.3 782.2 L1149.3 782.2 L1150.4 782.2 L1150.4 689.2 L1151.6 689.2 L1151.6 686.2 L1152.8 686.2 L1152.8 686.2 L1153.9 686.2 L1153.9 675.5 L1155.1 675.5 L1155.1 677.0 L1156.2 677.0 L1156.2 677.0 L1157.4 677.0 L1157.4 677.0 L1158.6 677.0 L1158.6 677.0 L1159.7 677.0 L1159.7 700.0 L1160.9 700.0 L1160.9 686.2 L1162.1 686.2 L1162.1 686.2 L1163.2 686.2 L1163.2 686.2 L1164.4 686.2 L1164.4 686.2 L1165.6 686.2 L1165.6 695.0 L1166.7 695.0 L1166.7 680.1 L1167.9 680.1 L1167.9 677.0 L1169.1 677.0 L1169.1 672.4 L1170.2 672.4 L1170.2 672.4 L1171.4 672.4 L1171.4 675.5 L1172.6 675.5 L1172.6 675.5 L1173.7 675.5 L1173.7 680.1 L1174.9 680.1 L1174.9 696.0 L1176.0 696.0 L1176.0 680.1 L1177.2 680.1 L1177.2 680.1 L1178.4 680.1 L1178.4 674.0 L1179.5 674.0 L1179.5 674.0 L1180.7 674.0 L1180.7 689.2 L1181.9 689.2 L1181.9 678.6 L1183.0 678.6 L1183.0 689.2 L1184.2 689.2 L1184.2 670.7 L1185.4 670.7 L1185.4 791.5 L1186.5 791.5 L1186.5 791.5 L1187.7 791.5 L1187.7 879.5 L908.1 879.5 Z" fill="#ff0054" fill-opacity=".15"/>
<path d="M908.1 669.4 L909.3 669.4 L909.3 669.4 L910.4 669.4 L910.4 637.3 L911.6 637.3 L911.6 635.8 L912.8 635.8 L912.8 634.3 L913.9 634.3 L913.9 635.8 L915.1 635.8 L915.1 635.8 L916.3 635.8 L916.3 625.1 L917.4 625.1 L917.4 625.1 L918.6 625.1 L918.6 664.7 L919.8 664.7 L919.8 664.7 L920.9 664.7 L920.9 628.2 L922.1 628.2 L922.1 628.2 L923.2 628.2 L923.2 625.1 L924.4 625.1 L924.4 628.2 L925.6 628.2 L925.6 634.3 L926.7 634.3 L926.7 635.8 L927.9 635.8 L927.9 656.6 L929.1 656.6 L929.1 656.6 L930.2 656.6 L930.2 628.2 L931.4 628.2 L931.4 625.1 L932.6 625.1 L932.6 629.7 L933.7 629.7 L933.7 628.2 L934.9 628.2 L934.9 674.5 L936.1 674.5 L936.1 674.5 L937.2 674.5 L937.2 674.5 L938.4 674.5 L938.4 674.5 L939.6 674.5 L939.6 674.5 L940.7 674.5 L940.7 674.5 L941.9 674.5 L941.9 629.7 L943.0 629.7 L943.1 629.7 L944.2 629.7 L944.2 625.1 L945.4 625.1 L945.4 634.3 L946.5 634.3 L946.5 634.3 L947.7 634.3 L947.7 634.3 L948.9 634.3 L948.9 634.3 L950.0 634.3 L950.0 634.3 L951.2 634.3 L951.2 635.8 L952.4 635.8 L952.4 635.8 L953.5 635.8 L953.5 635.8 L954.7 635.8 L954.7 625.1 L955.9 625.1 L955.9 625.1 L957.0 625.1 L957.0 625.1 L958.2 625.1 L958.2 687.4 L959.4 687.4 L959.4 628.2 L960.5 628.2 L960.5 623.6 L961.7 623.6 L961.7 623.6 L962.9 623.6 L962.9 623.6 L964.0 623.6 L964.0 623.6 L965.2 623.6 L965.2 637.3 L966.4 637.3 L966.4 637.3 L967.5 637.3 L967.5 672.8 L968.7 672.8 L968.7 623.6 L969.8 623.6 L969.8 629.7 L971.0 629.7 L971.0 625.1 L972.2 625.1 L972.2 625.1 L973.3 625.1 L973.3 625.1 L974.5 625.1 L974.5 623.6 L975.7 623.6 L975.7 637.3 L976.8 637.3 L976.8 637.3 L978.0 637.3 L978.0 637.3 L979.2 637.3 L979.2 637.3 L980.3 637.3 L980.3 637.3 L981.5 637.3 L981.5 634.3 L982.7 634.3 L982.7 634.3 L983.8 634.3 L983.8 674.5 L985.0 674.5 L985.0 674.5 L986.2 674.5 L986.2 637.3 L987.3 637.3 L987.3 635.8 L988.5 635.8 L988.5 635.8 L989.6 635.8 L989.6 695.5 L990.8 695.5 L990.8 695.5 L992.0 695.5 L992.0 634.3 L993.1 634.3 L993.1 623.6 L994.3 623.6 L994.3 623.6 L995.5 623.6 L995.5 623.6 L996.6 623.6 L996.6 623.6 L997.8 623.6 L997.8 623.6 L999.0 623.6 L999.0 623.6 L1000.1 623.6 L1000.1 637.3 L1001.3 637.3 L1001.3 612.7 L1002.5 612.7 L1002.5 637.3 L1003.6 637.3 L1003.6 637.3 L1004.8 637.3 L1004.8 637.3 L1006.0 637.3 L1006.0 637.3 L1007.1 637.3 L1007.1 634.3 L1008.3 634.3 L1008.3 637.3 L1009.5 637.3 L1009.5 637.3 L1010.6 637.3 L1010.6 634.3 L1011.8 634.3 L1011.8 656.6 L1013.0 656.6 L1013.0 634.3 L1014.1 634.3 L1014.1 623.6 L1015.3 623.6 L1015.3 637.3 L1016.4 637.3 L1016.4 637.3 L1017.6 637.3 L1017.6 646.9 L1018.8 646.9 L1018.8 646.9 L1019.9 646.9 L1019.9 628.2 L1021.1 628.2 L1021.1 623.6 L1022.3 623.6 L1022.3 623.6 L1023.4 623.6 L1023.4 623.6 L1024.6 623.6 L1024.6 637.3 L1025.8 637.3 L1025.8 629.7 L1026.9 629.7 L1026.9 629.7 L1028.1 629.7 L1028.1 634.3 L1029.3 634.3 L1029.3 634.3 L1030.4 634.3 L1030.4 634.3 L1031.6 634.3 L1031.6 635.8 L1032.8 635.8 L1032.8 635.8 L1033.9 635.8 L1033.9 623.6 L1035.1 623.6 L1035.1 625.1 L1036.2 625.1 L1036.2 628.2 L1037.4 628.2 L1037.4 671.2 L1038.6 671.2 L1038.6 671.2 L1039.7 671.2 L1039.7 637.3 L1040.9 637.3 L1040.9 637.3 L1042.1 637.3 L1042.1 637.3 L1043.2 637.3 L1043.2 629.7 L1044.4 629.7 L1044.4 628.2 L1045.6 628.2 L1045.6 628.2 L1046.7 628.2 L1046.7 623.6 L1047.9 623.6 L1047.9 623.6 L1049.1 623.6 L1049.1 623.6 L1050.2 623.6 L1050.2 628.2 L1051.4 628.2 L1051.4 623.6 L1052.6 623.6 L1052.6 623.6 L1053.7 623.6 L1053.7 623.6 L1054.9 623.6 L1054.9 623.6 L1056.1 623.6 L1056.1 672.8 L1057.2 672.8 L1057.2 628.2 L1058.4 628.2 L1058.4 628.2 L1059.5 628.2 L1059.5 628.2 L1060.7 628.2 L1060.7 628.2 L1061.9 628.2 L1061.9 620.0 L1063.0 620.0 L1063.0 629.7 L1064.2 629.7 L1064.2 625.1 L1065.4 625.1 L1065.4 625.1 L1066.5 625.1 L1066.5 625.1 L1067.7 625.1 L1067.7 625.1 L1068.9 625.1 L1068.9 637.3 L1070.0 637.3 L1070.0 629.7 L1071.2 629.7 L1071.2 629.7 L1072.4 629.7 L1072.4 629.7 L1073.5 629.7 L1073.5 629.7 L1074.7 629.7 L1074.7 680.1 L1075.9 680.1 L1075.9 680.1 L1077.0 680.1 L1077.0 629.7 L1078.2 629.7 L1078.2 623.6 L1079.4 623.6 L1079.4 623.6 L1080.5 623.6 L1080.5 623.6 L1081.7 623.6 L1081.7 623.6 L1082.8 623.6 L1082.8 623.6 L1084.0 623.6 L1084.0 619.0 L1085.2 619.0 L1085.2 628.2 L1086.3 628.2 L1086.3 628.2 L1087.5 628.2 L1087.5 628.2 L1088.7 628.2 L1088.7 628.2 L1089.8 628.2 L1089.8 634.3 L1091.0 634.3 L1091.0 634.3 L1092.2 634.3 L1092.2 628.2 L1093.3 628.2 L1093.3 628.2 L1094.5 628.2 L1094.5 674.5 L1095.7 674.5 L1095.7 625.1 L1096.8 625.1 L1096.8 629.7 L1098.0 629.7 L1098.0 629.7 L1099.2 629.7 L1099.2 623.6 L1100.3 623.6 L1100.3 635.8 L1101.5 635.8 L1101.5 635.8 L1102.7 635.8 L1102.7 648.5 L1103.8 648.5 L1103.8 635.8 L1105.0 635.8 L1105.0 629.7 L1106.2 629.7 L1106.2 629.7 L1107.3 629.7 L1107.3 629.7 L1108.5 629.7 L1108.5 634.3 L1109.6 634.3 L1109.6 634.3 L1110.8 634.3 L1110.8 634.3 L1112.0 634.3 L1112.0 635.8 L1113.1 635.8 L1113.1 676.9 L1114.3 676.9 L1114.3 625.1 L1115.5 625.1 L1115.5 628.2 L1116.6 628.2 L1116.6 628.2 L1117.8 628.2 L1117.8 628.2 L1119.0 628.2 L1119.0 643.6 L1120.1 643.6 L1120.1 623.6 L1121.3 623.6 L1121.3 623.6 L1122.5 623.6 L1122.5 634.3 L1123.6 634.3 L1123.6 634.3 L1124.8 634.3 L1124.8 637.3 L1126.0 637.3 L1126.0 637.3 L1127.1 637.3 L1127.1 637.3 L1128.3 637.3 L1128.3 623.6 L1129.5 623.6 L1129.5 623.6 L1130.6 623.6 L1130.6 621.0 L1131.8 621.0 L1131.8 695.5 L1132.9 695.5 L1132.9 623.6 L1134.1 623.6 L1134.1 623.6 L1135.3 623.6 L1135.3 623.6 L1136.4 623.6 L1136.4 629.7 L1137.6 629.7 L1137.6 629.7 L1138.8 629.7 L1138.8 635.8 L1139.9 635.8 L1139.9 635.8 L1141.1 635.8 L1141.1 635.8 L1142.3 635.8 L1142.3 695.5 L1143.4 695.5 L1143.4 695.5 L1144.6 695.5 L1144.6 623.6 L1145.8 623.6 L1145.8 623.6 L1146.9 623.6 L1146.9 623.6 L1148.1 623.6 L1148.1 623.6 L1149.3 623.6 L1149.3 634.3 L1150.4 634.3 L1150.4 634.3 L1151.6 634.3 L1151.6 634.3 L1152.8 634.3 L1152.8 616.0 L1153.9 616.0 L1153.9 623.6 L1155.1 623.6 L1155.1 623.6 L1156.2 623.6 L1156.2 623.6 L1157.4 623.6 L1157.4 616.0 L1158.6 616.0 L1158.6 683.4 L1159.7 683.4 L1159.7 623.6 L1160.9 623.6 L1160.9 616.0 L1162.1 616.0 L1162.1 625.1 L1163.2 625.1 L1163.2 625.1 L1164.4 625.1 L1164.4 625.1 L1165.6 625.1 L1165.6 623.6 L1166.7 623.6 L1166.7 623.6 L1167.9 623.6 L1167.9 623.6 L1169.1 623.6 L1169.1 625.1 L1170.2 625.1 L1170.2 625.1 L1171.4 625.1 L1171.4 625.1 L1172.6 625.1 L1172.6 625.1 L1173.7 625.1 L1173.7 616.1 L1174.9 616.1 L1174.9 625.1 L1176.0 625.1 L1176.0 625.1 L1177.2 625.1 L1177.2 625.1 L1178.4 625.1 L1178.4 625.1 L1179.5 625.1 L1179.5 619.3 L1180.7 619.3 L1180.7 628.2 L1181.9 628.2 L1181.9 628.2 L1183.0 628.2 L1183.0 628.2 L1184.2 628.2 L1184.2 628.2 L1185.4 628.2 L1185.4 700.0 L1186.5 700.0 L1186.5 625.1 L1187.7 625.1 L1187.7 879.5 L908.1 879.5 Z" fill="#4ED8A0" fill-opacity=".15"/>
<path d="M915.1 651.9 L916.3 651.9 L916.3 651.9 L917.4 651.9 L917.4 651.9 L918.6 651.9 L918.6 651.9 L919.8 651.9 L919.8 651.9 L920.9 651.9 L920.9 651.9 L922.1 651.9 L922.1 651.9 L923.2 651.9 L923.2 651.9 L924.4 651.9 L924.4 651.9 L925.6 651.9 L925.6 670.7 L926.7 670.7 L926.7 670.7 L927.9 670.7 L927.9 670.7 L929.1 670.7 L929.1 659.4 L930.2 659.4 L930.2 659.4 L931.4 659.4 L931.4 659.4 L932.6 659.4 L932.6 659.4 L933.7 659.4 L933.7 659.4 L934.9 659.4 L934.9 650.8 L936.1 650.8 L936.1 650.8 L937.2 650.8 L937.2 650.8 L938.4 650.8 L938.4 650.8 L939.6 650.8 L939.6 650.8 L940.7 650.8 L940.7 650.8 L941.9 650.8 L941.9 650.8 L943.0 650.8 L943.1 650.8 L944.2 650.8 L944.2 650.8 L945.4 650.8 L945.4 650.8 L946.5 650.8 L946.5 650.8 L947.7 650.8 L947.7 650.8 L948.9 650.8 L948.9 650.8 L950.0 650.8 L950.0 650.8 L951.2 650.8 L951.2 650.8 L952.4 650.8 L952.4 650.8 L953.5 650.8 L953.5 650.8 L954.7 650.8 L954.7 650.8 L955.9 650.8 L955.9 650.8 L957.0 650.8 L957.0 650.8 L958.2 650.8 L958.2 656.4 L959.4 656.4 L959.4 656.4 L960.5 656.4 L960.5 656.4 L961.7 656.4 L961.7 656.4 L962.9 656.4 L962.9 656.4 L964.0 656.4 L964.0 656.4 L965.2 656.4 L965.2 655.7 L966.4 655.7 L966.4 655.7 L967.5 655.7 L967.5 655.7 L968.7 655.7 L968.7 655.7 L969.8 655.7 L969.8 655.7 L971.0 655.7 L971.0 655.7 L972.2 655.7 L972.2 655.7 L973.3 655.7 L973.3 655.7 L974.5 655.7 L974.5 655.7 L975.7 655.7 L975.7 655.7 L976.8 655.7 L976.8 657.6 L978.0 657.6 L978.0 657.6 L979.2 657.6 L979.2 657.6 L980.3 657.6 L980.3 657.6 L981.5 657.6 L981.5 657.6 L982.7 657.6 L982.7 657.6 L983.8 657.6 L983.8 657.6 L985.0 657.6 L985.0 657.6 L986.2 657.6 L986.2 657.6 L987.3 657.6 L987.3 657.6 L988.5 657.6 L988.5 657.6 L989.6 657.6 L989.6 650.8 L990.8 650.8 L990.8 650.8 L992.0 650.8 L992.0 650.8 L993.1 650.8 L993.1 650.8 L994.3 650.8 L994.3 650.8 L995.5 650.8 L995.5 650.8 L996.6 650.8 L996.6 650.8 L997.8 650.8 L997.8 650.8 L999.0 650.8 L999.0 650.8 L1000.1 650.8 L1000.1 650.8 L1001.3 650.8 L1001.3 650.8 L1002.5 650.8 L1002.5 650.8 L1003.6 650.8 L1003.6 650.8 L1004.8 650.8 L1004.8 650.8 L1006.0 650.8 L1006.0 650.8 L1007.1 650.8 L1007.1 650.8 L1008.3 650.8 L1008.3 650.8 L1009.5 650.8 L1009.5 650.8 L1010.6 650.8 L1010.6 652.3 L1011.8 652.3 L1011.8 652.3 L1013.0 652.3 L1013.0 652.3 L1014.1 652.3 L1014.1 652.3 L1015.3 652.3 L1015.3 676.3 L1016.4 676.3 L1016.4 676.3 L1017.6 676.3 L1017.6 676.3 L1018.8 676.3 L1018.8 676.3 L1019.9 676.3 L1019.9 676.3 L1021.1 676.3 L1021.1 660.6 L1022.3 660.6 L1022.3 660.6 L1023.4 660.6 L1023.4 660.6 L1024.6 660.6 L1024.6 660.6 L1025.8 660.6 L1025.8 660.6 L1026.9 660.6 L1026.9 660.6 L1028.1 660.6 L1028.1 660.6 L1029.3 660.6 L1029.3 672.5 L1030.4 672.5 L1030.4 672.5 L1031.6 672.5 L1031.6 672.5 L1032.8 672.5 L1032.8 653.1 L1033.9 653.1 L1033.9 653.1 L1035.1 653.1 L1035.1 653.1 L1036.2 653.1 L1036.2 653.1 L1037.4 653.1 L1037.4 653.1 L1038.6 653.1 L1038.6 653.1 L1039.7 653.1 L1039.7 653.1 L1040.9 653.1 L1040.9 653.1 L1042.1 653.1 L1042.1 653.1 L1043.2 653.1 L1043.2 653.1 L1044.4 653.1 L1044.4 653.1 L1045.6 653.1 L1045.6 653.1 L1046.7 653.1 L1046.7 653.1 L1047.9 653.1 L1047.9 653.1 L1049.1 653.1 L1049.1 652.1 L1050.2 652.1 L1050.2 652.1 L1051.4 652.1 L1051.4 652.1 L1052.6 652.1 L1052.6 652.1 L1053.7 652.1 L1053.7 652.1 L1054.9 652.1 L1054.9 652.1 L1056.1 652.1 L1056.1 652.1 L1057.2 652.1 L1057.2 646.9 L1058.4 646.9 L1058.4 646.9 L1059.5 646.9 L1059.5 646.9 L1060.7 646.9 L1060.7 646.9 L1061.9 646.9 L1061.9 646.9 L1063.0 646.9 L1063.0 646.9 L1064.2 646.9 L1064.2 646.9 L1065.4 646.9 L1065.4 680.9 L1066.5 680.9 L1066.5 680.9 L1067.7 680.9 L1067.7 680.9 L1068.9 680.9 L1068.9 680.9 L1070.0 680.9 L1070.0 655.8 L1071.2 655.8 L1071.2 655.8 L1072.4 655.8 L1072.4 659.9 L1073.5 659.9 L1073.5 659.9 L1074.7 659.9 L1074.7 659.9 L1075.9 659.9 L1075.9 659.9 L1077.0 659.9 L1077.0 659.9 L1078.2 659.9 L1078.2 663.1 L1079.4 663.1 L1079.4 663.1 L1080.5 663.1 L1080.5 663.1 L1081.7 663.1 L1081.7 663.1 L1082.8 663.1 L1082.8 663.1 L1084.0 663.1 L1084.0 671.2 L1085.2 671.2 L1085.2 671.2 L1086.3 671.2 L1086.3 650.1 L1087.5 650.1 L1087.5 650.1 L1088.7 650.1 L1088.7 663.9 L1089.8 663.9 L1089.8 663.9 L1091.0 663.9 L1091.0 644.9 L1092.2 644.9 L1092.2 644.9 L1093.3 644.9 L1093.3 644.9 L1094.5 644.9 L1094.5 644.9 L1095.7 644.9 L1095.7 655.8 L1096.8 655.8 L1096.8 655.8 L1098.0 655.8 L1098.0 658.2 L1099.2 658.2 L1099.2 658.2 L1100.3 658.2 L1100.3 658.2 L1101.5 658.2 L1101.5 658.2 L1102.7 658.2 L1102.7 683.4 L1103.8 683.4 L1103.8 683.4 L1105.0 683.4 L1105.0 683.4 L1106.2 683.4 L1106.2 683.4 L1107.3 683.4 L1107.3 683.4 L1108.5 683.4 L1108.5 683.4 L1109.6 683.4 L1109.6 650.9 L1110.8 650.9 L1110.8 650.9 L1112.0 650.9 L1112.0 650.9 L1113.1 650.9 L1113.1 650.9 L1114.3 650.9 L1114.3 649.3 L1115.5 649.3 L1115.5 649.3 L1116.6 649.3 L1116.6 649.3 L1117.8 649.3 L1117.8 649.3 L1119.0 649.3 L1119.0 649.3 L1120.1 649.3 L1120.1 649.3 L1121.3 649.3 L1121.3 667.2 L1122.5 667.2 L1122.5 667.2 L1123.6 667.2 L1123.6 650.9 L1124.8 650.9 L1124.8 650.9 L1126.0 650.9 L1126.0 650.9 L1127.1 650.9 L1127.1 650.9 L1128.3 650.9 L1128.3 650.9 L1129.5 650.9 L1129.5 650.9 L1130.6 650.9 L1130.6 647.2 L1131.8 647.2 L1131.8 647.2 L1132.9 647.2 L1132.9 647.2 L1134.1 647.2 L1134.1 647.2 L1135.3 647.2 L1135.3 647.2 L1136.4 647.2 L1136.4 656.6 L1137.6 656.6 L1137.6 656.6 L1138.8 656.6 L1138.8 656.6 L1139.9 656.6 L1139.9 672.8 L1141.1 672.8 L1141.1 672.8 L1142.3 672.8 L1142.3 672.8 L1143.4 672.8 L1143.4 653.4 L1144.6 653.4 L1144.6 653.4 L1145.8 653.4 L1145.8 653.4 L1146.9 653.4 L1146.9 653.4 L1148.1 653.4 L1148.1 653.4 L1149.3 653.4 L1149.3 672.8 L1150.4 672.8 L1150.4 672.8 L1151.6 672.8 L1151.6 650.9 L1152.8 650.9 L1152.8 650.9 L1153.9 650.9 L1153.9 650.9 L1155.1 650.9 L1155.1 650.9 L1156.2 650.9 L1156.2 650.9 L1157.4 650.9 L1157.4 650.9 L1158.6 650.9 L1158.6 650.9 L1159.7 650.9 L1159.7 650.9 L1160.9 650.9 L1160.9 650.9 L1162.1 650.9 L1162.1 650.9 L1163.2 650.9 L1163.2 650.9 L1164.4 650.9 L1164.4 650.9 L1165.6 650.9 L1165.6 650.9 L1166.7 650.9 L1166.7 650.9 L1167.9 650.9 L1167.9 650.9 L1169.1 650.9 L1169.1 685.0 L1170.2 685.0 L1170.2 685.0 L1171.4 685.0 L1171.4 685.0 L1172.6 685.0 L1172.6 685.0 L1173.7 685.0 L1173.7 646.9 L1174.9 646.9 L1174.9 646.9 L1176.0 646.9 L1176.0 646.9 L1177.2 646.9 L1177.2 646.9 L1178.4 646.9 L1178.4 646.9 L1179.5 646.9 L1179.5 646.9 L1180.7 646.9 L1180.7 879.5 L915.1 879.5 Z" fill="#9394FF" fill-opacity=".15"/>
<path d="M908.1 672.4 L909.3 672.4 L909.3 693.1 L910.4 693.1 L910.4 689.2 L911.6 689.2 L911.6 689.2 L912.8 689.2 L912.8 683.1 L913.9 683.1 L913.9 683.1 L915.1 683.1 L915.1 700.0 L916.3 700.0 L916.3 672.4 L917.4 672.4 L917.4 680.1 L918.6 680.1 L918.6 680.1 L919.8 680.1 L919.8 689.2 L920.9 689.2 L920.9 680.1 L922.1 680.1 L922.1 680.1 L923.2 680.1 L923.2 737.3 L924.4 737.3 L924.4 675.5 L925.6 675.5 L925.6 675.5 L926.7 675.5 L926.7 705.0 L927.9 705.0 L927.9 675.5 L929.1 675.5 L929.1 678.6 L930.2 678.6 L930.2 678.6 L931.4 678.6 L931.4 725.2 L932.6 725.2 L932.6 680.1 L933.7 680.1 L933.7 680.1 L934.9 680.1 L934.9 675.5 L936.1 675.5 L936.1 675.5 L937.2 675.5 L937.2 675.5 L938.4 675.5 L938.4 677.0 L939.6 677.0 L939.6 739.0 L940.7 739.0 L940.7 677.0 L941.9 677.0 L941.9 675.5 L943.0 675.5 L943.1 712.0 L944.2 712.0 L944.2 675.5 L945.4 675.5 L945.4 675.5 L946.5 675.5 L946.5 675.5 L947.7 675.5 L947.7 753.0 L948.9 753.0 L948.9 674.0 L950.0 674.0 L950.0 683.1 L951.2 683.1 L951.2 715.0 L952.4 715.0 L952.4 683.1 L953.5 683.1 L953.5 683.1 L954.7 683.1 L954.7 683.1 L955.9 683.1 L955.9 713.2 L957.0 713.2 L957.0 686.2 L958.2 686.2 L958.2 666.9 L959.4 666.9 L959.4 686.2 L960.5 686.2 L960.5 675.5 L961.7 675.5 L961.7 675.5 L962.9 675.5 L962.9 677.0 L964.0 677.0 L964.0 749.3 L965.2 749.3 L965.2 677.0 L966.4 677.0 L966.4 677.0 L967.5 677.0 L967.5 686.2 L968.7 686.2 L968.7 686.2 L969.8 686.2 L969.8 672.4 L971.0 672.4 L971.0 697.2 L972.2 697.2 L972.2 662.1 L973.3 662.1 L973.3 683.1 L974.5 683.1 L974.5 683.1 L975.7 683.1 L975.7 686.2 L976.8 686.2 L976.8 686.2 L978.0 686.2 L978.0 686.2 L979.2 686.2 L979.2 677.0 L980.3 677.0 L980.3 677.0 L981.5 677.0 L981.5 767.2 L982.7 767.2 L982.7 767.2 L983.8 767.2 L983.8 677.0 L985.0 677.0 L985.0 677.0 L986.2 677.0 L986.2 678.6 L987.3 678.6 L987.3 678.6 L988.5 678.6 L988.5 675.5 L989.6 675.5 L989.6 700.0 L990.8 700.0 L990.8 675.5 L992.0 675.5 L992.0 675.5 L993.1 675.5 L993.1 662.1 L994.3 662.1 L994.3 683.1 L995.5 683.1 L995.5 689.2 L996.6 689.2 L996.6 678.6 L997.8 678.6 L997.8 678.6 L999.0 678.6 L999.0 705.0 L1000.1 705.0 L1000.1 677.0 L1001.3 677.0 L1001.3 683.1 L1002.5 683.1 L1002.5 683.1 L1003.6 683.1 L1003.6 683.1 L1004.8 683.1 L1004.8 686.2 L1006.0 686.2 L1006.0 686.2 L1007.1 686.2 L1007.1 773.6 L1008.3 773.6 L1008.3 773.6 L1009.5 773.6 L1009.5 677.0 L1010.6 677.0 L1010.6 677.0 L1011.8 677.0 L1011.8 660.6 L1013.0 660.6 L1013.0 674.0 L1014.1 674.0 L1014.1 678.6 L1015.3 678.6 L1015.3 680.1 L1016.4 680.1 L1016.4 783.7 L1017.6 783.7 L1017.6 675.5 L1018.8 675.5 L1018.8 689.2 L1019.9 689.2 L1019.9 689.2 L1021.1 689.2 L1021.1 672.4 L1022.3 672.4 L1022.3 689.2 L1023.4 689.2 L1023.4 683.1 L1024.6 683.1 L1024.6 700.0 L1025.8 700.0 L1025.8 683.1 L1026.9 683.1 L1026.9 680.1 L1028.1 680.1 L1028.1 680.1 L1029.3 680.1 L1029.3 680.1 L1030.4 680.1 L1030.4 680.1 L1031.6 680.1 L1031.6 678.6 L1032.8 678.6 L1032.8 664.3 L1033.9 664.3 L1033.9 678.6 L1035.1 678.6 L1035.1 739.6 L1036.2 739.6 L1036.2 683.1 L1037.4 683.1 L1037.4 686.2 L1038.6 686.2 L1038.6 686.2 L1039.7 686.2 L1039.7 686.2 L1040.9 686.2 L1040.9 686.2 L1042.1 686.2 L1042.1 683.1 L1043.2 683.1 L1043.2 678.6 L1044.4 678.6 L1044.4 677.0 L1045.6 677.0 L1045.6 744.4 L1046.7 744.4 L1046.7 744.4 L1047.9 744.4 L1047.9 744.4 L1049.1 744.4 L1049.1 689.2 L1050.2 689.2 L1050.2 675.5 L1051.4 675.5 L1051.4 675.5 L1052.6 675.5 L1052.6 674.0 L1053.7 674.0 L1053.7 674.0 L1054.9 674.0 L1054.9 670.7 L1056.1 670.7 L1056.1 678.6 L1057.2 678.6 L1057.2 678.6 L1058.4 678.6 L1058.4 677.0 L1059.5 677.0 L1059.5 683.1 L1060.7 683.1 L1060.7 683.1 L1061.9 683.1 L1061.9 683.1 L1063.0 683.1 L1063.0 739.9 L1064.2 739.9 L1064.2 674.0 L1065.4 674.0 L1065.4 689.2 L1066.5 689.2 L1066.5 689.2 L1067.7 689.2 L1067.7 689.2 L1068.9 689.2 L1068.9 711.8 L1070.0 711.8 L1070.0 680.1 L1071.2 680.1 L1071.2 680.1 L1072.4 680.1 L1072.4 791.5 L1073.5 791.5 L1073.5 791.5 L1074.7 791.5 L1074.7 680.1 L1075.9 680.1 L1075.9 680.1 L1077.0 680.1 L1077.0 668.8 L1078.2 668.8 L1078.2 680.1 L1079.4 680.1 L1079.4 683.1 L1080.5 683.1 L1080.5 683.1 L1081.7 683.1 L1081.7 683.1 L1082.8 683.1 L1082.8 683.1 L1084.0 683.1 L1084.0 705.0 L1085.2 705.0 L1085.2 683.1 L1086.3 683.1 L1086.3 683.1 L1087.5 683.1 L1087.5 683.1 L1088.7 683.1 L1088.7 683.1 L1089.8 683.1 L1089.8 672.4 L1091.0 672.4 L1091.0 678.6 L1092.2 678.6 L1092.2 677.0 L1093.3 677.0 L1093.3 700.0 L1094.5 700.0 L1094.5 675.5 L1095.7 675.5 L1095.7 675.5 L1096.8 675.5 L1096.8 677.0 L1098.0 677.0 L1098.0 672.4 L1099.2 672.4 L1099.2 683.1 L1100.3 683.1 L1100.3 683.1 L1101.5 683.1 L1101.5 767.2 L1102.7 767.2 L1102.7 651.9 L1103.8 651.9 L1103.8 678.6 L1105.0 678.6 L1105.0 678.6 L1106.2 678.6 L1106.2 678.6 L1107.3 678.6 L1107.3 678.6 L1108.5 678.6 L1108.5 689.2 L1109.6 689.2 L1109.6 689.2 L1110.8 689.2 L1110.8 689.2 L1112.0 689.2 L1112.0 704.0 L1113.1 704.0 L1113.1 672.4 L1114.3 672.4 L1114.3 677.0 L1115.5 677.0 L1115.5 683.1 L1116.6 683.1 L1116.6 672.4 L1117.8 672.4 L1117.8 672.4 L1119.0 672.4 L1119.0 665.0 L1120.1 665.0 L1120.1 755.6 L1121.3 755.6 L1121.3 755.6 L1122.5 755.6 L1122.5 677.0 L1123.6 677.0 L1123.6 683.1 L1124.8 683.1 L1124.8 683.1 L1126.0 683.1 L1126.0 675.5 L1127.1 675.5 L1127.1 686.2 L1128.3 686.2 L1128.3 689.2 L1129.5 689.2 L1129.5 805.4 L1130.6 805.4 L1130.6 805.4 L1131.8 805.4 L1131.8 680.1 L1132.9 680.1 L1132.9 674.0 L1134.1 674.0 L1134.1 674.0 L1135.3 674.0 L1135.3 680.1 L1136.4 680.1 L1136.4 648.2 L1137.6 648.2 L1137.6 680.1 L1138.8 680.1 L1138.8 787.4 L1139.9 787.4 L1139.9 787.4 L1141.1 787.4 L1141.1 672.4 L1142.3 672.4 L1142.3 672.4 L1143.4 672.4 L1143.4 680.1 L1144.6 680.1 L1144.6 680.1 L1145.8 680.1 L1145.8 680.1 L1146.9 680.1 L1146.9 675.5 L1148.1 675.5 L1148.1 782.2 L1149.3 782.2 L1149.3 782.2 L1150.4 782.2 L1150.4 689.2 L1151.6 689.2 L1151.6 686.2 L1152.8 686.2 L1152.8 686.2 L1153.9 686.2 L1153.9 675.5 L1155.1 675.5 L1155.1 677.0 L1156.2 677.0 L1156.2 677.0 L1157.4 677.0 L1157.4 677.0 L1158.6 677.0 L1158.6 677.0 L1159.7 677.0 L1159.7 700.0 L1160.9 700.0 L1160.9 686.2 L1162.1 686.2 L1162.1 686.2 L1163.2 686.2 L1163.2 686.2 L1164.4 686.2 L1164.4 686.2 L1165.6 686.2 L1165.6 695.0 L1166.7 695.0 L1166.7 680.1 L1167.9 680.1 L1167.9 677.0 L1169.1 677.0 L1169.1 672.4 L1170.2 672.4 L1170.2 672.4 L1171.4 672.4 L1171.4 675.5 L1172.6 675.5 L1172.6 675.5 L1173.7 675.5 L1173.7 680.1 L1174.9 680.1 L1174.9 696.0 L1176.0 696.0 L1176.0 680.1 L1177.2 680.1 L1177.2 680.1 L1178.4 680.1 L1178.4 674.0 L1179.5 674.0 L1179.5 674.0 L1180.7 674.0 L1180.7 689.2 L1181.9 689.2 L1181.9 678.6 L1183.0 678.6 L1183.0 689.2 L1184.2 689.2 L1184.2 670.7 L1185.4 670.7 L1185.4 791.5 L1186.5 791.5 L1186.5 791.5 L1187.7 791.5 L1187.7 879.5 L908.1 879.5 Z" fill="#00C9FF" fill-opacity=".15"/>
<g fill="none" stroke-width="1.05">
<path d="M908.1 672.4 L909.3 672.4 L909.3 693.1 L910.4 693.1 L910.4 689.2 L911.6 689.2 L911.6 689.2 L912.8 689.2 L912.8 683.1 L913.9 683.1 L913.9 683.1 L915.1 683.1 L915.1 700.0 L916.3 700.0 L916.3 672.4 L917.4 672.4 L917.4 680.1 L918.6 680.1 L918.6 680.1 L919.8 680.1 L919.8 689.2 L920.9 689.2 L920.9 680.1 L922.1 680.1 L922.1 680.1 L923.2 680.1 L923.2 737.3 L924.4 737.3 L924.4 675.5 L925.6 675.5 L925.6 675.5 L926.7 675.5 L926.7 705.0 L927.9 705.0 L927.9 675.5 L929.1 675.5 L929.1 678.6 L930.2 678.6 L930.2 678.6 L931.4 678.6 L931.4 725.2 L932.6 725.2 L932.6 680.1 L933.7 680.1 L933.7 680.1 L934.9 680.1 L934.9 675.5 L936.1 675.5 L936.1 675.5 L937.2 675.5 L937.2 675.5 L938.4 675.5 L938.4 677.0 L939.6 677.0 L939.6 739.0 L940.7 739.0 L940.7 677.0 L941.9 677.0 L941.9 675.5 L943.0 675.5 L943.1 712.0 L944.2 712.0 L944.2 675.5 L945.4 675.5 L945.4 675.5 L946.5 675.5 L946.5 675.5 L947.7 675.5 L947.7 753.0 L948.9 753.0 L948.9 674.0 L950.0 674.0 L950.0 683.1 L951.2 683.1 L951.2 715.0 L952.4 715.0 L952.4 683.1 L953.5 683.1 L953.5 683.1 L954.7 683.1 L954.7 683.1 L955.9 683.1 L955.9 713.2 L957.0 713.2 L957.0 686.2 L958.2 686.2 L958.2 666.9 L959.4 666.9 L959.4 686.2 L960.5 686.2 L960.5 675.5 L961.7 675.5 L961.7 675.5 L962.9 675.5 L962.9 677.0 L964.0 677.0 L964.0 749.3 L965.2 749.3 L965.2 677.0 L966.4 677.0 L966.4 677.0 L967.5 677.0 L967.5 686.2 L968.7 686.2 L968.7 686.2 L969.8 686.2 L969.8 672.4 L971.0 672.4 L971.0 697.2 L972.2 697.2 L972.2 662.1 L973.3 662.1 L973.3 683.1 L974.5 683.1 L974.5 683.1 L975.7 683.1 L975.7 686.2 L976.8 686.2 L976.8 686.2 L978.0 686.2 L978.0 686.2 L979.2 686.2 L979.2 677.0 L980.3 677.0 L980.3 677.0 L981.5 677.0 L981.5 767.2 L982.7 767.2 L982.7 767.2 L983.8 767.2 L983.8 677.0 L985.0 677.0 L985.0 677.0 L986.2 677.0 L986.2 678.6 L987.3 678.6 L987.3 678.6 L988.5 678.6 L988.5 675.5 L989.6 675.5 L989.6 700.0 L990.8 700.0 L990.8 675.5 L992.0 675.5 L992.0 675.5 L993.1 675.5 L993.1 662.1 L994.3 662.1 L994.3 683.1 L995.5 683.1 L995.5 689.2 L996.6 689.2 L996.6 678.6 L997.8 678.6 L997.8 678.6 L999.0 678.6 L999.0 705.0 L1000.1 705.0 L1000.1 677.0 L1001.3 677.0 L1001.3 683.1 L1002.5 683.1 L1002.5 683.1 L1003.6 683.1 L1003.6 683.1 L1004.8 683.1 L1004.8 686.2 L1006.0 686.2 L1006.0 686.2 L1007.1 686.2 L1007.1 773.6 L1008.3 773.6 L1008.3 773.6 L1009.5 773.6 L1009.5 677.0 L1010.6 677.0 L1010.6 677.0 L1011.8 677.0 L1011.8 660.6 L1013.0 660.6 L1013.0 674.0 L1014.1 674.0 L1014.1 678.6 L1015.3 678.6 L1015.3 680.1 L1016.4 680.1 L1016.4 783.7 L1017.6 783.7 L1017.6 675.5 L1018.8 675.5 L1018.8 689.2 L1019.9 689.2 L1019.9 689.2 L1021.1 689.2 L1021.1 672.4 L1022.3 672.4 L1022.3 689.2 L1023.4 689.2 L1023.4 683.1 L1024.6 683.1 L1024.6 700.0 L1025.8 700.0 L1025.8 683.1 L1026.9 683.1 L1026.9 680.1 L1028.1 680.1 L1028.1 680.1 L1029.3 680.1 L1029.3 680.1 L1030.4 680.1 L1030.4 680.1 L1031.6 680.1 L1031.6 678.6 L1032.8 678.6 L1032.8 664.3 L1033.9 664.3 L1033.9 678.6 L1035.1 678.6 L1035.1 739.6 L1036.2 739.6 L1036.2 683.1 L1037.4 683.1 L1037.4 686.2 L1038.6 686.2 L1038.6 686.2 L1039.7 686.2 L1039.7 686.2 L1040.9 686.2 L1040.9 686.2 L1042.1 686.2 L1042.1 683.1 L1043.2 683.1 L1043.2 678.6 L1044.4 678.6 L1044.4 677.0 L1045.6 677.0 L1045.6 744.4 L1046.7 744.4 L1046.7 744.4 L1047.9 744.4 L1047.9 744.4 L1049.1 744.4 L1049.1 689.2 L1050.2 689.2 L1050.2 675.5 L1051.4 675.5 L1051.4 675.5 L1052.6 675.5 L1052.6 674.0 L1053.7 674.0 L1053.7 674.0 L1054.9 674.0 L1054.9 670.7 L1056.1 670.7 L1056.1 678.6 L1057.2 678.6 L1057.2 678.6 L1058.4 678.6 L1058.4 677.0 L1059.5 677.0 L1059.5 683.1 L1060.7 683.1 L1060.7 683.1 L1061.9 683.1 L1061.9 683.1 L1063.0 683.1 L1063.0 739.9 L1064.2 739.9 L1064.2 674.0 L1065.4 674.0 L1065.4 689.2 L1066.5 689.2 L1066.5 689.2 L1067.7 689.2 L1067.7 689.2 L1068.9 689.2 L1068.9 711.8 L1070.0 711.8 L1070.0 680.1 L1071.2 680.1 L1071.2 680.1 L1072.4 680.1 L1072.4 791.5 L1073.5 791.5 L1073.5 791.5 L1074.7 791.5 L1074.7 680.1 L1075.9 680.1 L1075.9 680.1 L1077.0 680.1 L1077.0 668.8 L1078.2 668.8 L1078.2 680.1 L1079.4 680.1 L1079.4 683.1 L1080.5 683.1 L1080.5 683.1 L1081.7 683.1 L1081.7 683.1 L1082.8 683.1 L1082.8 683.1 L1084.0 683.1 L1084.0 705.0 L1085.2 705.0 L1085.2 683.1 L1086.3 683.1 L1086.3 683.1 L1087.5 683.1 L1087.5 683.1 L1088.7 683.1 L1088.7 683.1 L1089.8 683.1 L1089.8 672.4 L1091.0 672.4 L1091.0 678.6 L1092.2 678.6 L1092.2 677.0 L1093.3 677.0 L1093.3 700.0 L1094.5 700.0 L1094.5 675.5 L1095.7 675.5 L1095.7 675.5 L1096.8 675.5 L1096.8 677.0 L1098.0 677.0 L1098.0 672.4 L1099.2 672.4 L1099.2 683.1 L1100.3 683.1 L1100.3 683.1 L1101.5 683.1 L1101.5 767.2 L1102.7 767.2 L1102.7 651.9 L1103.8 651.9 L1103.8 678.6 L1105.0 678.6 L1105.0 678.6 L1106.2 678.6 L1106.2 678.6 L1107.3 678.6 L1107.3 678.6 L1108.5 678.6 L1108.5 689.2 L1109.6 689.2 L1109.6 689.2 L1110.8 689.2 L1110.8 689.2 L1112.0 689.2 L1112.0 704.0 L1113.1 704.0 L1113.1 672.4 L1114.3 672.4 L1114.3 677.0 L1115.5 677.0 L1115.5 683.1 L1116.6 683.1 L1116.6 672.4 L1117.8 672.4 L1117.8 672.4 L1119.0 672.4 L1119.0 665.0 L1120.1 665.0 L1120.1 755.6 L1121.3 755.6 L1121.3 755.6 L1122.5 755.6 L1122.5 677.0 L1123.6 677.0 L1123.6 683.1 L1124.8 683.1 L1124.8 683.1 L1126.0 683.1 L1126.0 675.5 L1127.1 675.5 L1127.1 686.2 L1128.3 686.2 L1128.3 689.2 L1129.5 689.2 L1129.5 805.4 L1130.6 805.4 L1130.6 805.4 L1131.8 805.4 L1131.8 680.1 L1132.9 680.1 L1132.9 674.0 L1134.1 674.0 L1134.1 674.0 L1135.3 674.0 L1135.3 680.1 L1136.4 680.1 L1136.4 648.2 L1137.6 648.2 L1137.6 680.1 L1138.8 680.1 L1138.8 787.4 L1139.9 787.4 L1139.9 787.4 L1141.1 787.4 L1141.1 672.4 L1142.3 672.4 L1142.3 672.4 L1143.4 672.4 L1143.4 680.1 L1144.6 680.1 L1144.6 680.1 L1145.8 680.1 L1145.8 680.1 L1146.9 680.1 L1146.9 675.5 L1148.1 675.5 L1148.1 782.2 L1149.3 782.2 L1149.3 782.2 L1150.4 782.2 L1150.4 689.2 L1151.6 689.2 L1151.6 686.2 L1152.8 686.2 L1152.8 686.2 L1153.9 686.2 L1153.9 675.5 L1155.1 675.5 L1155.1 677.0 L1156.2 677.0 L1156.2 677.0 L1157.4 677.0 L1157.4 677.0 L1158.6 677.0 L1158.6 677.0 L1159.7 677.0 L1159.7 700.0 L1160.9 700.0 L1160.9 686.2 L1162.1 686.2 L1162.1 686.2 L1163.2 686.2 L1163.2 686.2 L1164.4 686.2 L1164.4 686.2 L1165.6 686.2 L1165.6 695.0 L1166.7 695.0 L1166.7 680.1 L1167.9 680.1 L1167.9 677.0 L1169.1 677.0 L1169.1 672.4 L1170.2 672.4 L1170.2 672.4 L1171.4 672.4 L1171.4 675.5 L1172.6 675.5 L1172.6 675.5 L1173.7 675.5 L1173.7 680.1 L1174.9 680.1 L1174.9 696.0 L1176.0 696.0 L1176.0 680.1 L1177.2 680.1 L1177.2 680.1 L1178.4 680.1 L1178.4 674.0 L1179.5 674.0 L1179.5 674.0 L1180.7 674.0 L1180.7 689.2 L1181.9 689.2 L1181.9 678.6 L1183.0 678.6 L1183.0 689.2 L1184.2 689.2 L1184.2 670.7 L1185.4 670.7 L1185.4 791.5 L1186.5 791.5 L1186.5 791.5 L1187.7 791.5" stroke="#00C9FF" stroke-width="1.4"/>
<path d="M915.1 651.9 L916.3 651.9 L916.3 651.9 L917.4 651.9 L917.4 651.9 L918.6 651.9 L918.6 651.9 L919.8 651.9 L919.8 651.9 L920.9 651.9 L920.9 651.9 L922.1 651.9 L922.1 651.9 L923.2 651.9 L923.2 651.9 L924.4 651.9 L924.4 651.9 L925.6 651.9 L925.6 670.7 L926.7 670.7 L926.7 670.7 L927.9 670.7 L927.9 670.7 L929.1 670.7 L929.1 659.4 L930.2 659.4 L930.2 659.4 L931.4 659.4 L931.4 659.4 L932.6 659.4 L932.6 659.4 L933.7 659.4 L933.7 659.4 L934.9 659.4 L934.9 650.8 L936.1 650.8 L936.1 650.8 L937.2 650.8 L937.2 650.8 L938.4 650.8 L938.4 650.8 L939.6 650.8 L939.6 650.8 L940.7 650.8 L940.7 650.8 L941.9 650.8 L941.9 650.8 L943.0 650.8 L943.1 650.8 L944.2 650.8 L944.2 650.8 L945.4 650.8 L945.4 650.8 L946.5 650.8 L946.5 650.8 L947.7 650.8 L947.7 650.8 L948.9 650.8 L948.9 650.8 L950.0 650.8 L950.0 650.8 L951.2 650.8 L951.2 650.8 L952.4 650.8 L952.4 650.8 L953.5 650.8 L953.5 650.8 L954.7 650.8 L954.7 650.8 L955.9 650.8 L955.9 650.8 L957.0 650.8 L957.0 650.8 L958.2 650.8 L958.2 656.4 L959.4 656.4 L959.4 656.4 L960.5 656.4 L960.5 656.4 L961.7 656.4 L961.7 656.4 L962.9 656.4 L962.9 656.4 L964.0 656.4 L964.0 656.4 L965.2 656.4 L965.2 655.7 L966.4 655.7 L966.4 655.7 L967.5 655.7 L967.5 655.7 L968.7 655.7 L968.7 655.7 L969.8 655.7 L969.8 655.7 L971.0 655.7 L971.0 655.7 L972.2 655.7 L972.2 655.7 L973.3 655.7 L973.3 655.7 L974.5 655.7 L974.5 655.7 L975.7 655.7 L975.7 655.7 L976.8 655.7 L976.8 657.6 L978.0 657.6 L978.0 657.6 L979.2 657.6 L979.2 657.6 L980.3 657.6 L980.3 657.6 L981.5 657.6 L981.5 657.6 L982.7 657.6 L982.7 657.6 L983.8 657.6 L983.8 657.6 L985.0 657.6 L985.0 657.6 L986.2 657.6 L986.2 657.6 L987.3 657.6 L987.3 657.6 L988.5 657.6 L988.5 657.6 L989.6 657.6 L989.6 650.8 L990.8 650.8 L990.8 650.8 L992.0 650.8 L992.0 650.8 L993.1 650.8 L993.1 650.8 L994.3 650.8 L994.3 650.8 L995.5 650.8 L995.5 650.8 L996.6 650.8 L996.6 650.8 L997.8 650.8 L997.8 650.8 L999.0 650.8 L999.0 650.8 L1000.1 650.8 L1000.1 650.8 L1001.3 650.8 L1001.3 650.8 L1002.5 650.8 L1002.5 650.8 L1003.6 650.8 L1003.6 650.8 L1004.8 650.8 L1004.8 650.8 L1006.0 650.8 L1006.0 650.8 L1007.1 650.8 L1007.1 650.8 L1008.3 650.8 L1008.3 650.8 L1009.5 650.8 L1009.5 650.8 L1010.6 650.8 L1010.6 652.3 L1011.8 652.3 L1011.8 652.3 L1013.0 652.3 L1013.0 652.3 L1014.1 652.3 L1014.1 652.3 L1015.3 652.3 L1015.3 676.3 L1016.4 676.3 L1016.4 676.3 L1017.6 676.3 L1017.6 676.3 L1018.8 676.3 L1018.8 676.3 L1019.9 676.3 L1019.9 676.3 L1021.1 676.3 L1021.1 660.6 L1022.3 660.6 L1022.3 660.6 L1023.4 660.6 L1023.4 660.6 L1024.6 660.6 L1024.6 660.6 L1025.8 660.6 L1025.8 660.6 L1026.9 660.6 L1026.9 660.6 L1028.1 660.6 L1028.1 660.6 L1029.3 660.6 L1029.3 672.5 L1030.4 672.5 L1030.4 672.5 L1031.6 672.5 L1031.6 672.5 L1032.8 672.5 L1032.8 653.1 L1033.9 653.1 L1033.9 653.1 L1035.1 653.1 L1035.1 653.1 L1036.2 653.1 L1036.2 653.1 L1037.4 653.1 L1037.4 653.1 L1038.6 653.1 L1038.6 653.1 L1039.7 653.1 L1039.7 653.1 L1040.9 653.1 L1040.9 653.1 L1042.1 653.1 L1042.1 653.1 L1043.2 653.1 L1043.2 653.1 L1044.4 653.1 L1044.4 653.1 L1045.6 653.1 L1045.6 653.1 L1046.7 653.1 L1046.7 653.1 L1047.9 653.1 L1047.9 653.1 L1049.1 653.1 L1049.1 652.1 L1050.2 652.1 L1050.2 652.1 L1051.4 652.1 L1051.4 652.1 L1052.6 652.1 L1052.6 652.1 L1053.7 652.1 L1053.7 652.1 L1054.9 652.1 L1054.9 652.1 L1056.1 652.1 L1056.1 652.1 L1057.2 652.1 L1057.2 646.9 L1058.4 646.9 L1058.4 646.9 L1059.5 646.9 L1059.5 646.9 L1060.7 646.9 L1060.7 646.9 L1061.9 646.9 L1061.9 646.9 L1063.0 646.9 L1063.0 646.9 L1064.2 646.9 L1064.2 646.9 L1065.4 646.9 L1065.4 680.9 L1066.5 680.9 L1066.5 680.9 L1067.7 680.9 L1067.7 680.9 L1068.9 680.9 L1068.9 680.9 L1070.0 680.9 L1070.0 655.8 L1071.2 655.8 L1071.2 655.8 L1072.4 655.8 L1072.4 659.9 L1073.5 659.9 L1073.5 659.9 L1074.7 659.9 L1074.7 659.9 L1075.9 659.9 L1075.9 659.9 L1077.0 659.9 L1077.0 659.9 L1078.2 659.9 L1078.2 663.1 L1079.4 663.1 L1079.4 663.1 L1080.5 663.1 L1080.5 663.1 L1081.7 663.1 L1081.7 663.1 L1082.8 663.1 L1082.8 663.1 L1084.0 663.1 L1084.0 671.2 L1085.2 671.2 L1085.2 671.2 L1086.3 671.2 L1086.3 650.1 L1087.5 650.1 L1087.5 650.1 L1088.7 650.1 L1088.7 663.9 L1089.8 663.9 L1089.8 663.9 L1091.0 663.9 L1091.0 644.9 L1092.2 644.9 L1092.2 644.9 L1093.3 644.9 L1093.3 644.9 L1094.5 644.9 L1094.5 644.9 L1095.7 644.9 L1095.7 655.8 L1096.8 655.8 L1096.8 655.8 L1098.0 655.8 L1098.0 658.2 L1099.2 658.2 L1099.2 658.2 L1100.3 658.2 L1100.3 658.2 L1101.5 658.2 L1101.5 658.2 L1102.7 658.2 L1102.7 683.4 L1103.8 683.4 L1103.8 683.4 L1105.0 683.4 L1105.0 683.4 L1106.2 683.4 L1106.2 683.4 L1107.3 683.4 L1107.3 683.4 L1108.5 683.4 L1108.5 683.4 L1109.6 683.4 L1109.6 650.9 L1110.8 650.9 L1110.8 650.9 L1112.0 650.9 L1112.0 650.9 L1113.1 650.9 L1113.1 650.9 L1114.3 650.9 L1114.3 649.3 L1115.5 649.3 L1115.5 649.3 L1116.6 649.3 L1116.6 649.3 L1117.8 649.3 L1117.8 649.3 L1119.0 649.3 L1119.0 649.3 L1120.1 649.3 L1120.1 649.3 L1121.3 649.3 L1121.3 667.2 L1122.5 667.2 L1122.5 667.2 L1123.6 667.2 L1123.6 650.9 L1124.8 650.9 L1124.8 650.9 L1126.0 650.9 L1126.0 650.9 L1127.1 650.9 L1127.1 650.9 L1128.3 650.9 L1128.3 650.9 L1129.5 650.9 L1129.5 650.9 L1130.6 650.9 L1130.6 647.2 L1131.8 647.2 L1131.8 647.2 L1132.9 647.2 L1132.9 647.2 L1134.1 647.2 L1134.1 647.2 L1135.3 647.2 L1135.3 647.2 L1136.4 647.2 L1136.4 656.6 L1137.6 656.6 L1137.6 656.6 L1138.8 656.6 L1138.8 656.6 L1139.9 656.6 L1139.9 672.8 L1141.1 672.8 L1141.1 672.8 L1142.3 672.8 L1142.3 672.8 L1143.4 672.8 L1143.4 653.4 L1144.6 653.4 L1144.6 653.4 L1145.8 653.4 L1145.8 653.4 L1146.9 653.4 L1146.9 653.4 L1148.1 653.4 L1148.1 653.4 L1149.3 653.4 L1149.3 672.8 L1150.4 672.8 L1150.4 672.8 L1151.6 672.8 L1151.6 650.9 L1152.8 650.9 L1152.8 650.9 L1153.9 650.9 L1153.9 650.9 L1155.1 650.9 L1155.1 650.9 L1156.2 650.9 L1156.2 650.9 L1157.4 650.9 L1157.4 650.9 L1158.6 650.9 L1158.6 650.9 L1159.7 650.9 L1159.7 650.9 L1160.9 650.9 L1160.9 650.9 L1162.1 650.9 L1162.1 650.9 L1163.2 650.9 L1163.2 650.9 L1164.4 650.9 L1164.4 650.9 L1165.6 650.9 L1165.6 650.9 L1166.7 650.9 L1166.7 650.9 L1167.9 650.9 L1167.9 650.9 L1169.1 650.9 L1169.1 685.0 L1170.2 685.0 L1170.2 685.0 L1171.4 685.0 L1171.4 685.0 L1172.6 685.0 L1172.6 685.0 L1173.7 685.0 L1173.7 646.9 L1174.9 646.9 L1174.9 646.9 L1176.0 646.9 L1176.0 646.9 L1177.2 646.9 L1177.2 646.9 L1178.4 646.9 L1178.4 646.9 L1179.5 646.9 L1179.5 646.9 L1180.7 646.9" stroke="#9394FF" stroke-width="1.3"/>
<path d="M908.1 669.4 L909.3 669.4 L909.3 669.4 L910.4 669.4 L910.4 637.3 L911.6 637.3 L911.6 635.8 L912.8 635.8 L912.8 634.3 L913.9 634.3 L913.9 635.8 L915.1 635.8 L915.1 635.8 L916.3 635.8 L916.3 625.1 L917.4 625.1 L917.4 625.1 L918.6 625.1 L918.6 664.7 L919.8 664.7 L919.8 664.7 L920.9 664.7 L920.9 628.2 L922.1 628.2 L922.1 628.2 L923.2 628.2 L923.2 625.1 L924.4 625.1 L924.4 628.2 L925.6 628.2 L925.6 634.3 L926.7 634.3 L926.7 635.8 L927.9 635.8 L927.9 656.6 L929.1 656.6 L929.1 656.6 L930.2 656.6 L930.2 628.2 L931.4 628.2 L931.4 625.1 L932.6 625.1 L932.6 629.7 L933.7 629.7 L933.7 628.2 L934.9 628.2 L934.9 674.5 L936.1 674.5 L936.1 674.5 L937.2 674.5 L937.2 674.5 L938.4 674.5 L938.4 674.5 L939.6 674.5 L939.6 674.5 L940.7 674.5 L940.7 674.5 L941.9 674.5 L941.9 629.7 L943.0 629.7 L943.1 629.7 L944.2 629.7 L944.2 625.1 L945.4 625.1 L945.4 634.3 L946.5 634.3 L946.5 634.3 L947.7 634.3 L947.7 634.3 L948.9 634.3 L948.9 634.3 L950.0 634.3 L950.0 634.3 L951.2 634.3 L951.2 635.8 L952.4 635.8 L952.4 635.8 L953.5 635.8 L953.5 635.8 L954.7 635.8 L954.7 625.1 L955.9 625.1 L955.9 625.1 L957.0 625.1 L957.0 625.1 L958.2 625.1 L958.2 687.4 L959.4 687.4 L959.4 628.2 L960.5 628.2 L960.5 623.6 L961.7 623.6 L961.7 623.6 L962.9 623.6 L962.9 623.6 L964.0 623.6 L964.0 623.6 L965.2 623.6 L965.2 637.3 L966.4 637.3 L966.4 637.3 L967.5 637.3 L967.5 672.8 L968.7 672.8 L968.7 623.6 L969.8 623.6 L969.8 629.7 L971.0 629.7 L971.0 625.1 L972.2 625.1 L972.2 625.1 L973.3 625.1 L973.3 625.1 L974.5 625.1 L974.5 623.6 L975.7 623.6 L975.7 637.3 L976.8 637.3 L976.8 637.3 L978.0 637.3 L978.0 637.3 L979.2 637.3 L979.2 637.3 L980.3 637.3 L980.3 637.3 L981.5 637.3 L981.5 634.3 L982.7 634.3 L982.7 634.3 L983.8 634.3 L983.8 674.5 L985.0 674.5 L985.0 674.5 L986.2 674.5 L986.2 637.3 L987.3 637.3 L987.3 635.8 L988.5 635.8 L988.5 635.8 L989.6 635.8 L989.6 695.5 L990.8 695.5 L990.8 695.5 L992.0 695.5 L992.0 634.3 L993.1 634.3 L993.1 623.6 L994.3 623.6 L994.3 623.6 L995.5 623.6 L995.5 623.6 L996.6 623.6 L996.6 623.6 L997.8 623.6 L997.8 623.6 L999.0 623.6 L999.0 623.6 L1000.1 623.6 L1000.1 637.3 L1001.3 637.3 L1001.3 612.7 L1002.5 612.7 L1002.5 637.3 L1003.6 637.3 L1003.6 637.3 L1004.8 637.3 L1004.8 637.3 L1006.0 637.3 L1006.0 637.3 L1007.1 637.3 L1007.1 634.3 L1008.3 634.3 L1008.3 637.3 L1009.5 637.3 L1009.5 637.3 L1010.6 637.3 L1010.6 634.3 L1011.8 634.3 L1011.8 656.6 L1013.0 656.6 L1013.0 634.3 L1014.1 634.3 L1014.1 623.6 L1015.3 623.6 L1015.3 637.3 L1016.4 637.3 L1016.4 637.3 L1017.6 637.3 L1017.6 646.9 L1018.8 646.9 L1018.8 646.9 L1019.9 646.9 L1019.9 628.2 L1021.1 628.2 L1021.1 623.6 L1022.3 623.6 L1022.3 623.6 L1023.4 623.6 L1023.4 623.6 L1024.6 623.6 L1024.6 637.3 L1025.8 637.3 L1025.8 629.7 L1026.9 629.7 L1026.9 629.7 L1028.1 629.7 L1028.1 634.3 L1029.3 634.3 L1029.3 634.3 L1030.4 634.3 L1030.4 634.3 L1031.6 634.3 L1031.6 635.8 L1032.8 635.8 L1032.8 635.8 L1033.9 635.8 L1033.9 623.6 L1035.1 623.6 L1035.1 625.1 L1036.2 625.1 L1036.2 628.2 L1037.4 628.2 L1037.4 671.2 L1038.6 671.2 L1038.6 671.2 L1039.7 671.2 L1039.7 637.3 L1040.9 637.3 L1040.9 637.3 L1042.1 637.3 L1042.1 637.3 L1043.2 637.3 L1043.2 629.7 L1044.4 629.7 L1044.4 628.2 L1045.6 628.2 L1045.6 628.2 L1046.7 628.2 L1046.7 623.6 L1047.9 623.6 L1047.9 623.6 L1049.1 623.6 L1049.1 623.6 L1050.2 623.6 L1050.2 628.2 L1051.4 628.2 L1051.4 623.6 L1052.6 623.6 L1052.6 623.6 L1053.7 623.6 L1053.7 623.6 L1054.9 623.6 L1054.9 623.6 L1056.1 623.6 L1056.1 672.8 L1057.2 672.8 L1057.2 628.2 L1058.4 628.2 L1058.4 628.2 L1059.5 628.2 L1059.5 628.2 L1060.7 628.2 L1060.7 628.2 L1061.9 628.2 L1061.9 620.0 L1063.0 620.0 L1063.0 629.7 L1064.2 629.7 L1064.2 625.1 L1065.4 625.1 L1065.4 625.1 L1066.5 625.1 L1066.5 625.1 L1067.7 625.1 L1067.7 625.1 L1068.9 625.1 L1068.9 637.3 L1070.0 637.3 L1070.0 629.7 L1071.2 629.7 L1071.2 629.7 L1072.4 629.7 L1072.4 629.7 L1073.5 629.7 L1073.5 629.7 L1074.7 629.7 L1074.7 680.1 L1075.9 680.1 L1075.9 680.1 L1077.0 680.1 L1077.0 629.7 L1078.2 629.7 L1078.2 623.6 L1079.4 623.6 L1079.4 623.6 L1080.5 623.6 L1080.5 623.6 L1081.7 623.6 L1081.7 623.6 L1082.8 623.6 L1082.8 623.6 L1084.0 623.6 L1084.0 619.0 L1085.2 619.0 L1085.2 628.2 L1086.3 628.2 L1086.3 628.2 L1087.5 628.2 L1087.5 628.2 L1088.7 628.2 L1088.7 628.2 L1089.8 628.2 L1089.8 634.3 L1091.0 634.3 L1091.0 634.3 L1092.2 634.3 L1092.2 628.2 L1093.3 628.2 L1093.3 628.2 L1094.5 628.2 L1094.5 674.5 L1095.7 674.5 L1095.7 625.1 L1096.8 625.1 L1096.8 629.7 L1098.0 629.7 L1098.0 629.7 L1099.2 629.7 L1099.2 623.6 L1100.3 623.6 L1100.3 635.8 L1101.5 635.8 L1101.5 635.8 L1102.7 635.8 L1102.7 648.5 L1103.8 648.5 L1103.8 635.8 L1105.0 635.8 L1105.0 629.7 L1106.2 629.7 L1106.2 629.7 L1107.3 629.7 L1107.3 629.7 L1108.5 629.7 L1108.5 634.3 L1109.6 634.3 L1109.6 634.3 L1110.8 634.3 L1110.8 634.3 L1112.0 634.3 L1112.0 635.8 L1113.1 635.8 L1113.1 676.9 L1114.3 676.9 L1114.3 625.1 L1115.5 625.1 L1115.5 628.2 L1116.6 628.2 L1116.6 628.2 L1117.8 628.2 L1117.8 628.2 L1119.0 628.2 L1119.0 643.6 L1120.1 643.6 L1120.1 623.6 L1121.3 623.6 L1121.3 623.6 L1122.5 623.6 L1122.5 634.3 L1123.6 634.3 L1123.6 634.3 L1124.8 634.3 L1124.8 637.3 L1126.0 637.3 L1126.0 637.3 L1127.1 637.3 L1127.1 637.3 L1128.3 637.3 L1128.3 623.6 L1129.5 623.6 L1129.5 623.6 L1130.6 623.6 L1130.6 621.0 L1131.8 621.0 L1131.8 695.5 L1132.9 695.5 L1132.9 623.6 L1134.1 623.6 L1134.1 623.6 L1135.3 623.6 L1135.3 623.6 L1136.4 623.6 L1136.4 629.7 L1137.6 629.7 L1137.6 629.7 L1138.8 629.7 L1138.8 635.8 L1139.9 635.8 L1139.9 635.8 L1141.1 635.8 L1141.1 635.8 L1142.3 635.8 L1142.3 695.5 L1143.4 695.5 L1143.4 695.5 L1144.6 695.5 L1144.6 623.6 L1145.8 623.6 L1145.8 623.6 L1146.9 623.6 L1146.9 623.6 L1148.1 623.6 L1148.1 623.6 L1149.3 623.6 L1149.3 634.3 L1150.4 634.3 L1150.4 634.3 L1151.6 634.3 L1151.6 634.3 L1152.8 634.3 L1152.8 616.0 L1153.9 616.0 L1153.9 623.6 L1155.1 623.6 L1155.1 623.6 L1156.2 623.6 L1156.2 623.6 L1157.4 623.6 L1157.4 616.0 L1158.6 616.0 L1158.6 683.4 L1159.7 683.4 L1159.7 623.6 L1160.9 623.6 L1160.9 616.0 L1162.1 616.0 L1162.1 625.1 L1163.2 625.1 L1163.2 625.1 L1164.4 625.1 L1164.4 625.1 L1165.6 625.1 L1165.6 623.6 L1166.7 623.6 L1166.7 623.6 L1167.9 623.6 L1167.9 623.6 L1169.1 623.6 L1169.1 625.1 L1170.2 625.1 L1170.2 625.1 L1171.4 625.1 L1171.4 625.1 L1172.6 625.1 L1172.6 625.1 L1173.7 625.1 L1173.7 616.1 L1174.9 616.1 L1174.9 625.1 L1176.0 625.1 L1176.0 625.1 L1177.2 625.1 L1177.2 625.1 L1178.4 625.1 L1178.4 625.1 L1179.5 625.1 L1179.5 619.3 L1180.7 619.3 L1180.7 628.2 L1181.9 628.2 L1181.9 628.2 L1183.0 628.2 L1183.0 628.2 L1184.2 628.2 L1184.2 628.2 L1185.4 628.2 L1185.4 700.0 L1186.5 700.0 L1186.5 625.1 L1187.7 625.1" stroke="#4ED8A0" stroke-width="1.2"/>
<path d="M1168.2 628 V870.9" stroke="#37b39a" stroke-width="1.3"/>
<path d="M908.1 672.4 L909.3 672.4 L909.3 693.1 L910.4 693.1 L910.4 689.2 L911.6 689.2 L911.6 689.2 L912.8 689.2 L912.8 683.1 L913.9 683.1 L913.9 683.1 L915.1 683.1 L915.1 700.0 L916.3 700.0 L916.3 672.4 L917.4 672.4 L917.4 680.1 L918.6 680.1 L918.6 680.1 L919.8 680.1 L919.8 689.2 L920.9 689.2 L920.9 680.1 L922.1 680.1 L922.1 680.1 L923.2 680.1 L923.2 737.3 L924.4 737.3 L924.4 675.5 L925.6 675.5 L925.6 675.5 L926.7 675.5 L926.7 705.0 L927.9 705.0 L927.9 675.5 L929.1 675.5 L929.1 678.6 L930.2 678.6 L930.2 678.6 L931.4 678.6 L931.4 725.2 L932.6 725.2 L932.6 680.1 L933.7 680.1 L933.7 680.1 L934.9 680.1 L934.9 675.5 L936.1 675.5 L936.1 675.5 L937.2 675.5 L937.2 675.5 L938.4 675.5 L938.4 677.0 L939.6 677.0 L939.6 739.0 L940.7 739.0 L940.7 677.0 L941.9 677.0 L941.9 675.5 L943.0 675.5 L943.1 712.0 L944.2 712.0 L944.2 675.5 L945.4 675.5 L945.4 675.5 L946.5 675.5 L946.5 675.5 L947.7 675.5 L947.7 753.0 L948.9 753.0 L948.9 674.0 L950.0 674.0 L950.0 683.1 L951.2 683.1 L951.2 715.0 L952.4 715.0 L952.4 683.1 L953.5 683.1 L953.5 683.1 L954.7 683.1 L954.7 683.1 L955.9 683.1 L955.9 713.2 L957.0 713.2 L957.0 686.2 L958.2 686.2 L958.2 666.9 L959.4 666.9 L959.4 686.2 L960.5 686.2 L960.5 675.5 L961.7 675.5 L961.7 675.5 L962.9 675.5 L962.9 677.0 L964.0 677.0 L964.0 749.3 L965.2 749.3 L965.2 677.0 L966.4 677.0 L966.4 677.0 L967.5 677.0 L967.5 686.2 L968.7 686.2 L968.7 686.2 L969.8 686.2 L969.8 672.4 L971.0 672.4 L971.0 697.2 L972.2 697.2 L972.2 662.1 L973.3 662.1 L973.3 683.1 L974.5 683.1 L974.5 683.1 L975.7 683.1 L975.7 686.2 L976.8 686.2 L976.8 686.2 L978.0 686.2 L978.0 686.2 L979.2 686.2 L979.2 677.0 L980.3 677.0 L980.3 677.0 L981.5 677.0 L981.5 767.2 L982.7 767.2 L982.7 767.2 L983.8 767.2 L983.8 677.0 L985.0 677.0 L985.0 677.0 L986.2 677.0 L986.2 678.6 L987.3 678.6 L987.3 678.6 L988.5 678.6 L988.5 675.5 L989.6 675.5 L989.6 700.0 L990.8 700.0 L990.8 675.5 L992.0 675.5 L992.0 675.5 L993.1 675.5 L993.1 662.1 L994.3 662.1 L994.3 683.1 L995.5 683.1 L995.5 689.2 L996.6 689.2 L996.6 678.6 L997.8 678.6 L997.8 678.6 L999.0 678.6 L999.0 705.0 L1000.1 705.0 L1000.1 677.0 L1001.3 677.0 L1001.3 683.1 L1002.5 683.1 L1002.5 683.1 L1003.6 683.1 L1003.6 683.1 L1004.8 683.1 L1004.8 686.2 L1006.0 686.2 L1006.0 686.2 L1007.1 686.2 L1007.1 773.6 L1008.3 773.6 L1008.3 773.6 L1009.5 773.6 L1009.5 677.0 L1010.6 677.0 L1010.6 677.0 L1011.8 677.0 L1011.8 660.6 L1013.0 660.6 L1013.0 674.0 L1014.1 674.0 L1014.1 678.6 L1015.3 678.6 L1015.3 680.1 L1016.4 680.1 L1016.4 783.7 L1017.6 783.7 L1017.6 675.5 L1018.8 675.5 L1018.8 689.2 L1019.9 689.2 L1019.9 689.2 L1021.1 689.2 L1021.1 672.4 L1022.3 672.4 L1022.3 689.2 L1023.4 689.2 L1023.4 683.1 L1024.6 683.1 L1024.6 700.0 L1025.8 700.0 L1025.8 683.1 L1026.9 683.1 L1026.9 680.1 L1028.1 680.1 L1028.1 680.1 L1029.3 680.1 L1029.3 680.1 L1030.4 680.1 L1030.4 680.1 L1031.6 680.1 L1031.6 678.6 L1032.8 678.6 L1032.8 664.3 L1033.9 664.3 L1033.9 678.6 L1035.1 678.6 L1035.1 739.6 L1036.2 739.6 L1036.2 683.1 L1037.4 683.1 L1037.4 686.2 L1038.6 686.2 L1038.6 686.2 L1039.7 686.2 L1039.7 686.2 L1040.9 686.2 L1040.9 686.2 L1042.1 686.2 L1042.1 683.1 L1043.2 683.1 L1043.2 678.6 L1044.4 678.6 L1044.4 677.0 L1045.6 677.0 L1045.6 744.4 L1046.7 744.4 L1046.7 744.4 L1047.9 744.4 L1047.9 744.4 L1049.1 744.4 L1049.1 689.2 L1050.2 689.2 L1050.2 675.5 L1051.4 675.5 L1051.4 675.5 L1052.6 675.5 L1052.6 674.0 L1053.7 674.0 L1053.7 674.0 L1054.9 674.0 L1054.9 670.7 L1056.1 670.7 L1056.1 678.6 L1057.2 678.6 L1057.2 678.6 L1058.4 678.6 L1058.4 677.0 L1059.5 677.0 L1059.5 683.1 L1060.7 683.1 L1060.7 683.1 L1061.9 683.1 L1061.9 683.1 L1063.0 683.1 L1063.0 739.9 L1064.2 739.9 L1064.2 674.0 L1065.4 674.0 L1065.4 689.2 L1066.5 689.2 L1066.5 689.2 L1067.7 689.2 L1067.7 689.2 L1068.9 689.2 L1068.9 711.8 L1070.0 711.8 L1070.0 680.1 L1071.2 680.1 L1071.2 680.1 L1072.4 680.1 L1072.4 791.5 L1073.5 791.5 L1073.5 791.5 L1074.7 791.5 L1074.7 680.1 L1075.9 680.1 L1075.9 680.1 L1077.0 680.1 L1077.0 668.8 L1078.2 668.8 L1078.2 680.1 L1079.4 680.1 L1079.4 683.1 L1080.5 683.1 L1080.5 683.1 L1081.7 683.1 L1081.7 683.1 L1082.8 683.1 L1082.8 683.1 L1084.0 683.1 L1084.0 705.0 L1085.2 705.0 L1085.2 683.1 L1086.3 683.1 L1086.3 683.1 L1087.5 683.1 L1087.5 683.1 L1088.7 683.1 L1088.7 683.1 L1089.8 683.1 L1089.8 672.4 L1091.0 672.4 L1091.0 678.6 L1092.2 678.6 L1092.2 677.0 L1093.3 677.0 L1093.3 700.0 L1094.5 700.0 L1094.5 675.5 L1095.7 675.5 L1095.7 675.5 L1096.8 675.5 L1096.8 677.0 L1098.0 677.0 L1098.0 672.4 L1099.2 672.4 L1099.2 683.1 L1100.3 683.1 L1100.3 683.1 L1101.5 683.1 L1101.5 767.2 L1102.7 767.2 L1102.7 651.9 L1103.8 651.9 L1103.8 678.6 L1105.0 678.6 L1105.0 678.6 L1106.2 678.6 L1106.2 678.6 L1107.3 678.6 L1107.3 678.6 L1108.5 678.6 L1108.5 689.2 L1109.6 689.2 L1109.6 689.2 L1110.8 689.2 L1110.8 689.2 L1112.0 689.2 L1112.0 704.0 L1113.1 704.0 L1113.1 672.4 L1114.3 672.4 L1114.3 677.0 L1115.5 677.0 L1115.5 683.1 L1116.6 683.1 L1116.6 672.4 L1117.8 672.4 L1117.8 672.4 L1119.0 672.4 L1119.0 665.0 L1120.1 665.0 L1120.1 755.6 L1121.3 755.6 L1121.3 755.6 L1122.5 755.6 L1122.5 677.0 L1123.6 677.0 L1123.6 683.1 L1124.8 683.1 L1124.8 683.1 L1126.0 683.1 L1126.0 675.5 L1127.1 675.5 L1127.1 686.2 L1128.3 686.2 L1128.3 689.2 L1129.5 689.2 L1129.5 805.4 L1130.6 805.4 L1130.6 805.4 L1131.8 805.4 L1131.8 680.1 L1132.9 680.1 L1132.9 674.0 L1134.1 674.0 L1134.1 674.0 L1135.3 674.0 L1135.3 680.1 L1136.4 680.1 L1136.4 648.2 L1137.6 648.2 L1137.6 680.1 L1138.8 680.1 L1138.8 787.4 L1139.9 787.4 L1139.9 787.4 L1141.1 787.4 L1141.1 672.4 L1142.3 672.4 L1142.3 672.4 L1143.4 672.4 L1143.4 680.1 L1144.6 680.1 L1144.6 680.1 L1145.8 680.1 L1145.8 680.1 L1146.9 680.1 L1146.9 675.5 L1148.1 675.5 L1148.1 782.2 L1149.3 782.2 L1149.3 782.2 L1150.4 782.2 L1150.4 689.2 L1151.6 689.2 L1151.6 686.2 L1152.8 686.2 L1152.8 686.2 L1153.9 686.2 L1153.9 675.5 L1155.1 675.5 L1155.1 677.0 L1156.2 677.0 L1156.2 677.0 L1157.4 677.0 L1157.4 677.0 L1158.6 677.0 L1158.6 677.0 L1159.7 677.0 L1159.7 700.0 L1160.9 700.0 L1160.9 686.2 L1162.1 686.2 L1162.1 686.2 L1163.2 686.2 L1163.2 686.2 L1164.4 686.2 L1164.4 686.2 L1165.6 686.2 L1165.6 695.0 L1166.7 695.0 L1166.7 680.1 L1167.9 680.1 L1167.9 677.0 L1169.1 677.0 L1169.1 672.4 L1170.2 672.4 L1170.2 672.4 L1171.4 672.4 L1171.4 675.5 L1172.6 675.5 L1172.6 675.5 L1173.7 675.5 L1173.7 680.1 L1174.9 680.1 L1174.9 696.0 L1176.0 696.0 L1176.0 680.1 L1177.2 680.1 L1177.2 680.1 L1178.4 680.1 L1178.4 674.0 L1179.5 674.0 L1179.5 674.0 L1180.7 674.0 L1180.7 689.2 L1181.9 689.2 L1181.9 678.6 L1183.0 678.6 L1183.0 689.2 L1184.2 689.2 L1184.2 670.7 L1185.4 670.7 L1185.4 791.5 L1186.5 791.5 L1186.5 791.5 L1187.7 791.5" stroke="#ff0054"/>
<path d="M1168.2 690 V762" stroke="#ff0054" stroke-width="1.3"/>
<path d="M915.1 651.9 L916.3 651.9 L916.3 651.9 L917.4 651.9 L917.4 651.9 L918.6 651.9 L918.6 651.9 L919.8 651.9 L919.8 651.9 L920.9 651.9 L920.9 651.9 L922.1 651.9 L922.1 651.9 L923.2 651.9 L923.2 651.9 L924.4 651.9 L924.4 651.9 L925.6 651.9 L925.6 670.7 L926.7 670.7 L926.7 670.7 L927.9 670.7 L927.9 670.7 L929.1 670.7 L929.1 659.4 L930.2 659.4 L930.2 659.4 L931.4 659.4 L931.4 659.4 L932.6 659.4 L932.6 659.4 L933.7 659.4 L933.7 659.4 L934.9 659.4 L934.9 650.8 L936.1 650.8 L936.1 650.8 L937.2 650.8 L937.2 650.8 L938.4 650.8 L938.4 650.8 L939.6 650.8 L939.6 650.8 L940.7 650.8 L940.7 650.8 L941.9 650.8 L941.9 650.8 L943.0 650.8 L943.1 650.8 L944.2 650.8 L944.2 650.8 L945.4 650.8 L945.4 650.8 L946.5 650.8 L946.5 650.8 L947.7 650.8 L947.7 650.8 L948.9 650.8 L948.9 650.8 L950.0 650.8 L950.0 650.8 L951.2 650.8 L951.2 650.8 L952.4 650.8 L952.4 650.8 L953.5 650.8 L953.5 650.8 L954.7 650.8 L954.7 650.8 L955.9 650.8 L955.9 650.8 L957.0 650.8 L957.0 650.8 L958.2 650.8 L958.2 656.4 L959.4 656.4 L959.4 656.4 L960.5 656.4 L960.5 656.4 L961.7 656.4 L961.7 656.4 L962.9 656.4 L962.9 656.4 L964.0 656.4 L964.0 656.4 L965.2 656.4 L965.2 655.7 L966.4 655.7 L966.4 655.7 L967.5 655.7 L967.5 655.7 L968.7 655.7 L968.7 655.7 L969.8 655.7 L969.8 655.7 L971.0 655.7 L971.0 655.7 L972.2 655.7 L972.2 655.7 L973.3 655.7 L973.3 655.7 L974.5 655.7 L974.5 655.7 L975.7 655.7 L975.7 655.7 L976.8 655.7 L976.8 657.6 L978.0 657.6 L978.0 657.6 L979.2 657.6 L979.2 657.6 L980.3 657.6 L980.3 657.6 L981.5 657.6 L981.5 657.6 L982.7 657.6 L982.7 657.6 L983.8 657.6 L983.8 657.6 L985.0 657.6 L985.0 657.6 L986.2 657.6 L986.2 657.6 L987.3 657.6 L987.3 657.6 L988.5 657.6 L988.5 657.6 L989.6 657.6 L989.6 650.8 L990.8 650.8 L990.8 650.8 L992.0 650.8 L992.0 650.8 L993.1 650.8 L993.1 650.8 L994.3 650.8 L994.3 650.8 L995.5 650.8 L995.5 650.8 L996.6 650.8 L996.6 650.8 L997.8 650.8 L997.8 650.8 L999.0 650.8 L999.0 650.8 L1000.1 650.8 L1000.1 650.8 L1001.3 650.8 L1001.3 650.8 L1002.5 650.8 L1002.5 650.8 L1003.6 650.8 L1003.6 650.8 L1004.8 650.8 L1004.8 650.8 L1006.0 650.8 L1006.0 650.8 L1007.1 650.8 L1007.1 650.8 L1008.3 650.8 L1008.3 650.8 L1009.5 650.8 L1009.5 650.8 L1010.6 650.8 L1010.6 652.3 L1011.8 652.3 L1011.8 652.3 L1013.0 652.3 L1013.0 652.3 L1014.1 652.3 L1014.1 652.3 L1015.3 652.3 L1015.3 676.3 L1016.4 676.3 L1016.4 676.3 L1017.6 676.3 L1017.6 676.3 L1018.8 676.3 L1018.8 676.3 L1019.9 676.3 L1019.9 676.3 L1021.1 676.3 L1021.1 660.6 L1022.3 660.6 L1022.3 660.6 L1023.4 660.6 L1023.4 660.6 L1024.6 660.6 L1024.6 660.6 L1025.8 660.6 L1025.8 660.6 L1026.9 660.6 L1026.9 660.6 L1028.1 660.6 L1028.1 660.6 L1029.3 660.6 L1029.3 672.5 L1030.4 672.5 L1030.4 672.5 L1031.6 672.5 L1031.6 672.5 L1032.8 672.5 L1032.8 653.1 L1033.9 653.1 L1033.9 653.1 L1035.1 653.1 L1035.1 653.1 L1036.2 653.1 L1036.2 653.1 L1037.4 653.1 L1037.4 653.1 L1038.6 653.1 L1038.6 653.1 L1039.7 653.1 L1039.7 653.1 L1040.9 653.1 L1040.9 653.1 L1042.1 653.1 L1042.1 653.1 L1043.2 653.1 L1043.2 653.1 L1044.4 653.1 L1044.4 653.1 L1045.6 653.1 L1045.6 653.1 L1046.7 653.1 L1046.7 653.1 L1047.9 653.1 L1047.9 653.1 L1049.1 653.1 L1049.1 652.1 L1050.2 652.1 L1050.2 652.1 L1051.4 652.1 L1051.4 652.1 L1052.6 652.1 L1052.6 652.1 L1053.7 652.1 L1053.7 652.1 L1054.9 652.1 L1054.9 652.1 L1056.1 652.1 L1056.1 652.1 L1057.2 652.1 L1057.2 646.9 L1058.4 646.9 L1058.4 646.9 L1059.5 646.9 L1059.5 646.9 L1060.7 646.9 L1060.7 646.9 L1061.9 646.9 L1061.9 646.9 L1063.0 646.9 L1063.0 646.9 L1064.2 646.9 L1064.2 646.9 L1065.4 646.9 L1065.4 680.9 L1066.5 680.9 L1066.5 680.9 L1067.7 680.9 L1067.7 680.9 L1068.9 680.9 L1068.9 680.9 L1070.0 680.9 L1070.0 655.8 L1071.2 655.8 L1071.2 655.8 L1072.4 655.8 L1072.4 659.9 L1073.5 659.9 L1073.5 659.9 L1074.7 659.9 L1074.7 659.9 L1075.9 659.9 L1075.9 659.9 L1077.0 659.9 L1077.0 659.9 L1078.2 659.9 L1078.2 663.1 L1079.4 663.1 L1079.4 663.1 L1080.5 663.1 L1080.5 663.1 L1081.7 663.1 L1081.7 663.1 L1082.8 663.1 L1082.8 663.1 L1084.0 663.1 L1084.0 671.2 L1085.2 671.2 L1085.2 671.2 L1086.3 671.2 L1086.3 650.1 L1087.5 650.1 L1087.5 650.1 L1088.7 650.1 L1088.7 663.9 L1089.8 663.9 L1089.8 663.9 L1091.0 663.9 L1091.0 644.9 L1092.2 644.9 L1092.2 644.9 L1093.3 644.9 L1093.3 644.9 L1094.5 644.9 L1094.5 644.9 L1095.7 644.9 L1095.7 655.8 L1096.8 655.8 L1096.8 655.8 L1098.0 655.8 L1098.0 658.2 L1099.2 658.2 L1099.2 658.2 L1100.3 658.2 L1100.3 658.2 L1101.5 658.2 L1101.5 658.2 L1102.7 658.2 L1102.7 683.4 L1103.8 683.4 L1103.8 683.4 L1105.0 683.4 L1105.0 683.4 L1106.2 683.4 L1106.2 683.4 L1107.3 683.4 L1107.3 683.4 L1108.5 683.4 L1108.5 683.4 L1109.6 683.4 L1109.6 650.9 L1110.8 650.9 L1110.8 650.9 L1112.0 650.9 L1112.0 650.9 L1113.1 650.9 L1113.1 650.9 L1114.3 650.9 L1114.3 649.3 L1115.5 649.3 L1115.5 649.3 L1116.6 649.3 L1116.6 649.3 L1117.8 649.3 L1117.8 649.3 L1119.0 649.3 L1119.0 649.3 L1120.1 649.3 L1120.1 649.3 L1121.3 649.3 L1121.3 667.2 L1122.5 667.2 L1122.5 667.2 L1123.6 667.2 L1123.6 650.9 L1124.8 650.9 L1124.8 650.9 L1126.0 650.9 L1126.0 650.9 L1127.1 650.9 L1127.1 650.9 L1128.3 650.9 L1128.3 650.9 L1129.5 650.9 L1129.5 650.9 L1130.6 650.9 L1130.6 647.2 L1131.8 647.2 L1131.8 647.2 L1132.9 647.2 L1132.9 647.2 L1134.1 647.2 L1134.1 647.2 L1135.3 647.2 L1135.3 647.2 L1136.4 647.2 L1136.4 656.6 L1137.6 656.6 L1137.6 656.6 L1138.8 656.6 L1138.8 656.6 L1139.9 656.6 L1139.9 672.8 L1141.1 672.8 L1141.1 672.8 L1142.3 672.8 L1142.3 672.8 L1143.4 672.8 L1143.4 653.4 L1144.6 653.4 L1144.6 653.4 L1145.8 653.4 L1145.8 653.4 L1146.9 653.4 L1146.9 653.4 L1148.1 653.4 L1148.1 653.4 L1149.3 653.4 L1149.3 672.8 L1150.4 672.8 L1150.4 672.8 L1151.6 672.8 L1151.6 650.9 L1152.8 650.9 L1152.8 650.9 L1153.9 650.9 L1153.9 650.9 L1155.1 650.9 L1155.1 650.9 L1156.2 650.9 L1156.2 650.9 L1157.4 650.9 L1157.4 650.9 L1158.6 650.9 L1158.6 650.9 L1159.7 650.9 L1159.7 650.9 L1160.9 650.9 L1160.9 650.9 L1162.1 650.9 L1162.1 650.9 L1163.2 650.9 L1163.2 650.9 L1164.4 650.9 L1164.4 650.9 L1165.6 650.9 L1165.6 650.9 L1166.7 650.9 L1166.7 650.9 L1167.9 650.9 L1167.9 650.9 L1169.1 650.9 L1169.1 685.0 L1170.2 685.0 L1170.2 685.0 L1171.4 685.0 L1171.4 685.0 L1172.6 685.0 L1172.6 685.0 L1173.7 685.0 L1173.7 646.9 L1174.9 646.9 L1174.9 646.9 L1176.0 646.9 L1176.0 646.9 L1177.2 646.9 L1177.2 646.9 L1178.4 646.9 L1178.4 646.9 L1179.5 646.9 L1179.5 646.9 L1180.7 646.9" stroke="#ffcc00"/>
<path d="M908.1 669.4 L909.3 669.4 L909.3 669.4 L910.4 669.4 L910.4 637.3 L911.6 637.3 L911.6 635.8 L912.8 635.8 L912.8 634.3 L913.9 634.3 L913.9 635.8 L915.1 635.8 L915.1 635.8 L916.3 635.8 L916.3 625.1 L917.4 625.1 L917.4 625.1 L918.6 625.1 L918.6 664.7 L919.8 664.7 L919.8 664.7 L920.9 664.7 L920.9 628.2 L922.1 628.2 L922.1 628.2 L923.2 628.2 L923.2 625.1 L924.4 625.1 L924.4 628.2 L925.6 628.2 L925.6 634.3 L926.7 634.3 L926.7 635.8 L927.9 635.8 L927.9 656.6 L929.1 656.6 L929.1 656.6 L930.2 656.6 L930.2 628.2 L931.4 628.2 L931.4 625.1 L932.6 625.1 L932.6 629.7 L933.7 629.7 L933.7 628.2 L934.9 628.2 L934.9 674.5 L936.1 674.5 L936.1 674.5 L937.2 674.5 L937.2 674.5 L938.4 674.5 L938.4 674.5 L939.6 674.5 L939.6 674.5 L940.7 674.5 L940.7 674.5 L941.9 674.5 L941.9 629.7 L943.0 629.7 L943.1 629.7 L944.2 629.7 L944.2 625.1 L945.4 625.1 L945.4 634.3 L946.5 634.3 L946.5 634.3 L947.7 634.3 L947.7 634.3 L948.9 634.3 L948.9 634.3 L950.0 634.3 L950.0 634.3 L951.2 634.3 L951.2 635.8 L952.4 635.8 L952.4 635.8 L953.5 635.8 L953.5 635.8 L954.7 635.8 L954.7 625.1 L955.9 625.1 L955.9 625.1 L957.0 625.1 L957.0 625.1 L958.2 625.1 L958.2 687.4 L959.4 687.4 L959.4 628.2 L960.5 628.2 L960.5 623.6 L961.7 623.6 L961.7 623.6 L962.9 623.6 L962.9 623.6 L964.0 623.6 L964.0 623.6 L965.2 623.6 L965.2 637.3 L966.4 637.3 L966.4 637.3 L967.5 637.3 L967.5 672.8 L968.7 672.8 L968.7 623.6 L969.8 623.6 L969.8 629.7 L971.0 629.7 L971.0 625.1 L972.2 625.1 L972.2 625.1 L973.3 625.1 L973.3 625.1 L974.5 625.1 L974.5 623.6 L975.7 623.6 L975.7 637.3 L976.8 637.3 L976.8 637.3 L978.0 637.3 L978.0 637.3 L979.2 637.3 L979.2 637.3 L980.3 637.3 L980.3 637.3 L981.5 637.3 L981.5 634.3 L982.7 634.3 L982.7 634.3 L983.8 634.3 L983.8 674.5 L985.0 674.5 L985.0 674.5 L986.2 674.5 L986.2 637.3 L987.3 637.3 L987.3 635.8 L988.5 635.8 L988.5 635.8 L989.6 635.8 L989.6 695.5 L990.8 695.5 L990.8 695.5 L992.0 695.5 L992.0 634.3 L993.1 634.3 L993.1 623.6 L994.3 623.6 L994.3 623.6 L995.5 623.6 L995.5 623.6 L996.6 623.6 L996.6 623.6 L997.8 623.6 L997.8 623.6 L999.0 623.6 L999.0 623.6 L1000.1 623.6 L1000.1 637.3 L1001.3 637.3 L1001.3 612.7 L1002.5 612.7 L1002.5 637.3 L1003.6 637.3 L1003.6 637.3 L1004.8 637.3 L1004.8 637.3 L1006.0 637.3 L1006.0 637.3 L1007.1 637.3 L1007.1 634.3 L1008.3 634.3 L1008.3 637.3 L1009.5 637.3 L1009.5 637.3 L1010.6 637.3 L1010.6 634.3 L1011.8 634.3 L1011.8 656.6 L1013.0 656.6 L1013.0 634.3 L1014.1 634.3 L1014.1 623.6 L1015.3 623.6 L1015.3 637.3 L1016.4 637.3 L1016.4 637.3 L1017.6 637.3 L1017.6 646.9 L1018.8 646.9 L1018.8 646.9 L1019.9 646.9 L1019.9 628.2 L1021.1 628.2 L1021.1 623.6 L1022.3 623.6 L1022.3 623.6 L1023.4 623.6 L1023.4 623.6 L1024.6 623.6 L1024.6 637.3 L1025.8 637.3 L1025.8 629.7 L1026.9 629.7 L1026.9 629.7 L1028.1 629.7 L1028.1 634.3 L1029.3 634.3 L1029.3 634.3 L1030.4 634.3 L1030.4 634.3 L1031.6 634.3 L1031.6 635.8 L1032.8 635.8 L1032.8 635.8 L1033.9 635.8 L1033.9 623.6 L1035.1 623.6 L1035.1 625.1 L1036.2 625.1 L1036.2 628.2 L1037.4 628.2 L1037.4 671.2 L1038.6 671.2 L1038.6 671.2 L1039.7 671.2 L1039.7 637.3 L1040.9 637.3 L1040.9 637.3 L1042.1 637.3 L1042.1 637.3 L1043.2 637.3 L1043.2 629.7 L1044.4 629.7 L1044.4 628.2 L1045.6 628.2 L1045.6 628.2 L1046.7 628.2 L1046.7 623.6 L1047.9 623.6 L1047.9 623.6 L1049.1 623.6 L1049.1 623.6 L1050.2 623.6 L1050.2 628.2 L1051.4 628.2 L1051.4 623.6 L1052.6 623.6 L1052.6 623.6 L1053.7 623.6 L1053.7 623.6 L1054.9 623.6 L1054.9 623.6 L1056.1 623.6 L1056.1 672.8 L1057.2 672.8 L1057.2 628.2 L1058.4 628.2 L1058.4 628.2 L1059.5 628.2 L1059.5 628.2 L1060.7 628.2 L1060.7 628.2 L1061.9 628.2 L1061.9 620.0 L1063.0 620.0 L1063.0 629.7 L1064.2 629.7 L1064.2 625.1 L1065.4 625.1 L1065.4 625.1 L1066.5 625.1 L1066.5 625.1 L1067.7 625.1 L1067.7 625.1 L1068.9 625.1 L1068.9 637.3 L1070.0 637.3 L1070.0 629.7 L1071.2 629.7 L1071.2 629.7 L1072.4 629.7 L1072.4 629.7 L1073.5 629.7 L1073.5 629.7 L1074.7 629.7 L1074.7 680.1 L1075.9 680.1 L1075.9 680.1 L1077.0 680.1 L1077.0 629.7 L1078.2 629.7 L1078.2 623.6 L1079.4 623.6 L1079.4 623.6 L1080.5 623.6 L1080.5 623.6 L1081.7 623.6 L1081.7 623.6 L1082.8 623.6 L1082.8 623.6 L1084.0 623.6 L1084.0 619.0 L1085.2 619.0 L1085.2 628.2 L1086.3 628.2 L1086.3 628.2 L1087.5 628.2 L1087.5 628.2 L1088.7 628.2 L1088.7 628.2 L1089.8 628.2 L1089.8 634.3 L1091.0 634.3 L1091.0 634.3 L1092.2 634.3 L1092.2 628.2 L1093.3 628.2 L1093.3 628.2 L1094.5 628.2 L1094.5 674.5 L1095.7 674.5 L1095.7 625.1 L1096.8 625.1 L1096.8 629.7 L1098.0 629.7 L1098.0 629.7 L1099.2 629.7 L1099.2 623.6 L1100.3 623.6 L1100.3 635.8 L1101.5 635.8 L1101.5 635.8 L1102.7 635.8 L1102.7 648.5 L1103.8 648.5 L1103.8 635.8 L1105.0 635.8 L1105.0 629.7 L1106.2 629.7 L1106.2 629.7 L1107.3 629.7 L1107.3 629.7 L1108.5 629.7 L1108.5 634.3 L1109.6 634.3 L1109.6 634.3 L1110.8 634.3 L1110.8 634.3 L1112.0 634.3 L1112.0 635.8 L1113.1 635.8 L1113.1 676.9 L1114.3 676.9 L1114.3 625.1 L1115.5 625.1 L1115.5 628.2 L1116.6 628.2 L1116.6 628.2 L1117.8 628.2 L1117.8 628.2 L1119.0 628.2 L1119.0 643.6 L1120.1 643.6 L1120.1 623.6 L1121.3 623.6 L1121.3 623.6 L1122.5 623.6 L1122.5 634.3 L1123.6 634.3 L1123.6 634.3 L1124.8 634.3 L1124.8 637.3 L1126.0 637.3 L1126.0 637.3 L1127.1 637.3 L1127.1 637.3 L1128.3 637.3 L1128.3 623.6 L1129.5 623.6 L1129.5 623.6 L1130.6 623.6 L1130.6 621.0 L1131.8 621.0 L1131.8 695.5 L1132.9 695.5 L1132.9 623.6 L1134.1 623.6 L1134.1 623.6 L1135.3 623.6 L1135.3 623.6 L1136.4 623.6 L1136.4 629.7 L1137.6 629.7 L1137.6 629.7 L1138.8 629.7 L1138.8 635.8 L1139.9 635.8 L1139.9 635.8 L1141.1 635.8 L1141.1 635.8 L1142.3 635.8 L1142.3 695.5 L1143.4 695.5 L1143.4 695.5 L1144.6 695.5 L1144.6 623.6 L1145.8 623.6 L1145.8 623.6 L1146.9 623.6 L1146.9 623.6 L1148.1 623.6 L1148.1 623.6 L1149.3 623.6 L1149.3 634.3 L1150.4 634.3 L1150.4 634.3 L1151.6 634.3 L1151.6 634.3 L1152.8 634.3 L1152.8 616.0 L1153.9 616.0 L1153.9 623.6 L1155.1 623.6 L1155.1 623.6 L1156.2 623.6 L1156.2 623.6 L1157.4 623.6 L1157.4 616.0 L1158.6 616.0 L1158.6 683.4 L1159.7 683.4 L1159.7 623.6 L1160.9 623.6 L1160.9 616.0 L1162.1 616.0 L1162.1 625.1 L1163.2 625.1 L1163.2 625.1 L1164.4 625.1 L1164.4 625.1 L1165.6 625.1 L1165.6 623.6 L1166.7 623.6 L1166.7 623.6 L1167.9 623.6 L1167.9 623.6 L1169.1 623.6 L1169.1 625.1 L1170.2 625.1 L1170.2 625.1 L1171.4 625.1 L1171.4 625.1 L1172.6 625.1 L1172.6 625.1 L1173.7 625.1 L1173.7 616.1 L1174.9 616.1 L1174.9 625.1 L1176.0 625.1 L1176.0 625.1 L1177.2 625.1 L1177.2 625.1 L1178.4 625.1 L1178.4 625.1 L1179.5 625.1 L1179.5 619.3 L1180.7 619.3 L1180.7 628.2 L1181.9 628.2 L1181.9 628.2 L1183.0 628.2 L1183.0 628.2 L1184.2 628.2 L1184.2 628.2 L1185.4 628.2 L1185.4 700.0 L1186.5 700.0 L1186.5 625.1 L1187.7 625.1" stroke="#33aa99"/>
</g>
<text class="ax" x="867" y="842.4">92</text>
<text class="ax" x="867" y="781.3">94</text>
<text class="ax" x="867" y="720.3">96</text>
<text class="ax" x="867" y="659.2">98</text>
<text class="ax" x="927.6" y="896.3" text-anchor="middle">17:30</text><text class="ax" x="1068.7" y="896.3" text-anchor="middle">18:00</text>
</svg>
<div class="xl" style="left:267.7px;top:882.5px;width:38.6px">23 Aug</div>
<div class="xl" style="left:408.6px;top:882.5px;width:38.6px">30 Aug</div>
<div class="xl" style="left:549.8px;top:882.5px;width:38.6px">06 Sep</div>
<div class="xl" style="left:691.9px;top:882.5px;width:38.6px">13 Sep</div>
</body></html>
